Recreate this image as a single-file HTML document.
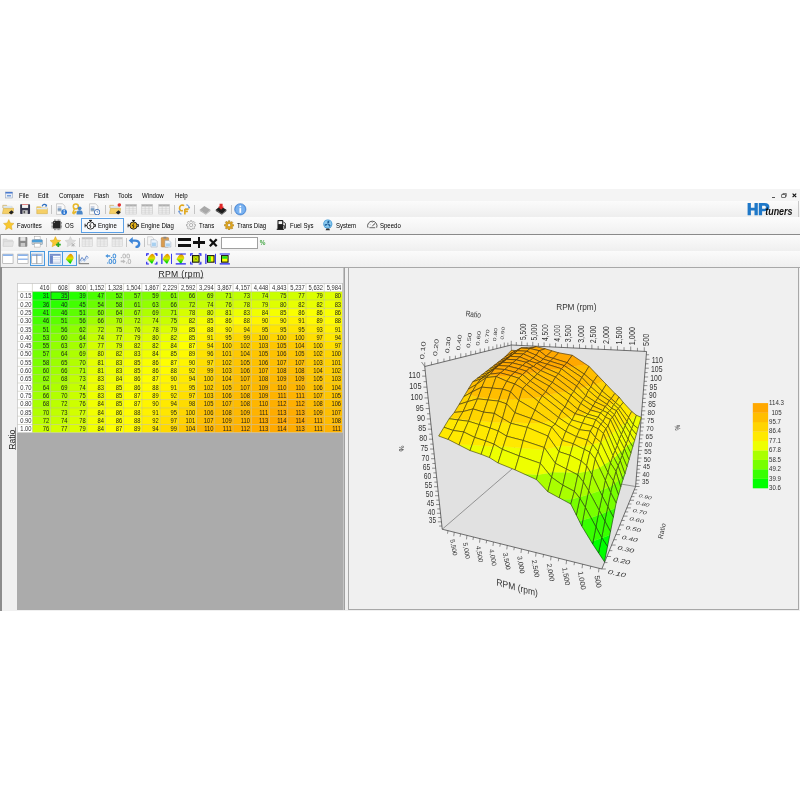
<!DOCTYPE html>
<html><head><meta charset="utf-8">
<style>
html,body{margin:0;padding:0;background:#fff;width:800px;height:800px;overflow:hidden;position:relative;font-family:"Liberation Sans",sans-serif;}
body{will-change:transform}
.a{position:absolute}
.c{position:absolute;box-sizing:border-box;border-right:0.5px solid #b8b8a0;border-bottom:0.5px solid #b8b8a0;font-size:6.1px;line-height:8.3px;text-align:right;padding-right:1.6px;color:#222;white-space:nowrap;overflow:hidden}
.h{background:#fff;color:#333;border-color:#d8d8d8}
.m{position:absolute;font-size:6.8px;color:#000;top:191.6px;line-height:8px;transform:scaleX(0.9);transform-origin:0 0}
.t{position:absolute;font-size:6.7px;color:#000;top:221.5px;line-height:8px;transform:scaleX(0.9);transform-origin:0 0}
</style></head><body>
<div class="a" style="left:0;top:189px;width:800px;height:422px;background:#f0f0f0"></div>
<div class="a" style="left:0;top:189px;width:800px;height:12px;background:#f4f4f4"></div>
<div class="a" style="left:0;top:201px;width:800px;height:16px;background:linear-gradient(#fbfbfb,#eeeeee)"></div>
<div class="a" style="left:0;top:217px;width:800px;height:17px;background:linear-gradient(#fcfcfc,#f0f0f0)"></div>
<div class="a" style="left:0;top:233.6px;width:800px;height:0.9px;background:#8a8a8a"></div>
<div class="a" style="left:0;top:234.5px;width:800px;height:16.5px;background:linear-gradient(#fbfbfb,#efefef)"></div>
<div class="a" style="left:0;top:251px;width:800px;height:16px;background:linear-gradient(#fbfbfb,#efefef)"></div>
<div class="a" style="left:0;top:266.6px;width:800px;height:0.8px;background:#a8a8a8"></div>
<div class="m" style="left:18.7px">File</div>
<div class="m" style="left:38px">Edit</div>
<div class="m" style="left:58.5px">Compare</div>
<div class="m" style="left:93.8px">Flash</div>
<div class="m" style="left:117.8px">Tools</div>
<div class="m" style="left:141.6px">Window</div>
<div class="m" style="left:174.7px">Help</div>
<svg class="a" style="left:4.5px;top:190.5px" width="8" height="8" viewBox="0 0 16 16"><rect x="1" y="2" width="14" height="12" fill="#e8eef8" stroke="#8898b0"/><rect x="1" y="2" width="14" height="3" fill="#4a7ad0"/><rect x="4" y="8" width="8" height="3" fill="#7aa0d8"/></svg>
<div class="a" style="left:771.6px;top:196.6px;width:3.4px;height:0.7px;background:#555"></div>
<svg class="a" style="left:781px;top:192.8px" width="6" height="5" viewBox="0 0 13 12"><rect x="1" y="4" width="9" height="7" fill="none" stroke="#333" stroke-width="1.6"/><path d="M4 4V1h8v7h-2" fill="none" stroke="#333" stroke-width="1.6"/></svg>
<svg class="a" style="left:792.4px;top:193px" width="4.8" height="4.8" viewBox="0 0 12 12"><path d="M1.5 1.5l9 9M10.5 1.5l-9 9" stroke="#111" stroke-width="2.8"/></svg>
<svg class="a" style="left:740px;top:200px" width="60" height="18" viewBox="740 200 60 18" font-family="Liberation Sans, sans-serif"><path d="M747.6 203.1h3.3v4.6h3.6v-4.6h3.3v12.2h-3.3v-4.8h-3.6v4.8h-3.3z" fill="#1f78c8"/><path d="M758.8 203.1h5.6c3.4 0 5 1.5 5 4s-1.8 4.1-5 4.1h-2.3v4.1h-3.3zM762.1 205.7v3h1.9c1.2 0 1.9-.5 1.9-1.5s-.7-1.5-1.9-1.5z" fill="#1f78c8" fill-rule="evenodd"/><text transform="translate(765.2 215.3) scale(0.8 1)" font-size="11.2" font-weight="bold" font-style="italic" fill="#111">tuners</text></svg>
<div class="a" style="left:798.3px;top:201px;width:0.7px;height:16px;background:#c8c8c8"></div>
<svg class="a" style="left:2px;top:203.2px" width="12.2" height="12.2" viewBox="0 0 16 16"><path d="M1 3h5l1 1.5h6v2H1z" fill="#e8d9a8" stroke="#b89a50" stroke-width=".6"/><rect x="2" y="4" width="11" height="4" fill="#dbe8f5"/><path d="M0.5 14L2 7h13.5l-1.5 7z" fill="#f5cf66" stroke="#c9a23c" stroke-width=".6"/><path d="M9 12.5l3.5-3 3 2.5-3.5 3.2z" fill="#222"/></svg>
<svg class="a" style="left:19.2px;top:203.2px" width="12.2" height="12.2" viewBox="0 0 16 16"><rect x="1.5" y="1.5" width="13" height="13" rx="1" fill="#34344a"/><rect x="4" y="1.5" width="8" height="5" fill="#f4f4f4"/><rect x="4" y="1.5" width="8" height="1" fill="#d66"/><rect x="4.5" y="9.5" width="7" height="5" fill="#c8c8c8"/><rect x="6" y="10.5" width="2" height="3" fill="#555"/></svg>
<svg class="a" style="left:35.5px;top:203.2px" width="12.2" height="12.2" viewBox="0 0 16 16"><path d="M1 5h5l1 1.5h8V14H1z" fill="#f5cf66" stroke="#c9a23c" stroke-width=".6"/><rect x="1" y="6.5" width="14" height="1.8" fill="#dbe8f5"/><path d="M8 4.5c1-3 4-3.5 5.5-1.5" stroke="#2d6fc0" stroke-width="1.5" fill="none"/><path d="M14.5 1.5v3h-3z" fill="#2d6fc0"/></svg>
<div class="a" style="left:51.2px;top:205px;width:0.7px;height:9px;background:#c4c4c4"></div>
<svg class="a" style="left:55px;top:203.2px" width="12.2" height="12.2" viewBox="0 0 16 16"><path d="M2 1h8l3 3v11H2z" fill="#fafafa" stroke="#a8a8a8" stroke-width=".7"/><rect x="3.5" y="4" width="5" height="2.5" fill="#c9d0e0"/><rect x="3.5" y="7" width="5" height="2" fill="#5c88b8"/><rect x="3.5" y="9" width="5" height="2" fill="#9ab"/><circle cx="12" cy="12" r="3.8" fill="#2f78d0"/><rect x="11.4" y="11" width="1.3" height="3.5" fill="#fff"/><circle cx="12" cy="9.7" r=".7" fill="#fff"/></svg>
<svg class="a" style="left:72px;top:203.2px" width="12.2" height="12.2" viewBox="0 0 16 16"><circle cx="5" cy="4.5" r="3.3" fill="none" stroke="#e8b828" stroke-width="2"/><path d="M3.5 7l-2.5 6 1.5 1 1-2 1 .5 1-2" stroke="#e8b828" stroke-width="1.8" fill="none"/><circle cx="10" cy="7" r="2.5" fill="#4a86c8"/><path d="M6 15v-2c0-2.5 2-3.5 4-3.5s4 1 4 3.5v2z" fill="#4a86c8"/></svg>
<svg class="a" style="left:88.2px;top:203.2px" width="12.2" height="12.2" viewBox="0 0 16 16"><path d="M2 1h8l3 3v11H2z" fill="#fafafa" stroke="#a8a8a8" stroke-width=".7"/><rect x="3.5" y="4" width="5" height="2.5" fill="#c9d0e0"/><rect x="3.5" y="7" width="5" height="2" fill="#5c88b8"/><rect x="3.5" y="9" width="5" height="2" fill="#9ab"/><circle cx="12" cy="12" r="3.6" fill="#fff" stroke="#2f62b0" stroke-width="1.2"/><path d="M12 10v2h1.5" stroke="#2f62b0" stroke-width=".8" fill="none"/></svg>
<div class="a" style="left:105px;top:205px;width:0.7px;height:9px;background:#c4c4c4"></div>
<svg class="a" style="left:108.5px;top:203.2px" width="12.2" height="12.2" viewBox="0 0 16 16"><path d="M1 3h5l1 1.5h6v2H1z" fill="#e8d9a8" stroke="#b89a50" stroke-width=".6"/><rect x="2" y="4" width="11" height="4" fill="#dbe8f5"/><path d="M0.5 14L2 7h13.5l-1.5 7z" fill="#f5cf66" stroke="#c9a23c" stroke-width=".6"/><path d="M9 12.5l3.5-3 3 2.5-3.5 3.2z" fill="#222"/><circle cx="13.5" cy="2.5" r="2.3" fill="#e03030"/></svg>
<svg class="a" style="left:124.8px;top:203.2px" width="12.2" height="12.2" viewBox="0 0 16 16"><rect x="1" y="2" width="14" height="12.5" fill="#f2f2f2" stroke="#c8c8c8" stroke-width=".8"/><rect x="1" y="2" width="14" height="2.5" fill="#b0b0b0"/><line x1="1" y1="7" x2="15" y2="7" stroke="#c8c8c8" stroke-width=".7"/><line x1="1" y1="9.5" x2="15" y2="9.5" stroke="#c8c8c8" stroke-width=".7"/><line x1="1" y1="12" x2="15" y2="12" stroke="#c8c8c8" stroke-width=".7"/><line x1="5.5" y1="2" x2="5.5" y2="14.5" stroke="#c8c8c8" stroke-width=".7"/><line x1="10.5" y1="2" x2="10.5" y2="14.5" stroke="#c8c8c8" stroke-width=".7"/></svg>
<svg class="a" style="left:141.4px;top:203.2px" width="12.2" height="12.2" viewBox="0 0 16 16"><rect x="1" y="2" width="14" height="12.5" fill="#f2f2f2" stroke="#c8c8c8" stroke-width=".8"/><rect x="1" y="2" width="14" height="2.5" fill="#b0b0b0"/><line x1="1" y1="7" x2="15" y2="7" stroke="#c8c8c8" stroke-width=".7"/><line x1="1" y1="9.5" x2="15" y2="9.5" stroke="#c8c8c8" stroke-width=".7"/><line x1="1" y1="12" x2="15" y2="12" stroke="#c8c8c8" stroke-width=".7"/><line x1="5.5" y1="2" x2="5.5" y2="14.5" stroke="#c8c8c8" stroke-width=".7"/><line x1="10.5" y1="2" x2="10.5" y2="14.5" stroke="#c8c8c8" stroke-width=".7"/></svg>
<svg class="a" style="left:158.2px;top:203.2px" width="12.2" height="12.2" viewBox="0 0 16 16"><rect x="1" y="2" width="14" height="12.5" fill="#f2f2f2" stroke="#c8c8c8" stroke-width=".8"/><rect x="1" y="2" width="14" height="2.5" fill="#b0b0b0"/><line x1="1" y1="7" x2="15" y2="7" stroke="#c8c8c8" stroke-width=".7"/><line x1="1" y1="9.5" x2="15" y2="9.5" stroke="#c8c8c8" stroke-width=".7"/><line x1="1" y1="12" x2="15" y2="12" stroke="#c8c8c8" stroke-width=".7"/><line x1="5.5" y1="2" x2="5.5" y2="14.5" stroke="#c8c8c8" stroke-width=".7"/><line x1="10.5" y1="2" x2="10.5" y2="14.5" stroke="#c8c8c8" stroke-width=".7"/></svg>
<div class="a" style="left:174.4px;top:205px;width:0.7px;height:9px;background:#c4c4c4"></div>
<svg class="a" style="left:178.4px;top:203.2px" width="12.2" height="12.2" viewBox="0 0 16 16"><path d="M8 3.5c-2-1.5-6-1-6 3.5 0 3 2.5 3.5 4.5 3" stroke="#e0a820" stroke-width="2.2" fill="none"/><path d="M9 8h5M9 8v7M9 11h4" stroke="#e0a820" stroke-width="2.2" fill="none"/><path d="M11 2.5c2 0 3 1 3.5 3" stroke="#3070d0" stroke-width="1.2" fill="none"/><path d="M13 5.5h3l-1.5 2z" fill="#3070d0"/><path d="M1.5 12c.3 1.5 1.3 2.5 3 2.5" stroke="#3070d0" stroke-width="1.2" fill="none"/><path d="M0 11.5h3l-1.5-2z" fill="#3070d0"/></svg>
<div class="a" style="left:194.4px;top:205px;width:0.7px;height:9px;background:#c4c4c4"></div>
<svg class="a" style="left:198.5px;top:203.2px" width="12.2" height="12.2" viewBox="0 0 16 16"><path d="M1 9l6-5 8 5-6 5z" fill="#a8a8a8"/><path d="M1 9l8 5 6-5v1.5l-6 5-8-5z" fill="#a8a8a8" opacity=".8"/></svg>
<svg class="a" style="left:215px;top:203.2px" width="12.2" height="12.2" viewBox="0 0 16 16"><path d="M1 9l6-5 8 5-6 5z" fill="#1e1e1e"/><path d="M1 9l8 5 6-5v1.5l-6 5-8-5z" fill="#1e1e1e" opacity=".8"/><path d="M6 1h4v4h2l-4 4-4-4h2z" fill="#e02828"/></svg>
<div class="a" style="left:230.6px;top:205px;width:0.7px;height:9px;background:#c4c4c4"></div>
<svg class="a" style="left:234px;top:203.0px" width="12.6" height="12.6" viewBox="0 0 16 16"><circle cx="8" cy="8" r="7.2" fill="#5d9de8" stroke="#3a78c8" stroke-width=".8"/><circle cx="8" cy="8" r="6" fill="#7ab2f0"/><rect x="6.9" y="6.5" width="2.2" height="6" fill="#fff"/><circle cx="8" cy="4.3" r="1.2" fill="#fff"/></svg>
<div class="a" style="left:81.2px;top:218.3px;width:43.3px;height:14.3px;box-sizing:border-box;border:0.8px solid #5aa0e6;background:#f6f9fc"></div>
<svg class="a" style="left:2.6px;top:219.2px" width="11.6" height="11.6" viewBox="0 0 16 16"><path d="M8 .8l2.2 4.7 5.1.6-3.8 3.5 1 5.1L8 12.2 3.5 14.7l1-5.1L.7 6.1l5.1-.6z" fill="#f8c830" stroke="#d8a018" stroke-width=".6"/></svg>
<div class="t" style="left:16.9px">Favorites</div>
<svg class="a" style="left:50.8px;top:219.39999999999998px" width="11.6" height="11.6" viewBox="0 0 16 16"><rect x="2.8" y="2.8" width="10.4" height="10.4" rx=".6" fill="#262626"/><rect x="4.2" y="0.6" width=".9" height="2.2" fill="#666"/><rect x="4.2" y="13.2" width=".9" height="2.2" fill="#666"/><rect x="6.1" y="0.6" width=".9" height="2.2" fill="#666"/><rect x="6.1" y="13.2" width=".9" height="2.2" fill="#666"/><rect x="8" y="0.6" width=".9" height="2.2" fill="#666"/><rect x="8" y="13.2" width=".9" height="2.2" fill="#666"/><rect x="9.9" y="0.6" width=".9" height="2.2" fill="#666"/><rect x="9.9" y="13.2" width=".9" height="2.2" fill="#666"/><rect x="11.8" y="0.6" width=".9" height="2.2" fill="#666"/><rect x="11.8" y="13.2" width=".9" height="2.2" fill="#666"/><rect x="0.6" y="4.2" width="2.2" height=".9" fill="#666"/><rect x="13.2" y="4.2" width="2.2" height=".9" fill="#666"/><rect x="0.6" y="6.1" width="2.2" height=".9" fill="#666"/><rect x="13.2" y="6.1" width="2.2" height=".9" fill="#666"/><rect x="0.6" y="8" width="2.2" height=".9" fill="#666"/><rect x="13.2" y="8" width="2.2" height=".9" fill="#666"/><rect x="0.6" y="9.9" width="2.2" height=".9" fill="#666"/><rect x="13.2" y="9.9" width="2.2" height=".9" fill="#666"/><rect x="0.6" y="11.8" width="2.2" height=".9" fill="#666"/><rect x="13.2" y="11.8" width="2.2" height=".9" fill="#666"/><circle cx="4.6" cy="4.6" r=".7" fill="#ddd"/></svg>
<div class="t" style="left:65.2px">OS</div>
<svg class="a" style="left:83.8px;top:219.2px" width="12.6" height="11.6" viewBox="0 0 16 16"><rect x="6.3" y="1.2" width="4" height="1.6" fill="#222"/><rect x="7.6" y="2.6" width="1.4" height="1.6" fill="#222"/><path d="M0.8 6.5v5M0.8 9h3" stroke="#222" stroke-width="1.3" fill="none"/><path d="M12.8 7.5h2.4v3h-2.4" stroke="#222" stroke-width="1.2" fill="none"/><circle cx="8.3" cy="9" r="5" fill="#fff" stroke="#222" stroke-width="1.3"/><path d="M9 5.8L6.8 9.4h2.1l-1 3" stroke="#111" stroke-width="1.1" fill="none"/></svg>
<div class="t" style="left:98px">Engine</div>
<svg class="a" style="left:127px;top:219.2px" width="12.6" height="11.6" viewBox="0 0 16 16"><rect x="6.3" y="1.2" width="4" height="1.6" fill="#222"/><rect x="7.6" y="2.6" width="1.4" height="1.6" fill="#222"/><path d="M0.8 6.5v5M0.8 9h3" stroke="#222" stroke-width="1.3" fill="none"/><path d="M12.8 7.5h2.4v3h-2.4" stroke="#222" stroke-width="1.2" fill="none"/><circle cx="8.3" cy="9" r="5" fill="#e8b418" stroke="#222" stroke-width="1.3"/><path d="M9 5.8L6.8 9.4h2.1l-1 3" stroke="#111" stroke-width="1.1" fill="none"/></svg>
<div class="t" style="left:140.8px">Engine Diag</div>
<svg class="a" style="left:185.6px;top:220.3px" width="10.2" height="10.2" viewBox="0 0 16 16"><path d="M7 1h2l.4 2 1.4.6 1.7-1.2 1.4 1.4-1.2 1.7.6 1.4 2 .4v2l-2 .4-.6 1.4 1.2 1.7-1.4 1.4-1.7-1.2-1.4.6-.4 2H7l-.4-2-1.4-.6-1.7 1.2-1.4-1.4 1.2-1.7-.6-1.4-2-.4V7l2-.4.6-1.4-1.2-1.7 1.4-1.4 1.7 1.2 1.4-.6z" fill="#f4f4f4" stroke="#777" stroke-width=".8"/><circle cx="8" cy="8" r="2.6" fill="#f5f5f5" stroke="#777" stroke-width=".8"/></svg>
<div class="t" style="left:198.5px">Trans</div>
<svg class="a" style="left:223.7px;top:220.3px" width="10.2" height="10.2" viewBox="0 0 16 16"><path d="M7 1h2l.4 2 1.4.6 1.7-1.2 1.4 1.4-1.2 1.7.6 1.4 2 .4v2l-2 .4-.6 1.4 1.2 1.7-1.4 1.4-1.7-1.2-1.4.6-.4 2H7l-.4-2-1.4-.6-1.7 1.2-1.4-1.4 1.2-1.7-.6-1.4-2-.4V7l2-.4.6-1.4-1.2-1.7 1.4-1.4 1.7 1.2 1.4-.6z" fill="#e0a820" stroke="#a07010" stroke-width=".8"/><circle cx="8" cy="8" r="2.6" fill="#f5f5f5" stroke="#a07010" stroke-width=".8"/></svg>
<div class="t" style="left:237px">Trans Diag</div>
<svg class="a" style="left:276px;top:219.2px" width="11.6" height="11.6" viewBox="0 0 16 16"><rect x="2" y="1.5" width="8" height="13" rx="1" fill="#1e1e1e"/><rect x="3.5" y="3" width="5" height="4" fill="#f4f4f4"/><path d="M10 4l3 2v6.5c0 1-1.5 1-1.5 0V9H10" stroke="#1e1e1e" stroke-width="1.2" fill="none"/><rect x="1" y="13.5" width="10" height="1.5" fill="#1e1e1e"/></svg>
<div class="t" style="left:289.5px">Fuel Sys</div>
<svg class="a" style="left:322px;top:219.2px" width="11.6" height="11.6" viewBox="0 0 16 16"><circle cx="8" cy="7" r="6.3" fill="#3f9ad8"/><circle cx="8" cy="7" r="5.2" fill="#8ac8ee"/><path d="M8 7C6 3 9 1.5 10 3S9 6 8 7zM8 7c4 0 4.5 3 3 3.5S9 8 8 7zM8 7c-2 3.5-5 2.5-4.5 1S7 7 8 7z" fill="#1f5f98"/><path d="M6 13h4l1 2.5H5z" fill="#333"/></svg>
<div class="t" style="left:335.5px">System</div>
<svg class="a" style="left:366px;top:219.2px" width="12.6" height="11.6" viewBox="0 0 16 16"><path d="M2 12A6.5 6.5 0 1 1 14 12" fill="none" stroke="#333" stroke-width="1.1"/><path d="M4 12h8" stroke="#333" stroke-width="1"/><path d="M8 10l3.5-4" stroke="#333" stroke-width="1.1"/><path d="M4.5 7l.8.6M8 4.3v1M11.5 7l-.8.6" stroke="#333" stroke-width=".8"/></svg>
<div class="t" style="left:380px">Speedo</div>
<svg class="a" style="left:2.2px;top:236.3px" width="12.4" height="11.8" viewBox="0 0 16 16"><path d="M1 4h5l1 1.5h7V14H1z" fill="#dedede" stroke="#c8c8c8" stroke-width=".6"/><path d="M1 14l1.5-6.5h13L14 14z" fill="#e4e4e4" stroke="#cfcfcf" stroke-width=".6"/></svg>
<svg class="a" style="left:17.2px;top:236.3px" width="11.8" height="11.8" viewBox="0 0 16 16"><rect x="2" y="1.5" width="12" height="13" rx="1" fill="#8a8a8a"/><rect x="4.5" y="1.5" width="7" height="5" fill="#e8e8e8"/><rect x="5" y="9.5" width="6" height="5" fill="#c8c8c8"/></svg>
<svg class="a" style="left:31px;top:236.3px" width="12.4" height="11.8" viewBox="0 0 16 16"><rect x="4" y="1" width="8" height="4" fill="#fff" stroke="#999" stroke-width=".6"/><rect x="1" y="5" width="14" height="6.5" rx="1" fill="#4aa0dc" stroke="#5a7a98" stroke-width=".6"/><rect x="1" y="8.5" width="14" height="3" fill="#c8c8c8"/><rect x="4" y="10" width="8" height="5" fill="#fff" stroke="#999" stroke-width=".6"/></svg>
<div class="a" style="left:46.3px;top:238px;width:0.7px;height:9px;background:#c4c4c4"></div>
<svg class="a" style="left:49px;top:236.3px" width="12.8" height="11.8" viewBox="0 0 16 16"><path d="M8 .8l2.2 4.7 5.1.6-3.8 3.5 1 5.1L8 12.2 3.5 14.7l1-5.1L.7 6.1l5.1-.6z" fill="#f8c830" stroke="#d8a018" stroke-width=".6"/><path d="M12 8.5v6.5M8.8 11.75h6.5" stroke="#28a828" stroke-width="2.3"/></svg>
<svg class="a" style="left:63.8px;top:236.3px" width="12.8" height="11.8" viewBox="0 0 16 16"><path d="M8 .8l2.2 4.7 5.1.6-3.8 3.5 1 5.1L8 12.2 3.5 14.7l1-5.1L.7 6.1l5.1-.6z" fill="#dcdcdc" stroke="#c8c8c8" stroke-width=".6"/><path d="M10 10l4 4M14 10l-4 4" stroke="#a8a8a8" stroke-width="1.3"/></svg>
<div class="a" style="left:79.3px;top:238px;width:0.7px;height:9px;background:#c4c4c4"></div>
<svg class="a" style="left:80.8px;top:236.3px" width="12.4" height="11.8" viewBox="0 0 16 16"><rect x="1" y="2" width="14" height="12.5" fill="#f2f2f2" stroke="#d0d0d0" stroke-width=".8"/><rect x="1" y="2" width="14" height="2.5" fill="#c4c4c4"/><line x1="1" y1="7" x2="15" y2="7" stroke="#d0d0d0" stroke-width=".7"/><line x1="1" y1="9.5" x2="15" y2="9.5" stroke="#d0d0d0" stroke-width=".7"/><line x1="1" y1="12" x2="15" y2="12" stroke="#d0d0d0" stroke-width=".7"/><line x1="5.5" y1="2" x2="5.5" y2="14.5" stroke="#d0d0d0" stroke-width=".7"/><line x1="10.5" y1="2" x2="10.5" y2="14.5" stroke="#d0d0d0" stroke-width=".7"/></svg>
<svg class="a" style="left:95.9px;top:236.3px" width="12.4" height="11.8" viewBox="0 0 16 16"><rect x="1" y="2" width="14" height="12.5" fill="#f2f2f2" stroke="#d0d0d0" stroke-width=".8"/><rect x="1" y="2" width="14" height="2.5" fill="#c4c4c4"/><line x1="1" y1="7" x2="15" y2="7" stroke="#d0d0d0" stroke-width=".7"/><line x1="1" y1="9.5" x2="15" y2="9.5" stroke="#d0d0d0" stroke-width=".7"/><line x1="1" y1="12" x2="15" y2="12" stroke="#d0d0d0" stroke-width=".7"/><line x1="5.5" y1="2" x2="5.5" y2="14.5" stroke="#d0d0d0" stroke-width=".7"/><line x1="10.5" y1="2" x2="10.5" y2="14.5" stroke="#d0d0d0" stroke-width=".7"/></svg>
<svg class="a" style="left:110.5px;top:236.3px" width="12.4" height="11.8" viewBox="0 0 16 16"><rect x="1" y="2" width="14" height="12.5" fill="#f2f2f2" stroke="#d0d0d0" stroke-width=".8"/><rect x="1" y="2" width="14" height="2.5" fill="#c4c4c4"/><line x1="1" y1="7" x2="15" y2="7" stroke="#d0d0d0" stroke-width=".7"/><line x1="1" y1="9.5" x2="15" y2="9.5" stroke="#d0d0d0" stroke-width=".7"/><line x1="1" y1="12" x2="15" y2="12" stroke="#d0d0d0" stroke-width=".7"/><line x1="5.5" y1="2" x2="5.5" y2="14.5" stroke="#d0d0d0" stroke-width=".7"/><line x1="10.5" y1="2" x2="10.5" y2="14.5" stroke="#d0d0d0" stroke-width=".7"/></svg>
<div class="a" style="left:125.6px;top:238px;width:0.7px;height:9px;background:#c4c4c4"></div>
<svg class="a" style="left:128px;top:236.3px" width="12.8" height="11.8" viewBox="0 0 16 16"><path d="M4.5 6.2H9c3.2 0 5.5 1.9 5.5 4.4S12.5 15 9.5 15" stroke="#3f86d8" stroke-width="3.2" fill="none"/><path d="M0.3 6.2L5.8 1.2v10z" fill="#3f86d8"/></svg>
<div class="a" style="left:143.6px;top:238px;width:0.7px;height:9px;background:#c4c4c4"></div>
<svg class="a" style="left:146px;top:236.3px" width="12.8" height="11.8" viewBox="0 0 16 16"><path d="M1.5 1h6l2 2v9h-8z" fill="#f6f6f6" stroke="#aaa" stroke-width=".6"/><path d="M6 5h6l2.5 2.5V15H6z" fill="#eaf3fc" stroke="#8a9ab0" stroke-width=".6"/><rect x="7.3" y="9" width="5.5" height="4.8" fill="#a8d0f0"/></svg>
<svg class="a" style="left:160.3px;top:236.3px" width="12.8" height="11.8" viewBox="0 0 16 16"><rect x="1" y="2" width="10" height="13" rx="1" fill="#d89c50" stroke="#a87030" stroke-width=".6"/><rect x="4" y="1" width="4" height="2.5" fill="#888"/><path d="M6 6h5.5l2.5 2.5V15H6z" fill="#eaf3fc" stroke="#8a9ab0" stroke-width=".6"/><rect x="7.3" y="10" width="5.5" height="4" fill="#a8d0f0"/></svg>
<div class="a" style="left:175.2px;top:238px;width:0.7px;height:9px;background:#c4c4c4"></div>
<div class="a" style="left:177.5px;top:237.9px;width:13.5px;height:2.9px;background:#111"></div>
<div class="a" style="left:177.5px;top:244px;width:13.5px;height:2.9px;background:#111"></div>
<div class="a" style="left:192.5px;top:241.3px;width:12.7px;height:2.6px;background:#111"></div>
<div class="a" style="left:197.5px;top:236.8px;width:2.6px;height:11.5px;background:#111"></div>
<svg class="a" style="left:208.2px;top:237.8px" width="10.5" height="9.5" viewBox="0 0 11 11"><path d="M1.5 1.5l8 8M9.5 1.5l-8 8" stroke="#111" stroke-width="2.6"/></svg>
<div class="a" style="left:221px;top:237px;width:36.7px;height:11.5px;box-sizing:border-box;border:0.7px solid #a0a0a0;background:#fff"></div>
<div class="a" style="left:259.8px;top:238.8px;font-size:6.4px;color:#48a848;font-weight:bold">%</div>
<svg class="a" style="left:2.2px;top:252.8px" width="11.8" height="11.8" viewBox="0 0 16 16"><rect x="1" y="1.5" width="14" height="13" fill="#fff" stroke="#999" stroke-width=".8"/><rect x="1.4" y="1.9" width="13.2" height="2" fill="#7aa8e8"/></svg>
<svg class="a" style="left:16.9px;top:252.8px" width="11.8" height="11.8" viewBox="0 0 16 16"><rect x="1" y="1.5" width="14" height="13" fill="#fff" stroke="#999" stroke-width=".8"/><rect x="1.4" y="1.9" width="13.2" height="2" fill="#7aa8e8"/><rect x="1.4" y="7.6" width="13.2" height="1.6" fill="#7aa8e8"/></svg>
<div class="a" style="left:29.8px;top:251.2px;width:15.2px;height:15.2px;box-sizing:border-box;border:0.7px solid #4a9ae0;background:#e8f1fb"></div>
<svg class="a" style="left:31.4px;top:252.8px" width="11.8" height="11.8" viewBox="0 0 16 16"><rect x="1" y="1.5" width="14" height="13" fill="#fff" stroke="#999" stroke-width=".8"/><rect x="1.4" y="1.9" width="13.2" height="2" fill="#7aa8e8"/><rect x="7.3" y="1.9" width="1.2" height="12.6" fill="#888"/></svg>
<div class="a" style="left:47.8px;top:251.2px;width:29.2px;height:15.2px;box-sizing:border-box;border:0.7px solid #4a9ae0;background:#e8f1fb"></div>
<div class="a" style="left:62.2px;top:251.2px;width:0.7px;height:15.2px;background:#4a9ae0"></div>
<svg class="a" style="left:49.2px;top:252.8px" width="12.3" height="11.8" viewBox="0 0 16 16"><rect x="1" y="1.5" width="14" height="13" fill="#fff" stroke="#8aa0c8" stroke-width=".6"/><rect x="1" y="1.5" width="14" height="2.2" fill="#6a86c8"/><rect x="1" y="3.7" width="4" height="10.8" fill="#6a86c8"/><line x1="5" y1="6" x2="15" y2="6" stroke="#9ab0d8" stroke-width=".6"/><line x1="5" y1="8.5" x2="15" y2="8.5" stroke="#9ab0d8" stroke-width=".6"/><line x1="5" y1="11" x2="15" y2="11" stroke="#9ab0d8" stroke-width=".6"/><line x1="5" y1="13" x2="15" y2="13" stroke="#9ab0d8" stroke-width=".6"/></svg>
<svg class="a" style="left:63.8px;top:252.8px" width="12.3" height="11.8" viewBox="0 0 16 16"><defs><linearGradient id="sg" x1="0" y1="0" x2="0" y2="1"><stop offset="0.05" stop-color="#e89000"/><stop offset=".45" stop-color="#e0e000"/><stop offset=".85" stop-color="#00d800"/></linearGradient></defs><path d="M8.8 1C10.5 1 12.8 5 12.8 7L8.3 15 2 8.5C3 6 6.5 1 8.8 1z" fill="url(#sg)"/></svg>
<svg class="a" style="left:78.4px;top:252.8px" width="11.8" height="11.8" viewBox="0 0 16 16"><path d="M1.5 2v12.5H15" stroke="#555" stroke-width="1.1" fill="none"/><path d="M2.5 11l3-5 3 4 3-6 2.5 2" stroke="#4070c0" stroke-width="1.1" fill="none"/><path d="M3 13l3-3.5 3 2 3-4 2.5-1" stroke="#8ab0e8" stroke-width=".8" fill="none"/></svg>
<svg class="a" style="left:105.2px;top:252.8px" width="11.6" height="11" viewBox="0 0 11.6 11"><path d="M0.3 3.0l2.6-2.1v1.3h2.3v1.6h-2.3v1.3z" fill="#4a94dc"/><rect x="6.0" y="3.9999999999999996" width="1.2" height="1.2" fill="#4a94dc"/><ellipse cx="9.4" cy="3.0" rx="1.35" ry="2.05" fill="none" stroke="#4a94dc" stroke-width="1.05"/><rect x="2.1" y="9.4" width="1.2" height="1.2" fill="#4a94dc"/><ellipse cx="5.4" cy="8.4" rx="1.35" ry="2.05" fill="none" stroke="#4a94dc" stroke-width="1.05"/><ellipse cx="9.4" cy="8.4" rx="1.35" ry="2.05" fill="none" stroke="#4a94dc" stroke-width="1.05"/></svg>
<svg class="a" style="left:120.2px;top:252.8px" width="11.6" height="11" viewBox="0 0 11.6 11"><rect x="0.7999999999999999" y="3.9999999999999996" width="1.2" height="1.2" fill="#bdbdbd"/><ellipse cx="4.2" cy="3.0" rx="1.35" ry="2.05" fill="none" stroke="#bdbdbd" stroke-width="1.05"/><ellipse cx="8.2" cy="3.0" rx="1.35" ry="2.05" fill="none" stroke="#bdbdbd" stroke-width="1.05"/><path d="M5.6 8.4l-2.6-2.1v1.3h-2.3v1.6h2.3v1.3z" fill="#bdbdbd"/><rect x="6.0" y="9.4" width="1.2" height="1.2" fill="#bdbdbd"/><ellipse cx="9.4" cy="8.4" rx="1.35" ry="2.05" fill="none" stroke="#bdbdbd" stroke-width="1.05"/></svg>
<svg class="a" style="left:146.2px;top:253px" width="11.6" height="11.8" viewBox="0 0 16 16"><defs><linearGradient id="sg2" x1="0" y1="0" x2="0" y2="1"><stop offset="0.05" stop-color="#e89000"/><stop offset=".45" stop-color="#e0e000"/><stop offset=".85" stop-color="#00d800"/></linearGradient></defs><path d="M8.8 1C10.5 1 12.8 5 12.8 7L8.3 15 2 8.5C3 6 6.5 1 8.8 1z" fill="url(#sg2)"/><path d="M1 4V1h3M12 1h3v3M15 12v3h-3M4 15H1v-3" stroke="#2020f0" stroke-width="1.6" fill="none"/></svg>
<svg class="a" style="left:160.8px;top:253px" width="11.6" height="11.8" viewBox="0 0 16 16"><defs><linearGradient id="sg3" x1="0" y1="0" x2="0" y2="1"><stop offset="0.05" stop-color="#e89000"/><stop offset=".45" stop-color="#e0e000"/><stop offset=".85" stop-color="#00d800"/></linearGradient></defs><path d="M8.8 1C10.5 1 12.8 5 12.8 7L8.3 15 2 8.5C3 6 6.5 1 8.8 1z" fill="url(#sg3)"/><path d="M1.2 1v14M14.8 1v14" stroke="#2020f0" stroke-width="1.6"/></svg>
<svg class="a" style="left:175.4px;top:253px" width="11.6" height="11.8" viewBox="0 0 16 16"><defs><linearGradient id="sg4" x1="0" y1="0" x2="0" y2="1"><stop offset="0.05" stop-color="#e89000"/><stop offset=".45" stop-color="#e0e000"/><stop offset=".85" stop-color="#00d800"/></linearGradient></defs><path d="M8.8 1C10.5 1 12.8 5 12.8 7L8.3 15 2 8.5C3 6 6.5 1 8.8 1z" fill="url(#sg4)"/><path d="M1 1.2h14M1 14.8h14" stroke="#2020f0" stroke-width="1.6"/></svg>
<svg class="a" style="left:190.2px;top:253px" width="11.6" height="11.8" viewBox="0 0 16 16"><rect x="3.5" y="3.5" width="9" height="9" fill="#c8e800" stroke="#111" stroke-width="1.5"/><path d="M6 6l4 4M10 6l-4 4" stroke="#6a6a00" stroke-width=".8"/><path d="M1 4V1h3M12 1h3v3M15 12v3h-3M4 15H1v-3" stroke="#2020f0" stroke-width="1.6" fill="none"/></svg>
<svg class="a" style="left:204.6px;top:253px" width="11.6" height="11.8" viewBox="0 0 16 16"><rect x="3.5" y="3.5" width="9" height="9" fill="#ffff00" stroke="#111" stroke-width="1.5"/><rect x="4.3" y="4.3" width="3.7" height="7.4" fill="#20e020"/><path d="M1.2 1v14M14.8 1v14" stroke="#2020f0" stroke-width="1.6"/></svg>
<svg class="a" style="left:219px;top:253px" width="11.6" height="11.8" viewBox="0 0 16 16"><rect x="3.5" y="3.5" width="9" height="9" fill="#ffff00" stroke="#111" stroke-width="1.5"/><rect x="4.3" y="4.3" width="7.4" height="3.5" fill="#20e020"/><path d="M1 1.2h14M1 14.8h14" stroke="#2020f0" stroke-width="1.6"/></svg>
<!-- panels -->
<div class="a" style="left:0;top:267px;width:2px;height:344px;background:#8c8c8c"></div>
<div class="a" style="left:0;top:234.4px;width:1.2px;height:33px;background:#a8a8a8"></div>
<div class="a" style="left:17.4px;top:283px;width:325.2px;height:327px;background:#ababab"></div>
<div class="a" style="left:342.6px;top:267.5px;width:1.6px;height:342.5px;background:#c4c4c4"></div>
<div class="a" style="left:344px;top:267px;width:0.8px;height:343px;background:#a0a0a0"></div>
<div class="a" style="left:348px;top:267px;width:450.5px;height:343px;box-sizing:border-box;border:0.8px solid #a8a8a8;background:#f0f0f0"></div>
<svg class="a" style="left:0;top:0" width="800" height="800" viewBox="0 0 800 800" font-family="Liberation Sans, sans-serif"><rect x="17.4" y="283.4" width="325.08" height="149.40" fill="#fff"/><rect x="32.40" y="291.70" width="18.29" height="8.35" fill="#02ff00"/><rect x="50.64" y="291.70" width="18.29" height="8.35" fill="#14ff00"/><rect x="68.88" y="291.70" width="18.29" height="8.35" fill="#26ff00"/><rect x="87.12" y="291.70" width="18.29" height="8.35" fill="#4aff00"/><rect x="105.36" y="291.70" width="18.29" height="8.35" fill="#61ff00"/><rect x="123.60" y="291.70" width="18.29" height="8.35" fill="#77ff00"/><rect x="141.84" y="291.70" width="18.29" height="8.35" fill="#80ff00"/><rect x="160.08" y="291.70" width="18.29" height="8.35" fill="#89ff00"/><rect x="178.32" y="291.70" width="18.29" height="8.35" fill="#a0ff00"/><rect x="196.56" y="291.70" width="18.29" height="8.35" fill="#aeff00"/><rect x="214.80" y="291.70" width="18.29" height="8.35" fill="#b7ff00"/><rect x="233.04" y="291.70" width="18.29" height="8.35" fill="#c0ff00"/><rect x="251.28" y="291.70" width="18.29" height="8.35" fill="#c4ff00"/><rect x="269.52" y="291.70" width="18.29" height="8.35" fill="#c9ff00"/><rect x="287.76" y="291.70" width="18.29" height="8.35" fill="#d2ff00"/><rect x="306.00" y="291.70" width="18.29" height="8.35" fill="#dbff00"/><rect x="324.24" y="291.70" width="18.29" height="8.35" fill="#dfff00"/><rect x="32.40" y="300.00" width="18.29" height="8.35" fill="#18ff00"/><rect x="50.64" y="300.00" width="18.29" height="8.35" fill="#2aff00"/><rect x="68.88" y="300.00" width="18.29" height="8.35" fill="#41ff00"/><rect x="87.12" y="300.00" width="18.29" height="8.35" fill="#6aff00"/><rect x="105.36" y="300.00" width="18.29" height="8.35" fill="#7cff00"/><rect x="123.60" y="300.00" width="18.29" height="8.35" fill="#89ff00"/><rect x="141.84" y="300.00" width="18.29" height="8.35" fill="#92ff00"/><rect x="160.08" y="300.00" width="18.29" height="8.35" fill="#a0ff00"/><rect x="178.32" y="300.00" width="18.29" height="8.35" fill="#bbff00"/><rect x="196.56" y="300.00" width="18.29" height="8.35" fill="#c4ff00"/><rect x="214.80" y="300.00" width="18.29" height="8.35" fill="#cdff00"/><rect x="233.04" y="300.00" width="18.29" height="8.35" fill="#d6ff00"/><rect x="251.28" y="300.00" width="18.29" height="8.35" fill="#dbff00"/><rect x="269.52" y="300.00" width="18.29" height="8.35" fill="#dfff00"/><rect x="287.76" y="300.00" width="18.29" height="8.35" fill="#e8ff00"/><rect x="306.00" y="300.00" width="18.29" height="8.35" fill="#e8ff00"/><rect x="324.24" y="300.00" width="18.29" height="8.35" fill="#edff00"/><rect x="32.40" y="308.30" width="18.29" height="8.35" fill="#2fff00"/><rect x="50.64" y="308.30" width="18.29" height="8.35" fill="#46ff00"/><rect x="68.88" y="308.30" width="18.29" height="8.35" fill="#5cff00"/><rect x="87.12" y="308.30" width="18.29" height="8.35" fill="#85ff00"/><rect x="105.36" y="308.30" width="18.29" height="8.35" fill="#97ff00"/><rect x="123.60" y="308.30" width="18.29" height="8.35" fill="#a5ff00"/><rect x="141.84" y="308.30" width="18.29" height="8.35" fill="#aeff00"/><rect x="160.08" y="308.30" width="18.29" height="8.35" fill="#b7ff00"/><rect x="178.32" y="308.30" width="18.29" height="8.35" fill="#d6ff00"/><rect x="196.56" y="308.30" width="18.29" height="8.35" fill="#dfff00"/><rect x="214.80" y="308.30" width="18.29" height="8.35" fill="#e4ff00"/><rect x="233.04" y="308.30" width="18.29" height="8.35" fill="#edff00"/><rect x="251.28" y="308.30" width="18.29" height="8.35" fill="#f1ff00"/><rect x="269.52" y="308.30" width="18.29" height="8.35" fill="#f6ff00"/><rect x="287.76" y="308.30" width="18.29" height="8.35" fill="#faff00"/><rect x="306.00" y="308.30" width="18.29" height="8.35" fill="#faff00"/><rect x="324.24" y="308.30" width="18.29" height="8.35" fill="#faff00"/><rect x="32.40" y="316.60" width="18.29" height="8.35" fill="#46ff00"/><rect x="50.64" y="316.60" width="18.29" height="8.35" fill="#5cff00"/><rect x="68.88" y="316.60" width="18.29" height="8.35" fill="#73ff00"/><rect x="87.12" y="316.60" width="18.29" height="8.35" fill="#a0ff00"/><rect x="105.36" y="316.60" width="18.29" height="8.35" fill="#b2ff00"/><rect x="123.60" y="316.60" width="18.29" height="8.35" fill="#bbff00"/><rect x="141.84" y="316.60" width="18.29" height="8.35" fill="#c4ff00"/><rect x="160.08" y="316.60" width="18.29" height="8.35" fill="#c9ff00"/><rect x="178.32" y="316.60" width="18.29" height="8.35" fill="#e8ff00"/><rect x="196.56" y="316.60" width="18.29" height="8.35" fill="#f6ff00"/><rect x="214.80" y="316.60" width="18.29" height="8.35" fill="#faff00"/><rect x="233.04" y="316.60" width="18.29" height="8.35" fill="#fffc00"/><rect x="251.28" y="316.60" width="18.29" height="8.35" fill="#fff500"/><rect x="269.52" y="316.60" width="18.29" height="8.35" fill="#fff500"/><rect x="287.76" y="316.60" width="18.29" height="8.35" fill="#fff200"/><rect x="306.00" y="316.60" width="18.29" height="8.35" fill="#fff900"/><rect x="324.24" y="316.60" width="18.29" height="8.35" fill="#fffc00"/><rect x="32.40" y="324.90" width="18.29" height="8.35" fill="#5cff00"/><rect x="50.64" y="324.90" width="18.29" height="8.35" fill="#73ff00"/><rect x="68.88" y="324.90" width="18.29" height="8.35" fill="#8eff00"/><rect x="87.12" y="324.90" width="18.29" height="8.35" fill="#bbff00"/><rect x="105.36" y="324.90" width="18.29" height="8.35" fill="#c9ff00"/><rect x="123.60" y="324.90" width="18.29" height="8.35" fill="#cdff00"/><rect x="141.84" y="324.90" width="18.29" height="8.35" fill="#d6ff00"/><rect x="160.08" y="324.90" width="18.29" height="8.35" fill="#dbff00"/><rect x="178.32" y="324.90" width="18.29" height="8.35" fill="#f6ff00"/><rect x="196.56" y="324.90" width="18.29" height="8.35" fill="#fffc00"/><rect x="214.80" y="324.90" width="18.29" height="8.35" fill="#fff500"/><rect x="233.04" y="324.90" width="18.29" height="8.35" fill="#ffe900"/><rect x="251.28" y="324.90" width="18.29" height="8.35" fill="#ffe600"/><rect x="269.52" y="324.90" width="18.29" height="8.35" fill="#ffe600"/><rect x="287.76" y="324.90" width="18.29" height="8.35" fill="#ffe600"/><rect x="306.00" y="324.90" width="18.29" height="8.35" fill="#ffec00"/><rect x="324.24" y="324.90" width="18.29" height="8.35" fill="#fff200"/><rect x="32.40" y="333.20" width="18.29" height="8.35" fill="#65ff00"/><rect x="50.64" y="333.20" width="18.29" height="8.35" fill="#85ff00"/><rect x="68.88" y="333.20" width="18.29" height="8.35" fill="#97ff00"/><rect x="87.12" y="333.20" width="18.29" height="8.35" fill="#c4ff00"/><rect x="105.36" y="333.20" width="18.29" height="8.35" fill="#d2ff00"/><rect x="123.60" y="333.20" width="18.29" height="8.35" fill="#dbff00"/><rect x="141.84" y="333.20" width="18.29" height="8.35" fill="#dfff00"/><rect x="160.08" y="333.20" width="18.29" height="8.35" fill="#e8ff00"/><rect x="178.32" y="333.20" width="18.29" height="8.35" fill="#f6ff00"/><rect x="196.56" y="333.20" width="18.29" height="8.35" fill="#fff200"/><rect x="214.80" y="333.20" width="18.29" height="8.35" fill="#ffe600"/><rect x="233.04" y="333.20" width="18.29" height="8.35" fill="#ffd900"/><rect x="251.28" y="333.20" width="18.29" height="8.35" fill="#ffd600"/><rect x="269.52" y="333.20" width="18.29" height="8.35" fill="#ffd600"/><rect x="287.76" y="333.20" width="18.29" height="8.35" fill="#ffd600"/><rect x="306.00" y="333.20" width="18.29" height="8.35" fill="#ffdf00"/><rect x="324.24" y="333.20" width="18.29" height="8.35" fill="#ffe900"/><rect x="32.40" y="341.50" width="18.29" height="8.35" fill="#6eff00"/><rect x="50.64" y="341.50" width="18.29" height="8.35" fill="#92ff00"/><rect x="68.88" y="341.50" width="18.29" height="8.35" fill="#a5ff00"/><rect x="87.12" y="341.50" width="18.29" height="8.35" fill="#d2ff00"/><rect x="105.36" y="341.50" width="18.29" height="8.35" fill="#dbff00"/><rect x="123.60" y="341.50" width="18.29" height="8.35" fill="#e8ff00"/><rect x="141.84" y="341.50" width="18.29" height="8.35" fill="#e8ff00"/><rect x="160.08" y="341.50" width="18.29" height="8.35" fill="#f1ff00"/><rect x="178.32" y="341.50" width="18.29" height="8.35" fill="#ffff00"/><rect x="196.56" y="341.50" width="18.29" height="8.35" fill="#ffe900"/><rect x="214.80" y="341.50" width="18.29" height="8.35" fill="#ffd600"/><rect x="233.04" y="341.50" width="18.29" height="8.35" fill="#ffcf00"/><rect x="251.28" y="341.50" width="18.29" height="8.35" fill="#ffcc00"/><rect x="269.52" y="341.50" width="18.29" height="8.35" fill="#ffc600"/><rect x="287.76" y="341.50" width="18.29" height="8.35" fill="#ffc900"/><rect x="306.00" y="341.50" width="18.29" height="8.35" fill="#ffd600"/><rect x="324.24" y="341.50" width="18.29" height="8.35" fill="#ffdf00"/><rect x="32.40" y="349.80" width="18.29" height="8.35" fill="#77ff00"/><rect x="50.64" y="349.80" width="18.29" height="8.35" fill="#97ff00"/><rect x="68.88" y="349.80" width="18.29" height="8.35" fill="#aeff00"/><rect x="87.12" y="349.80" width="18.29" height="8.35" fill="#dfff00"/><rect x="105.36" y="349.80" width="18.29" height="8.35" fill="#e8ff00"/><rect x="123.60" y="349.80" width="18.29" height="8.35" fill="#edff00"/><rect x="141.84" y="349.80" width="18.29" height="8.35" fill="#f1ff00"/><rect x="160.08" y="349.80" width="18.29" height="8.35" fill="#f6ff00"/><rect x="178.32" y="349.80" width="18.29" height="8.35" fill="#fff900"/><rect x="196.56" y="349.80" width="18.29" height="8.35" fill="#ffe200"/><rect x="214.80" y="349.80" width="18.29" height="8.35" fill="#ffd200"/><rect x="233.04" y="349.80" width="18.29" height="8.35" fill="#ffc900"/><rect x="251.28" y="349.80" width="18.29" height="8.35" fill="#ffc600"/><rect x="269.52" y="349.80" width="18.29" height="8.35" fill="#ffc200"/><rect x="287.76" y="349.80" width="18.29" height="8.35" fill="#ffc600"/><rect x="306.00" y="349.80" width="18.29" height="8.35" fill="#ffcf00"/><rect x="324.24" y="349.80" width="18.29" height="8.35" fill="#ffd600"/><rect x="32.40" y="358.10" width="18.29" height="8.35" fill="#7cff00"/><rect x="50.64" y="358.10" width="18.29" height="8.35" fill="#9cff00"/><rect x="68.88" y="358.10" width="18.29" height="8.35" fill="#b2ff00"/><rect x="87.12" y="358.10" width="18.29" height="8.35" fill="#e4ff00"/><rect x="105.36" y="358.10" width="18.29" height="8.35" fill="#edff00"/><rect x="123.60" y="358.10" width="18.29" height="8.35" fill="#f6ff00"/><rect x="141.84" y="358.10" width="18.29" height="8.35" fill="#faff00"/><rect x="160.08" y="358.10" width="18.29" height="8.35" fill="#ffff00"/><rect x="178.32" y="358.10" width="18.29" height="8.35" fill="#fff500"/><rect x="196.56" y="358.10" width="18.29" height="8.35" fill="#ffdf00"/><rect x="214.80" y="358.10" width="18.29" height="8.35" fill="#ffcf00"/><rect x="233.04" y="358.10" width="18.29" height="8.35" fill="#ffc600"/><rect x="251.28" y="358.10" width="18.29" height="8.35" fill="#ffc200"/><rect x="269.52" y="358.10" width="18.29" height="8.35" fill="#ffbf00"/><rect x="287.76" y="358.10" width="18.29" height="8.35" fill="#ffbf00"/><rect x="306.00" y="358.10" width="18.29" height="8.35" fill="#ffcc00"/><rect x="324.24" y="358.10" width="18.29" height="8.35" fill="#ffd200"/><rect x="32.40" y="366.40" width="18.29" height="8.35" fill="#85ff00"/><rect x="50.64" y="366.40" width="18.29" height="8.35" fill="#a0ff00"/><rect x="68.88" y="366.40" width="18.29" height="8.35" fill="#b7ff00"/><rect x="87.12" y="366.40" width="18.29" height="8.35" fill="#e4ff00"/><rect x="105.36" y="366.40" width="18.29" height="8.35" fill="#edff00"/><rect x="123.60" y="366.40" width="18.29" height="8.35" fill="#f6ff00"/><rect x="141.84" y="366.40" width="18.29" height="8.35" fill="#faff00"/><rect x="160.08" y="366.40" width="18.29" height="8.35" fill="#fffc00"/><rect x="178.32" y="366.40" width="18.29" height="8.35" fill="#ffef00"/><rect x="196.56" y="366.40" width="18.29" height="8.35" fill="#ffd900"/><rect x="214.80" y="366.40" width="18.29" height="8.35" fill="#ffcc00"/><rect x="233.04" y="366.40" width="18.29" height="8.35" fill="#ffc200"/><rect x="251.28" y="366.40" width="18.29" height="8.35" fill="#ffbf00"/><rect x="269.52" y="366.40" width="18.29" height="8.35" fill="#ffbc00"/><rect x="287.76" y="366.40" width="18.29" height="8.35" fill="#ffbc00"/><rect x="306.00" y="366.40" width="18.29" height="8.35" fill="#ffc900"/><rect x="324.24" y="366.40" width="18.29" height="8.35" fill="#ffcf00"/><rect x="32.40" y="374.70" width="18.29" height="8.35" fill="#8eff00"/><rect x="50.64" y="374.70" width="18.29" height="8.35" fill="#a9ff00"/><rect x="68.88" y="374.70" width="18.29" height="8.35" fill="#c0ff00"/><rect x="87.12" y="374.70" width="18.29" height="8.35" fill="#edff00"/><rect x="105.36" y="374.70" width="18.29" height="8.35" fill="#f1ff00"/><rect x="123.60" y="374.70" width="18.29" height="8.35" fill="#faff00"/><rect x="141.84" y="374.70" width="18.29" height="8.35" fill="#ffff00"/><rect x="160.08" y="374.70" width="18.29" height="8.35" fill="#fff500"/><rect x="178.32" y="374.70" width="18.29" height="8.35" fill="#ffe900"/><rect x="196.56" y="374.70" width="18.29" height="8.35" fill="#ffd600"/><rect x="214.80" y="374.70" width="18.29" height="8.35" fill="#ffc900"/><rect x="233.04" y="374.70" width="18.29" height="8.35" fill="#ffbf00"/><rect x="251.28" y="374.70" width="18.29" height="8.35" fill="#ffbc00"/><rect x="269.52" y="374.70" width="18.29" height="8.35" fill="#ffb900"/><rect x="287.76" y="374.70" width="18.29" height="8.35" fill="#ffb900"/><rect x="306.00" y="374.70" width="18.29" height="8.35" fill="#ffc600"/><rect x="324.24" y="374.70" width="18.29" height="8.35" fill="#ffcc00"/><rect x="32.40" y="383.00" width="18.29" height="8.35" fill="#97ff00"/><rect x="50.64" y="383.00" width="18.29" height="8.35" fill="#aeff00"/><rect x="68.88" y="383.00" width="18.29" height="8.35" fill="#c4ff00"/><rect x="87.12" y="383.00" width="18.29" height="8.35" fill="#edff00"/><rect x="105.36" y="383.00" width="18.29" height="8.35" fill="#f6ff00"/><rect x="123.60" y="383.00" width="18.29" height="8.35" fill="#faff00"/><rect x="141.84" y="383.00" width="18.29" height="8.35" fill="#fffc00"/><rect x="160.08" y="383.00" width="18.29" height="8.35" fill="#fff200"/><rect x="178.32" y="383.00" width="18.29" height="8.35" fill="#ffe600"/><rect x="196.56" y="383.00" width="18.29" height="8.35" fill="#ffcf00"/><rect x="214.80" y="383.00" width="18.29" height="8.35" fill="#ffc600"/><rect x="233.04" y="383.00" width="18.29" height="8.35" fill="#ffbf00"/><rect x="251.28" y="383.00" width="18.29" height="8.35" fill="#ffb900"/><rect x="269.52" y="383.00" width="18.29" height="8.35" fill="#ffb600"/><rect x="287.76" y="383.00" width="18.29" height="8.35" fill="#ffb600"/><rect x="306.00" y="383.00" width="18.29" height="8.35" fill="#ffc200"/><rect x="324.24" y="383.00" width="18.29" height="8.35" fill="#ffc900"/><rect x="32.40" y="391.30" width="18.29" height="8.35" fill="#a0ff00"/><rect x="50.64" y="391.30" width="18.29" height="8.35" fill="#b2ff00"/><rect x="68.88" y="391.30" width="18.29" height="8.35" fill="#c9ff00"/><rect x="87.12" y="391.30" width="18.29" height="8.35" fill="#edff00"/><rect x="105.36" y="391.30" width="18.29" height="8.35" fill="#f6ff00"/><rect x="123.60" y="391.30" width="18.29" height="8.35" fill="#ffff00"/><rect x="141.84" y="391.30" width="18.29" height="8.35" fill="#fff900"/><rect x="160.08" y="391.30" width="18.29" height="8.35" fill="#ffef00"/><rect x="178.32" y="391.30" width="18.29" height="8.35" fill="#ffdf00"/><rect x="196.56" y="391.30" width="18.29" height="8.35" fill="#ffcc00"/><rect x="214.80" y="391.30" width="18.29" height="8.35" fill="#ffc200"/><rect x="233.04" y="391.30" width="18.29" height="8.35" fill="#ffbc00"/><rect x="251.28" y="391.30" width="18.29" height="8.35" fill="#ffb900"/><rect x="269.52" y="391.30" width="18.29" height="8.35" fill="#ffb300"/><rect x="287.76" y="391.30" width="18.29" height="8.35" fill="#ffb300"/><rect x="306.00" y="391.30" width="18.29" height="8.35" fill="#ffbf00"/><rect x="324.24" y="391.30" width="18.29" height="8.35" fill="#ffc600"/><rect x="32.40" y="399.60" width="18.29" height="8.35" fill="#a9ff00"/><rect x="50.64" y="399.60" width="18.29" height="8.35" fill="#bbff00"/><rect x="68.88" y="399.60" width="18.29" height="8.35" fill="#cdff00"/><rect x="87.12" y="399.60" width="18.29" height="8.35" fill="#f1ff00"/><rect x="105.36" y="399.60" width="18.29" height="8.35" fill="#f6ff00"/><rect x="123.60" y="399.60" width="18.29" height="8.35" fill="#ffff00"/><rect x="141.84" y="399.60" width="18.29" height="8.35" fill="#fff500"/><rect x="160.08" y="399.60" width="18.29" height="8.35" fill="#ffe900"/><rect x="178.32" y="399.60" width="18.29" height="8.35" fill="#ffdc00"/><rect x="196.56" y="399.60" width="18.29" height="8.35" fill="#ffc600"/><rect x="214.80" y="399.60" width="18.29" height="8.35" fill="#ffbf00"/><rect x="233.04" y="399.60" width="18.29" height="8.35" fill="#ffbc00"/><rect x="251.28" y="399.60" width="18.29" height="8.35" fill="#ffb600"/><rect x="269.52" y="399.60" width="18.29" height="8.35" fill="#ffaf00"/><rect x="287.76" y="399.60" width="18.29" height="8.35" fill="#ffaf00"/><rect x="306.00" y="399.60" width="18.29" height="8.35" fill="#ffbc00"/><rect x="324.24" y="399.60" width="18.29" height="8.35" fill="#ffc200"/><rect x="32.40" y="407.90" width="18.29" height="8.35" fill="#b2ff00"/><rect x="50.64" y="407.90" width="18.29" height="8.35" fill="#c0ff00"/><rect x="68.88" y="407.90" width="18.29" height="8.35" fill="#d2ff00"/><rect x="87.12" y="407.90" width="18.29" height="8.35" fill="#f1ff00"/><rect x="105.36" y="407.90" width="18.29" height="8.35" fill="#faff00"/><rect x="123.60" y="407.90" width="18.29" height="8.35" fill="#fffc00"/><rect x="141.84" y="407.90" width="18.29" height="8.35" fill="#fff200"/><rect x="160.08" y="407.90" width="18.29" height="8.35" fill="#ffe600"/><rect x="178.32" y="407.90" width="18.29" height="8.35" fill="#ffd600"/><rect x="196.56" y="407.90" width="18.29" height="8.35" fill="#ffc200"/><rect x="214.80" y="407.90" width="18.29" height="8.35" fill="#ffbc00"/><rect x="233.04" y="407.90" width="18.29" height="8.35" fill="#ffb900"/><rect x="251.28" y="407.90" width="18.29" height="8.35" fill="#ffb300"/><rect x="269.52" y="407.90" width="18.29" height="8.35" fill="#ffac00"/><rect x="287.76" y="407.90" width="18.29" height="8.35" fill="#ffac00"/><rect x="306.00" y="407.90" width="18.29" height="8.35" fill="#ffb900"/><rect x="324.24" y="407.90" width="18.29" height="8.35" fill="#ffbf00"/><rect x="32.40" y="416.20" width="18.29" height="8.35" fill="#bbff00"/><rect x="50.64" y="416.20" width="18.29" height="8.35" fill="#c4ff00"/><rect x="68.88" y="416.20" width="18.29" height="8.35" fill="#d6ff00"/><rect x="87.12" y="416.20" width="18.29" height="8.35" fill="#f1ff00"/><rect x="105.36" y="416.20" width="18.29" height="8.35" fill="#faff00"/><rect x="123.60" y="416.20" width="18.29" height="8.35" fill="#fffc00"/><rect x="141.84" y="416.20" width="18.29" height="8.35" fill="#ffef00"/><rect x="160.08" y="416.20" width="18.29" height="8.35" fill="#ffdf00"/><rect x="178.32" y="416.20" width="18.29" height="8.35" fill="#ffd200"/><rect x="196.56" y="416.20" width="18.29" height="8.35" fill="#ffbf00"/><rect x="214.80" y="416.20" width="18.29" height="8.35" fill="#ffb900"/><rect x="233.04" y="416.20" width="18.29" height="8.35" fill="#ffb600"/><rect x="251.28" y="416.20" width="18.29" height="8.35" fill="#ffac00"/><rect x="269.52" y="416.20" width="18.29" height="8.35" fill="#ffa900"/><rect x="287.76" y="416.20" width="18.29" height="8.35" fill="#ffa900"/><rect x="306.00" y="416.20" width="18.29" height="8.35" fill="#ffb300"/><rect x="324.24" y="416.20" width="18.29" height="8.35" fill="#ffbc00"/><rect x="32.40" y="424.50" width="18.29" height="8.35" fill="#cdff00"/><rect x="50.64" y="424.50" width="18.29" height="8.35" fill="#d2ff00"/><rect x="68.88" y="424.50" width="18.29" height="8.35" fill="#dbff00"/><rect x="87.12" y="424.50" width="18.29" height="8.35" fill="#f1ff00"/><rect x="105.36" y="424.50" width="18.29" height="8.35" fill="#ffff00"/><rect x="123.60" y="424.50" width="18.29" height="8.35" fill="#fff900"/><rect x="141.84" y="424.50" width="18.29" height="8.35" fill="#ffe900"/><rect x="160.08" y="424.50" width="18.29" height="8.35" fill="#ffd900"/><rect x="178.32" y="424.50" width="18.29" height="8.35" fill="#ffc900"/><rect x="196.56" y="424.50" width="18.29" height="8.35" fill="#ffb600"/><rect x="214.80" y="424.50" width="18.29" height="8.35" fill="#ffb300"/><rect x="233.04" y="424.50" width="18.29" height="8.35" fill="#ffaf00"/><rect x="251.28" y="424.50" width="18.29" height="8.35" fill="#ffac00"/><rect x="269.52" y="424.50" width="18.29" height="8.35" fill="#ffa900"/><rect x="287.76" y="424.50" width="18.29" height="8.35" fill="#ffac00"/><rect x="306.00" y="424.50" width="18.29" height="8.35" fill="#ffb300"/><rect x="324.24" y="424.50" width="18.29" height="8.35" fill="#ffb300"/><line x1="17.4" y1="291.70" x2="342.48" y2="291.70" stroke="#b4b4a0" stroke-width="0.55" stroke-opacity="0.8"/><line x1="17.4" y1="300.00" x2="342.48" y2="300.00" stroke="#b4b4a0" stroke-width="0.55" stroke-opacity="0.8"/><line x1="17.4" y1="308.30" x2="342.48" y2="308.30" stroke="#b4b4a0" stroke-width="0.55" stroke-opacity="0.8"/><line x1="17.4" y1="316.60" x2="342.48" y2="316.60" stroke="#b4b4a0" stroke-width="0.55" stroke-opacity="0.8"/><line x1="17.4" y1="324.90" x2="342.48" y2="324.90" stroke="#b4b4a0" stroke-width="0.55" stroke-opacity="0.8"/><line x1="17.4" y1="333.20" x2="342.48" y2="333.20" stroke="#b4b4a0" stroke-width="0.55" stroke-opacity="0.8"/><line x1="17.4" y1="341.50" x2="342.48" y2="341.50" stroke="#b4b4a0" stroke-width="0.55" stroke-opacity="0.8"/><line x1="17.4" y1="349.80" x2="342.48" y2="349.80" stroke="#b4b4a0" stroke-width="0.55" stroke-opacity="0.8"/><line x1="17.4" y1="358.10" x2="342.48" y2="358.10" stroke="#b4b4a0" stroke-width="0.55" stroke-opacity="0.8"/><line x1="17.4" y1="366.40" x2="342.48" y2="366.40" stroke="#b4b4a0" stroke-width="0.55" stroke-opacity="0.8"/><line x1="17.4" y1="374.70" x2="342.48" y2="374.70" stroke="#b4b4a0" stroke-width="0.55" stroke-opacity="0.8"/><line x1="17.4" y1="383.00" x2="342.48" y2="383.00" stroke="#b4b4a0" stroke-width="0.55" stroke-opacity="0.8"/><line x1="17.4" y1="391.30" x2="342.48" y2="391.30" stroke="#b4b4a0" stroke-width="0.55" stroke-opacity="0.8"/><line x1="17.4" y1="399.60" x2="342.48" y2="399.60" stroke="#b4b4a0" stroke-width="0.55" stroke-opacity="0.8"/><line x1="17.4" y1="407.90" x2="342.48" y2="407.90" stroke="#b4b4a0" stroke-width="0.55" stroke-opacity="0.8"/><line x1="17.4" y1="416.20" x2="342.48" y2="416.20" stroke="#b4b4a0" stroke-width="0.55" stroke-opacity="0.8"/><line x1="17.4" y1="424.50" x2="342.48" y2="424.50" stroke="#b4b4a0" stroke-width="0.55" stroke-opacity="0.8"/><line x1="17.4" y1="432.80" x2="342.48" y2="432.80" stroke="#b4b4a0" stroke-width="0.55" stroke-opacity="0.8"/><line x1="32.40" y1="283.4" x2="32.40" y2="432.80" stroke="#b4b4a0" stroke-width="0.55" stroke-opacity="0.8"/><line x1="50.64" y1="283.4" x2="50.64" y2="432.80" stroke="#b4b4a0" stroke-width="0.55" stroke-opacity="0.8"/><line x1="68.88" y1="283.4" x2="68.88" y2="432.80" stroke="#b4b4a0" stroke-width="0.55" stroke-opacity="0.8"/><line x1="87.12" y1="283.4" x2="87.12" y2="432.80" stroke="#b4b4a0" stroke-width="0.55" stroke-opacity="0.8"/><line x1="105.36" y1="283.4" x2="105.36" y2="432.80" stroke="#b4b4a0" stroke-width="0.55" stroke-opacity="0.8"/><line x1="123.60" y1="283.4" x2="123.60" y2="432.80" stroke="#b4b4a0" stroke-width="0.55" stroke-opacity="0.8"/><line x1="141.84" y1="283.4" x2="141.84" y2="432.80" stroke="#b4b4a0" stroke-width="0.55" stroke-opacity="0.8"/><line x1="160.08" y1="283.4" x2="160.08" y2="432.80" stroke="#b4b4a0" stroke-width="0.55" stroke-opacity="0.8"/><line x1="178.32" y1="283.4" x2="178.32" y2="432.80" stroke="#b4b4a0" stroke-width="0.55" stroke-opacity="0.8"/><line x1="196.56" y1="283.4" x2="196.56" y2="432.80" stroke="#b4b4a0" stroke-width="0.55" stroke-opacity="0.8"/><line x1="214.80" y1="283.4" x2="214.80" y2="432.80" stroke="#b4b4a0" stroke-width="0.55" stroke-opacity="0.8"/><line x1="233.04" y1="283.4" x2="233.04" y2="432.80" stroke="#b4b4a0" stroke-width="0.55" stroke-opacity="0.8"/><line x1="251.28" y1="283.4" x2="251.28" y2="432.80" stroke="#b4b4a0" stroke-width="0.55" stroke-opacity="0.8"/><line x1="269.52" y1="283.4" x2="269.52" y2="432.80" stroke="#b4b4a0" stroke-width="0.55" stroke-opacity="0.8"/><line x1="287.76" y1="283.4" x2="287.76" y2="432.80" stroke="#b4b4a0" stroke-width="0.55" stroke-opacity="0.8"/><line x1="306.00" y1="283.4" x2="306.00" y2="432.80" stroke="#b4b4a0" stroke-width="0.55" stroke-opacity="0.8"/><line x1="324.24" y1="283.4" x2="324.24" y2="432.80" stroke="#b4b4a0" stroke-width="0.55" stroke-opacity="0.8"/><line x1="342.48" y1="283.4" x2="342.48" y2="432.80" stroke="#b4b4a0" stroke-width="0.55" stroke-opacity="0.8"/><rect x="17.4" y="283.4" width="325.08" height="149.40" fill="none" stroke="#c8c8c8" stroke-width="0.5"/><rect x="50.94" y="292.00" width="17.64" height="7.70" fill="none" stroke="#222" stroke-width="0.6"/><g font-size="6.9" fill="#1e1e1e" text-anchor="end"><text transform="translate(49.44 290.10) scale(0.84 1)" fill="#333">416</text><text transform="translate(67.68 290.10) scale(0.84 1)" fill="#333">608</text><text transform="translate(85.92 290.10) scale(0.84 1)" fill="#333">800</text><text transform="translate(104.16 290.10) scale(0.84 1)" fill="#333">1,152</text><text transform="translate(122.40 290.10) scale(0.84 1)" fill="#333">1,328</text><text transform="translate(140.64 290.10) scale(0.84 1)" fill="#333">1,504</text><text transform="translate(158.88 290.10) scale(0.84 1)" fill="#333">1,867</text><text transform="translate(177.12 290.10) scale(0.84 1)" fill="#333">2,229</text><text transform="translate(195.36 290.10) scale(0.84 1)" fill="#333">2,592</text><text transform="translate(213.60 290.10) scale(0.84 1)" fill="#333">3,294</text><text transform="translate(231.84 290.10) scale(0.84 1)" fill="#333">3,867</text><text transform="translate(250.08 290.10) scale(0.84 1)" fill="#333">4,157</text><text transform="translate(268.32 290.10) scale(0.84 1)" fill="#333">4,448</text><text transform="translate(286.56 290.10) scale(0.84 1)" fill="#333">4,843</text><text transform="translate(304.80 290.10) scale(0.84 1)" fill="#333">5,237</text><text transform="translate(323.04 290.10) scale(0.84 1)" fill="#333">5,632</text><text transform="translate(341.28 290.10) scale(0.84 1)" fill="#333">5,984</text><text transform="translate(31.50 298.35) scale(0.84 1)" fill="#333">0.15</text><text transform="translate(49.24 298.35) scale(0.84 1)">31</text><text transform="translate(67.48 298.35) scale(0.84 1)">35</text><text transform="translate(85.72 298.35) scale(0.84 1)">39</text><text transform="translate(103.96 298.35) scale(0.84 1)">47</text><text transform="translate(122.20 298.35) scale(0.84 1)">52</text><text transform="translate(140.44 298.35) scale(0.84 1)">57</text><text transform="translate(158.68 298.35) scale(0.84 1)">59</text><text transform="translate(176.92 298.35) scale(0.84 1)">61</text><text transform="translate(195.16 298.35) scale(0.84 1)">66</text><text transform="translate(213.40 298.35) scale(0.84 1)">69</text><text transform="translate(231.64 298.35) scale(0.84 1)">71</text><text transform="translate(249.88 298.35) scale(0.84 1)">73</text><text transform="translate(268.12 298.35) scale(0.84 1)">74</text><text transform="translate(286.36 298.35) scale(0.84 1)">75</text><text transform="translate(304.60 298.35) scale(0.84 1)">77</text><text transform="translate(322.84 298.35) scale(0.84 1)">79</text><text transform="translate(341.08 298.35) scale(0.84 1)">80</text><text transform="translate(31.50 306.65) scale(0.84 1)" fill="#333">0.20</text><text transform="translate(49.24 306.65) scale(0.84 1)">36</text><text transform="translate(67.48 306.65) scale(0.84 1)">40</text><text transform="translate(85.72 306.65) scale(0.84 1)">45</text><text transform="translate(103.96 306.65) scale(0.84 1)">54</text><text transform="translate(122.20 306.65) scale(0.84 1)">58</text><text transform="translate(140.44 306.65) scale(0.84 1)">61</text><text transform="translate(158.68 306.65) scale(0.84 1)">63</text><text transform="translate(176.92 306.65) scale(0.84 1)">66</text><text transform="translate(195.16 306.65) scale(0.84 1)">72</text><text transform="translate(213.40 306.65) scale(0.84 1)">74</text><text transform="translate(231.64 306.65) scale(0.84 1)">76</text><text transform="translate(249.88 306.65) scale(0.84 1)">78</text><text transform="translate(268.12 306.65) scale(0.84 1)">79</text><text transform="translate(286.36 306.65) scale(0.84 1)">80</text><text transform="translate(304.60 306.65) scale(0.84 1)">82</text><text transform="translate(322.84 306.65) scale(0.84 1)">82</text><text transform="translate(341.08 306.65) scale(0.84 1)">83</text><text transform="translate(31.50 314.95) scale(0.84 1)" fill="#333">0.25</text><text transform="translate(49.24 314.95) scale(0.84 1)">41</text><text transform="translate(67.48 314.95) scale(0.84 1)">46</text><text transform="translate(85.72 314.95) scale(0.84 1)">51</text><text transform="translate(103.96 314.95) scale(0.84 1)">60</text><text transform="translate(122.20 314.95) scale(0.84 1)">64</text><text transform="translate(140.44 314.95) scale(0.84 1)">67</text><text transform="translate(158.68 314.95) scale(0.84 1)">69</text><text transform="translate(176.92 314.95) scale(0.84 1)">71</text><text transform="translate(195.16 314.95) scale(0.84 1)">78</text><text transform="translate(213.40 314.95) scale(0.84 1)">80</text><text transform="translate(231.64 314.95) scale(0.84 1)">81</text><text transform="translate(249.88 314.95) scale(0.84 1)">83</text><text transform="translate(268.12 314.95) scale(0.84 1)">84</text><text transform="translate(286.36 314.95) scale(0.84 1)">85</text><text transform="translate(304.60 314.95) scale(0.84 1)">86</text><text transform="translate(322.84 314.95) scale(0.84 1)">86</text><text transform="translate(341.08 314.95) scale(0.84 1)">86</text><text transform="translate(31.50 323.25) scale(0.84 1)" fill="#333">0.30</text><text transform="translate(49.24 323.25) scale(0.84 1)">46</text><text transform="translate(67.48 323.25) scale(0.84 1)">51</text><text transform="translate(85.72 323.25) scale(0.84 1)">56</text><text transform="translate(103.96 323.25) scale(0.84 1)">66</text><text transform="translate(122.20 323.25) scale(0.84 1)">70</text><text transform="translate(140.44 323.25) scale(0.84 1)">72</text><text transform="translate(158.68 323.25) scale(0.84 1)">74</text><text transform="translate(176.92 323.25) scale(0.84 1)">75</text><text transform="translate(195.16 323.25) scale(0.84 1)">82</text><text transform="translate(213.40 323.25) scale(0.84 1)">85</text><text transform="translate(231.64 323.25) scale(0.84 1)">86</text><text transform="translate(249.88 323.25) scale(0.84 1)">88</text><text transform="translate(268.12 323.25) scale(0.84 1)">90</text><text transform="translate(286.36 323.25) scale(0.84 1)">90</text><text transform="translate(304.60 323.25) scale(0.84 1)">91</text><text transform="translate(322.84 323.25) scale(0.84 1)">89</text><text transform="translate(341.08 323.25) scale(0.84 1)">88</text><text transform="translate(31.50 331.55) scale(0.84 1)" fill="#333">0.35</text><text transform="translate(49.24 331.55) scale(0.84 1)">51</text><text transform="translate(67.48 331.55) scale(0.84 1)">56</text><text transform="translate(85.72 331.55) scale(0.84 1)">62</text><text transform="translate(103.96 331.55) scale(0.84 1)">72</text><text transform="translate(122.20 331.55) scale(0.84 1)">75</text><text transform="translate(140.44 331.55) scale(0.84 1)">76</text><text transform="translate(158.68 331.55) scale(0.84 1)">78</text><text transform="translate(176.92 331.55) scale(0.84 1)">79</text><text transform="translate(195.16 331.55) scale(0.84 1)">85</text><text transform="translate(213.40 331.55) scale(0.84 1)">88</text><text transform="translate(231.64 331.55) scale(0.84 1)">90</text><text transform="translate(249.88 331.55) scale(0.84 1)">94</text><text transform="translate(268.12 331.55) scale(0.84 1)">95</text><text transform="translate(286.36 331.55) scale(0.84 1)">95</text><text transform="translate(304.60 331.55) scale(0.84 1)">95</text><text transform="translate(322.84 331.55) scale(0.84 1)">93</text><text transform="translate(341.08 331.55) scale(0.84 1)">91</text><text transform="translate(31.50 339.85) scale(0.84 1)" fill="#333">0.40</text><text transform="translate(49.24 339.85) scale(0.84 1)">53</text><text transform="translate(67.48 339.85) scale(0.84 1)">60</text><text transform="translate(85.72 339.85) scale(0.84 1)">64</text><text transform="translate(103.96 339.85) scale(0.84 1)">74</text><text transform="translate(122.20 339.85) scale(0.84 1)">77</text><text transform="translate(140.44 339.85) scale(0.84 1)">79</text><text transform="translate(158.68 339.85) scale(0.84 1)">80</text><text transform="translate(176.92 339.85) scale(0.84 1)">82</text><text transform="translate(195.16 339.85) scale(0.84 1)">85</text><text transform="translate(213.40 339.85) scale(0.84 1)">91</text><text transform="translate(231.64 339.85) scale(0.84 1)">95</text><text transform="translate(249.88 339.85) scale(0.84 1)">99</text><text transform="translate(268.12 339.85) scale(0.84 1)">100</text><text transform="translate(286.36 339.85) scale(0.84 1)">100</text><text transform="translate(304.60 339.85) scale(0.84 1)">100</text><text transform="translate(322.84 339.85) scale(0.84 1)">97</text><text transform="translate(341.08 339.85) scale(0.84 1)">94</text><text transform="translate(31.50 348.15) scale(0.84 1)" fill="#333">0.45</text><text transform="translate(49.24 348.15) scale(0.84 1)">55</text><text transform="translate(67.48 348.15) scale(0.84 1)">63</text><text transform="translate(85.72 348.15) scale(0.84 1)">67</text><text transform="translate(103.96 348.15) scale(0.84 1)">77</text><text transform="translate(122.20 348.15) scale(0.84 1)">79</text><text transform="translate(140.44 348.15) scale(0.84 1)">82</text><text transform="translate(158.68 348.15) scale(0.84 1)">82</text><text transform="translate(176.92 348.15) scale(0.84 1)">84</text><text transform="translate(195.16 348.15) scale(0.84 1)">87</text><text transform="translate(213.40 348.15) scale(0.84 1)">94</text><text transform="translate(231.64 348.15) scale(0.84 1)">100</text><text transform="translate(249.88 348.15) scale(0.84 1)">102</text><text transform="translate(268.12 348.15) scale(0.84 1)">103</text><text transform="translate(286.36 348.15) scale(0.84 1)">105</text><text transform="translate(304.60 348.15) scale(0.84 1)">104</text><text transform="translate(322.84 348.15) scale(0.84 1)">100</text><text transform="translate(341.08 348.15) scale(0.84 1)">97</text><text transform="translate(31.50 356.45) scale(0.84 1)" fill="#333">0.50</text><text transform="translate(49.24 356.45) scale(0.84 1)">57</text><text transform="translate(67.48 356.45) scale(0.84 1)">64</text><text transform="translate(85.72 356.45) scale(0.84 1)">69</text><text transform="translate(103.96 356.45) scale(0.84 1)">80</text><text transform="translate(122.20 356.45) scale(0.84 1)">82</text><text transform="translate(140.44 356.45) scale(0.84 1)">83</text><text transform="translate(158.68 356.45) scale(0.84 1)">84</text><text transform="translate(176.92 356.45) scale(0.84 1)">85</text><text transform="translate(195.16 356.45) scale(0.84 1)">89</text><text transform="translate(213.40 356.45) scale(0.84 1)">96</text><text transform="translate(231.64 356.45) scale(0.84 1)">101</text><text transform="translate(249.88 356.45) scale(0.84 1)">104</text><text transform="translate(268.12 356.45) scale(0.84 1)">105</text><text transform="translate(286.36 356.45) scale(0.84 1)">106</text><text transform="translate(304.60 356.45) scale(0.84 1)">105</text><text transform="translate(322.84 356.45) scale(0.84 1)">102</text><text transform="translate(341.08 356.45) scale(0.84 1)">100</text><text transform="translate(31.50 364.75) scale(0.84 1)" fill="#333">0.55</text><text transform="translate(49.24 364.75) scale(0.84 1)">58</text><text transform="translate(67.48 364.75) scale(0.84 1)">65</text><text transform="translate(85.72 364.75) scale(0.84 1)">70</text><text transform="translate(103.96 364.75) scale(0.84 1)">81</text><text transform="translate(122.20 364.75) scale(0.84 1)">83</text><text transform="translate(140.44 364.75) scale(0.84 1)">85</text><text transform="translate(158.68 364.75) scale(0.84 1)">86</text><text transform="translate(176.92 364.75) scale(0.84 1)">87</text><text transform="translate(195.16 364.75) scale(0.84 1)">90</text><text transform="translate(213.40 364.75) scale(0.84 1)">97</text><text transform="translate(231.64 364.75) scale(0.84 1)">102</text><text transform="translate(249.88 364.75) scale(0.84 1)">105</text><text transform="translate(268.12 364.75) scale(0.84 1)">106</text><text transform="translate(286.36 364.75) scale(0.84 1)">107</text><text transform="translate(304.60 364.75) scale(0.84 1)">107</text><text transform="translate(322.84 364.75) scale(0.84 1)">103</text><text transform="translate(341.08 364.75) scale(0.84 1)">101</text><text transform="translate(31.50 373.05) scale(0.84 1)" fill="#333">0.60</text><text transform="translate(49.24 373.05) scale(0.84 1)">60</text><text transform="translate(67.48 373.05) scale(0.84 1)">66</text><text transform="translate(85.72 373.05) scale(0.84 1)">71</text><text transform="translate(103.96 373.05) scale(0.84 1)">81</text><text transform="translate(122.20 373.05) scale(0.84 1)">83</text><text transform="translate(140.44 373.05) scale(0.84 1)">85</text><text transform="translate(158.68 373.05) scale(0.84 1)">86</text><text transform="translate(176.92 373.05) scale(0.84 1)">88</text><text transform="translate(195.16 373.05) scale(0.84 1)">92</text><text transform="translate(213.40 373.05) scale(0.84 1)">99</text><text transform="translate(231.64 373.05) scale(0.84 1)">103</text><text transform="translate(249.88 373.05) scale(0.84 1)">106</text><text transform="translate(268.12 373.05) scale(0.84 1)">107</text><text transform="translate(286.36 373.05) scale(0.84 1)">108</text><text transform="translate(304.60 373.05) scale(0.84 1)">108</text><text transform="translate(322.84 373.05) scale(0.84 1)">104</text><text transform="translate(341.08 373.05) scale(0.84 1)">102</text><text transform="translate(31.50 381.35) scale(0.84 1)" fill="#333">0.65</text><text transform="translate(49.24 381.35) scale(0.84 1)">62</text><text transform="translate(67.48 381.35) scale(0.84 1)">68</text><text transform="translate(85.72 381.35) scale(0.84 1)">73</text><text transform="translate(103.96 381.35) scale(0.84 1)">83</text><text transform="translate(122.20 381.35) scale(0.84 1)">84</text><text transform="translate(140.44 381.35) scale(0.84 1)">86</text><text transform="translate(158.68 381.35) scale(0.84 1)">87</text><text transform="translate(176.92 381.35) scale(0.84 1)">90</text><text transform="translate(195.16 381.35) scale(0.84 1)">94</text><text transform="translate(213.40 381.35) scale(0.84 1)">100</text><text transform="translate(231.64 381.35) scale(0.84 1)">104</text><text transform="translate(249.88 381.35) scale(0.84 1)">107</text><text transform="translate(268.12 381.35) scale(0.84 1)">108</text><text transform="translate(286.36 381.35) scale(0.84 1)">109</text><text transform="translate(304.60 381.35) scale(0.84 1)">109</text><text transform="translate(322.84 381.35) scale(0.84 1)">105</text><text transform="translate(341.08 381.35) scale(0.84 1)">103</text><text transform="translate(31.50 389.65) scale(0.84 1)" fill="#333">0.70</text><text transform="translate(49.24 389.65) scale(0.84 1)">64</text><text transform="translate(67.48 389.65) scale(0.84 1)">69</text><text transform="translate(85.72 389.65) scale(0.84 1)">74</text><text transform="translate(103.96 389.65) scale(0.84 1)">83</text><text transform="translate(122.20 389.65) scale(0.84 1)">85</text><text transform="translate(140.44 389.65) scale(0.84 1)">86</text><text transform="translate(158.68 389.65) scale(0.84 1)">88</text><text transform="translate(176.92 389.65) scale(0.84 1)">91</text><text transform="translate(195.16 389.65) scale(0.84 1)">95</text><text transform="translate(213.40 389.65) scale(0.84 1)">102</text><text transform="translate(231.64 389.65) scale(0.84 1)">105</text><text transform="translate(249.88 389.65) scale(0.84 1)">107</text><text transform="translate(268.12 389.65) scale(0.84 1)">109</text><text transform="translate(286.36 389.65) scale(0.84 1)">110</text><text transform="translate(304.60 389.65) scale(0.84 1)">110</text><text transform="translate(322.84 389.65) scale(0.84 1)">106</text><text transform="translate(341.08 389.65) scale(0.84 1)">104</text><text transform="translate(31.50 397.95) scale(0.84 1)" fill="#333">0.75</text><text transform="translate(49.24 397.95) scale(0.84 1)">66</text><text transform="translate(67.48 397.95) scale(0.84 1)">70</text><text transform="translate(85.72 397.95) scale(0.84 1)">75</text><text transform="translate(103.96 397.95) scale(0.84 1)">83</text><text transform="translate(122.20 397.95) scale(0.84 1)">85</text><text transform="translate(140.44 397.95) scale(0.84 1)">87</text><text transform="translate(158.68 397.95) scale(0.84 1)">89</text><text transform="translate(176.92 397.95) scale(0.84 1)">92</text><text transform="translate(195.16 397.95) scale(0.84 1)">97</text><text transform="translate(213.40 397.95) scale(0.84 1)">103</text><text transform="translate(231.64 397.95) scale(0.84 1)">106</text><text transform="translate(249.88 397.95) scale(0.84 1)">108</text><text transform="translate(268.12 397.95) scale(0.84 1)">109</text><text transform="translate(286.36 397.95) scale(0.84 1)">111</text><text transform="translate(304.60 397.95) scale(0.84 1)">111</text><text transform="translate(322.84 397.95) scale(0.84 1)">107</text><text transform="translate(341.08 397.95) scale(0.84 1)">105</text><text transform="translate(31.50 406.25) scale(0.84 1)" fill="#333">0.80</text><text transform="translate(49.24 406.25) scale(0.84 1)">68</text><text transform="translate(67.48 406.25) scale(0.84 1)">72</text><text transform="translate(85.72 406.25) scale(0.84 1)">76</text><text transform="translate(103.96 406.25) scale(0.84 1)">84</text><text transform="translate(122.20 406.25) scale(0.84 1)">85</text><text transform="translate(140.44 406.25) scale(0.84 1)">87</text><text transform="translate(158.68 406.25) scale(0.84 1)">90</text><text transform="translate(176.92 406.25) scale(0.84 1)">94</text><text transform="translate(195.16 406.25) scale(0.84 1)">98</text><text transform="translate(213.40 406.25) scale(0.84 1)">105</text><text transform="translate(231.64 406.25) scale(0.84 1)">107</text><text transform="translate(249.88 406.25) scale(0.84 1)">108</text><text transform="translate(268.12 406.25) scale(0.84 1)">110</text><text transform="translate(286.36 406.25) scale(0.84 1)">112</text><text transform="translate(304.60 406.25) scale(0.84 1)">112</text><text transform="translate(322.84 406.25) scale(0.84 1)">108</text><text transform="translate(341.08 406.25) scale(0.84 1)">106</text><text transform="translate(31.50 414.55) scale(0.84 1)" fill="#333">0.85</text><text transform="translate(49.24 414.55) scale(0.84 1)">70</text><text transform="translate(67.48 414.55) scale(0.84 1)">73</text><text transform="translate(85.72 414.55) scale(0.84 1)">77</text><text transform="translate(103.96 414.55) scale(0.84 1)">84</text><text transform="translate(122.20 414.55) scale(0.84 1)">86</text><text transform="translate(140.44 414.55) scale(0.84 1)">88</text><text transform="translate(158.68 414.55) scale(0.84 1)">91</text><text transform="translate(176.92 414.55) scale(0.84 1)">95</text><text transform="translate(195.16 414.55) scale(0.84 1)">100</text><text transform="translate(213.40 414.55) scale(0.84 1)">106</text><text transform="translate(231.64 414.55) scale(0.84 1)">108</text><text transform="translate(249.88 414.55) scale(0.84 1)">109</text><text transform="translate(268.12 414.55) scale(0.84 1)">111</text><text transform="translate(286.36 414.55) scale(0.84 1)">113</text><text transform="translate(304.60 414.55) scale(0.84 1)">113</text><text transform="translate(322.84 414.55) scale(0.84 1)">109</text><text transform="translate(341.08 414.55) scale(0.84 1)">107</text><text transform="translate(31.50 422.85) scale(0.84 1)" fill="#333">0.90</text><text transform="translate(49.24 422.85) scale(0.84 1)">72</text><text transform="translate(67.48 422.85) scale(0.84 1)">74</text><text transform="translate(85.72 422.85) scale(0.84 1)">78</text><text transform="translate(103.96 422.85) scale(0.84 1)">84</text><text transform="translate(122.20 422.85) scale(0.84 1)">86</text><text transform="translate(140.44 422.85) scale(0.84 1)">88</text><text transform="translate(158.68 422.85) scale(0.84 1)">92</text><text transform="translate(176.92 422.85) scale(0.84 1)">97</text><text transform="translate(195.16 422.85) scale(0.84 1)">101</text><text transform="translate(213.40 422.85) scale(0.84 1)">107</text><text transform="translate(231.64 422.85) scale(0.84 1)">109</text><text transform="translate(249.88 422.85) scale(0.84 1)">110</text><text transform="translate(268.12 422.85) scale(0.84 1)">113</text><text transform="translate(286.36 422.85) scale(0.84 1)">114</text><text transform="translate(304.60 422.85) scale(0.84 1)">114</text><text transform="translate(322.84 422.85) scale(0.84 1)">111</text><text transform="translate(341.08 422.85) scale(0.84 1)">108</text><text transform="translate(31.50 431.15) scale(0.84 1)" fill="#333">1.00</text><text transform="translate(49.24 431.15) scale(0.84 1)">76</text><text transform="translate(67.48 431.15) scale(0.84 1)">77</text><text transform="translate(85.72 431.15) scale(0.84 1)">79</text><text transform="translate(103.96 431.15) scale(0.84 1)">84</text><text transform="translate(122.20 431.15) scale(0.84 1)">87</text><text transform="translate(140.44 431.15) scale(0.84 1)">89</text><text transform="translate(158.68 431.15) scale(0.84 1)">94</text><text transform="translate(176.92 431.15) scale(0.84 1)">99</text><text transform="translate(195.16 431.15) scale(0.84 1)">104</text><text transform="translate(213.40 431.15) scale(0.84 1)">110</text><text transform="translate(231.64 431.15) scale(0.84 1)">111</text><text transform="translate(249.88 431.15) scale(0.84 1)">112</text><text transform="translate(268.12 431.15) scale(0.84 1)">113</text><text transform="translate(286.36 431.15) scale(0.84 1)">114</text><text transform="translate(304.60 431.15) scale(0.84 1)">113</text><text transform="translate(322.84 431.15) scale(0.84 1)">111</text><text transform="translate(341.08 431.15) scale(0.84 1)">111</text></g><g font-size="8.9" fill="#1e1e1e"><text x="158.4" y="276.6" font-size="8.6" textLength="45" lengthAdjust="spacing">RPM (rpm)</text><line x1="158.2" y1="277.8" x2="203.5" y2="277.8" stroke="#333" stroke-width="0.6"/><text transform="translate(14.7 449.8) rotate(-90) scale(0.97 1)">Ratio</text><line x1="15.5" y1="449.8" x2="15.5" y2="427.4" stroke="#333" stroke-width="0.6"/></g></svg>
<svg style="position:absolute;left:349px;top:268px" width="449" height="342" viewBox="349 268 449 342" font-family="Liberation Sans, sans-serif" fill="#333"><polygon points="424.74,366.51 442.24,529.24 515.24,466.24 511.26,345.00" fill="#e1e1e1" stroke="#e1e1e1" stroke-width="0.3"/>
<polygon points="511.26,345.00 515.24,466.24 635.59,486.51 646.59,351.49" fill="#e1e1e1" stroke="#e1e1e1" stroke-width="0.3"/>
<polygon points="442.24,529.24 601.82,568.99 635.59,486.51 515.24,466.24" fill="#e1e1e1" stroke="#e1e1e1" stroke-width="0.3"/>
<line x1="442.24" y1="529.24" x2="515.24" y2="466.24" stroke="#444" stroke-width="0.5"/>
<line x1="515.24" y1="466.24" x2="635.59" y2="486.51" stroke="#444" stroke-width="0.5"/>
<line x1="511.26" y1="345.00" x2="515.24" y2="466.24" stroke="#444" stroke-width="0.5"/>
<line x1="424.74" y1="366.51" x2="442.24" y2="529.24" stroke="#3a3a3a" stroke-width="0.7"/>
<line x1="424.74" y1="366.51" x2="511.26" y2="345.00" stroke="#3a3a3a" stroke-width="0.7"/>
<line x1="511.26" y1="345.00" x2="646.59" y2="351.49" stroke="#3a3a3a" stroke-width="0.7"/>
<line x1="646.59" y1="351.49" x2="635.59" y2="486.51" stroke="#3a3a3a" stroke-width="0.7"/>
<line x1="442.24" y1="529.24" x2="601.82" y2="568.99" stroke="#3a3a3a" stroke-width="0.7"/>
<line x1="601.82" y1="568.99" x2="635.59" y2="486.51" stroke="#3a3a3a" stroke-width="0.7"/><line x1="439.10" y1="526.05" x2="441.90" y2="526.05" stroke="#3a3a3a" stroke-width="0.55"/>
<line x1="437.85" y1="521.83" x2="441.45" y2="521.83" stroke="#3a3a3a" stroke-width="0.55"/>
<text x="0" y="0" font-size="8.133963044213182" text-anchor="end" transform="translate(436.05 523.46) rotate(0.0) scale(0.8 1.0)">35</text>
<line x1="438.19" y1="517.56" x2="440.99" y2="517.56" stroke="#3a3a3a" stroke-width="0.55"/>
<line x1="436.93" y1="513.27" x2="440.53" y2="513.27" stroke="#3a3a3a" stroke-width="0.55"/>
<text x="0" y="0" font-size="8.202784480883276" text-anchor="end" transform="translate(435.13 514.92) rotate(0.0) scale(0.8 1.0)">40</text>
<line x1="437.26" y1="508.93" x2="440.06" y2="508.93" stroke="#3a3a3a" stroke-width="0.55"/>
<line x1="435.99" y1="504.56" x2="439.59" y2="504.56" stroke="#3a3a3a" stroke-width="0.55"/>
<text x="0" y="0" font-size="8.272780451213361" text-anchor="end" transform="translate(434.19 506.24) rotate(0.0) scale(0.8 1.0)">45</text>
<line x1="436.31" y1="500.15" x2="439.11" y2="500.15" stroke="#3a3a3a" stroke-width="0.55"/>
<line x1="435.04" y1="495.70" x2="438.64" y2="495.70" stroke="#3a3a3a" stroke-width="0.55"/>
<text x="0" y="0" font-size="8.34398128156313" text-anchor="end" transform="translate(433.24 497.40) rotate(0.0) scale(0.8 1.0)">50</text>
<line x1="435.35" y1="491.21" x2="438.15" y2="491.21" stroke="#3a3a3a" stroke-width="0.55"/>
<line x1="434.07" y1="486.69" x2="437.67" y2="486.69" stroke="#3a3a3a" stroke-width="0.55"/>
<text x="0" y="0" font-size="8.416418351387938" text-anchor="end" transform="translate(432.27 488.42) rotate(0.0) scale(0.8 1.0)">55</text>
<line x1="434.38" y1="482.12" x2="437.18" y2="482.12" stroke="#3a3a3a" stroke-width="0.55"/>
<line x1="433.08" y1="477.52" x2="436.68" y2="477.52" stroke="#3a3a3a" stroke-width="0.55"/>
<text x="0" y="0" font-size="8.490124139350616" text-anchor="end" transform="translate(431.28 479.28) rotate(0.0) scale(0.8 1.0)">60</text>
<line x1="433.38" y1="472.87" x2="436.18" y2="472.87" stroke="#3a3a3a" stroke-width="0.55"/>
<line x1="432.08" y1="468.19" x2="435.68" y2="468.19" stroke="#3a3a3a" stroke-width="0.55"/>
<text x="0" y="0" font-size="8.56513227187758" text-anchor="end" transform="translate(430.28 469.97) rotate(0.0) scale(0.8 1.0)">65</text>
<line x1="432.37" y1="463.46" x2="435.17" y2="463.46" stroke="#3a3a3a" stroke-width="0.55"/>
<line x1="431.06" y1="458.69" x2="434.66" y2="458.69" stroke="#3a3a3a" stroke-width="0.55"/>
<text x="0" y="0" font-size="8.641477574311798" text-anchor="end" transform="translate(429.26 460.50) rotate(0.0) scale(0.8 1.0)">70</text>
<line x1="431.34" y1="453.88" x2="434.14" y2="453.88" stroke="#3a3a3a" stroke-width="0.55"/>
<line x1="430.02" y1="449.02" x2="433.62" y2="449.02" stroke="#3a3a3a" stroke-width="0.55"/>
<text x="0" y="0" font-size="8.719196124826043" text-anchor="end" transform="translate(428.22 450.86) rotate(0.0) scale(0.8 1.0)">75</text>
<line x1="430.29" y1="444.12" x2="433.09" y2="444.12" stroke="#3a3a3a" stroke-width="0.55"/>
<line x1="428.96" y1="439.18" x2="432.56" y2="439.18" stroke="#3a3a3a" stroke-width="0.55"/>
<text x="0" y="0" font-size="8.798325311271833" text-anchor="end" transform="translate(427.16 441.05) rotate(0.0) scale(0.8 1.0)">80</text>
<line x1="429.22" y1="434.19" x2="432.02" y2="434.19" stroke="#3a3a3a" stroke-width="0.55"/>
<line x1="427.88" y1="429.16" x2="431.48" y2="429.16" stroke="#3a3a3a" stroke-width="0.55"/>
<text x="0" y="0" font-size="8.878903891152241" text-anchor="end" transform="translate(426.08 431.05) rotate(0.0) scale(0.8 1.0)">85</text>
<line x1="428.13" y1="424.07" x2="430.93" y2="424.07" stroke="#3a3a3a" stroke-width="0.55"/>
<line x1="426.78" y1="418.95" x2="430.38" y2="418.95" stroke="#3a3a3a" stroke-width="0.55"/>
<text x="0" y="0" font-size="8.96097205492069" text-anchor="end" transform="translate(424.98 420.87) rotate(0.0) scale(0.8 1.0)">90</text>
<line x1="427.02" y1="413.77" x2="429.82" y2="413.77" stroke="#3a3a3a" stroke-width="0.55"/>
<line x1="425.66" y1="408.55" x2="429.26" y2="408.55" stroke="#3a3a3a" stroke-width="0.55"/>
<text x="0" y="0" font-size="9.04457149282294" text-anchor="end" transform="translate(423.86 410.50) rotate(0.0) scale(0.8 1.0)">95</text>
<line x1="425.90" y1="403.27" x2="428.70" y2="403.27" stroke="#3a3a3a" stroke-width="0.55"/>
<line x1="424.52" y1="397.95" x2="428.12" y2="397.95" stroke="#3a3a3a" stroke-width="0.55"/>
<text x="0" y="0" font-size="9.129745465515848" text-anchor="end" transform="translate(422.72 399.94) rotate(0.0) scale(0.8 1.0)">100</text>
<line x1="424.75" y1="392.58" x2="427.55" y2="392.58" stroke="#3a3a3a" stroke-width="0.55"/>
<line x1="423.36" y1="387.15" x2="426.96" y2="387.15" stroke="#3a3a3a" stroke-width="0.55"/>
<text x="0" y="0" font-size="9.216538878714216" text-anchor="end" transform="translate(421.56 389.17) rotate(0.0) scale(0.8 1.0)">105</text>
<line x1="423.57" y1="381.68" x2="426.37" y2="381.68" stroke="#3a3a3a" stroke-width="0.55"/>
<line x1="422.18" y1="376.15" x2="425.78" y2="376.15" stroke="#3a3a3a" stroke-width="0.55"/>
<text x="0" y="0" font-size="9.304998362136338" text-anchor="end" transform="translate(420.38 378.20) rotate(0.0) scale(0.8 1.0)">110</text>
<line x1="422.38" y1="370.57" x2="425.18" y2="370.57" stroke="#3a3a3a" stroke-width="0.55"/>
<line x1="421.54" y1="362.01" x2="424.74" y2="366.51" stroke="#3a3a3a" stroke-width="0.55"/>
<line x1="635.82" y1="483.79" x2="638.62" y2="483.79" stroke="#3a3a3a" stroke-width="0.55"/>
<line x1="636.11" y1="480.19" x2="639.71" y2="480.19" stroke="#3a3a3a" stroke-width="0.55"/>
<text x="0" y="0" font-size="7.618661774656492" text-anchor="start" transform="translate(641.91 483.98) rotate(0.0) scale(0.82 1.0)">35</text>
<line x1="636.41" y1="476.56" x2="639.21" y2="476.56" stroke="#3a3a3a" stroke-width="0.55"/>
<line x1="636.70" y1="472.90" x2="640.30" y2="472.90" stroke="#3a3a3a" stroke-width="0.55"/>
<text x="0" y="0" font-size="7.67131464103721" text-anchor="start" transform="translate(642.50 476.72) rotate(0.0) scale(0.82 1.0)">40</text>
<line x1="637.00" y1="469.23" x2="639.80" y2="469.23" stroke="#3a3a3a" stroke-width="0.55"/>
<line x1="637.30" y1="465.52" x2="640.90" y2="465.52" stroke="#3a3a3a" stroke-width="0.55"/>
<text x="0" y="0" font-size="7.724700344075063" text-anchor="start" transform="translate(643.10 469.36) rotate(0.0) scale(0.82 1.0)">45</text>
<line x1="637.61" y1="461.79" x2="640.41" y2="461.79" stroke="#3a3a3a" stroke-width="0.55"/>
<line x1="637.91" y1="458.04" x2="641.51" y2="458.04" stroke="#3a3a3a" stroke-width="0.55"/>
<text x="0" y="0" font-size="7.778834290713519" text-anchor="start" transform="translate(643.71 461.89) rotate(0.0) scale(0.82 1.0)">50</text>
<line x1="638.22" y1="454.25" x2="641.02" y2="454.25" stroke="#3a3a3a" stroke-width="0.55"/>
<line x1="638.53" y1="450.44" x2="642.13" y2="450.44" stroke="#3a3a3a" stroke-width="0.55"/>
<text x="0" y="0" font-size="7.83373232282541" text-anchor="start" transform="translate(644.33 454.32) rotate(0.0) scale(0.82 1.0)">55</text>
<line x1="638.85" y1="446.61" x2="641.65" y2="446.61" stroke="#3a3a3a" stroke-width="0.55"/>
<line x1="639.16" y1="442.75" x2="642.76" y2="442.75" stroke="#3a3a3a" stroke-width="0.55"/>
<text x="0" y="0" font-size="7.88941073266929" text-anchor="start" transform="translate(644.96 446.64) rotate(0.0) scale(0.82 1.0)">60</text>
<line x1="639.48" y1="438.85" x2="642.28" y2="438.85" stroke="#3a3a3a" stroke-width="0.55"/>
<line x1="639.80" y1="434.94" x2="643.40" y2="434.94" stroke="#3a3a3a" stroke-width="0.55"/>
<text x="0" y="0" font-size="7.945886279009632" text-anchor="start" transform="translate(645.60 438.85) rotate(0.0) scale(0.82 1.0)">65</text>
<line x1="640.12" y1="430.99" x2="642.92" y2="430.99" stroke="#3a3a3a" stroke-width="0.55"/>
<line x1="640.44" y1="427.01" x2="644.04" y2="427.01" stroke="#3a3a3a" stroke-width="0.55"/>
<text x="0" y="0" font-size="8.003176203934393" text-anchor="start" transform="translate(646.24 430.95) rotate(0.0) scale(0.82 1.0)">70</text>
<line x1="640.77" y1="423.01" x2="643.57" y2="423.01" stroke="#3a3a3a" stroke-width="0.55"/>
<line x1="641.10" y1="418.98" x2="644.70" y2="418.98" stroke="#3a3a3a" stroke-width="0.55"/>
<text x="0" y="0" font-size="8.061298250405386" text-anchor="start" transform="translate(646.90 422.94) rotate(0.0) scale(0.82 1.0)">75</text>
<line x1="641.43" y1="414.91" x2="644.23" y2="414.91" stroke="#3a3a3a" stroke-width="0.55"/>
<line x1="641.76" y1="410.82" x2="645.36" y2="410.82" stroke="#3a3a3a" stroke-width="0.55"/>
<text x="0" y="0" font-size="8.120270680579003" text-anchor="start" transform="translate(647.56 414.80) rotate(0.0) scale(0.82 1.0)">80</text>
<line x1="642.10" y1="406.70" x2="644.90" y2="406.70" stroke="#3a3a3a" stroke-width="0.55"/>
<line x1="642.43" y1="402.55" x2="646.03" y2="402.55" stroke="#3a3a3a" stroke-width="0.55"/>
<text x="0" y="0" font-size="8.180112294936992" text-anchor="start" transform="translate(648.23 406.55) rotate(0.0) scale(0.82 1.0)">85</text>
<line x1="642.78" y1="398.36" x2="645.58" y2="398.36" stroke="#3a3a3a" stroke-width="0.55"/>
<line x1="643.12" y1="394.15" x2="646.72" y2="394.15" stroke="#3a3a3a" stroke-width="0.55"/>
<text x="0" y="0" font-size="8.240842452269447" text-anchor="start" transform="translate(648.92 398.18) rotate(0.0) scale(0.82 1.0)">90</text>
<line x1="643.47" y1="389.90" x2="646.27" y2="389.90" stroke="#3a3a3a" stroke-width="0.55"/>
<line x1="643.81" y1="385.63" x2="647.41" y2="385.63" stroke="#3a3a3a" stroke-width="0.55"/>
<text x="0" y="0" font-size="8.302481090554542" text-anchor="start" transform="translate(649.61 389.68) rotate(0.0) scale(0.82 1.0)">95</text>
<line x1="644.16" y1="381.32" x2="646.96" y2="381.32" stroke="#3a3a3a" stroke-width="0.55"/>
<line x1="644.52" y1="376.97" x2="648.12" y2="376.97" stroke="#3a3a3a" stroke-width="0.55"/>
<text x="0" y="0" font-size="8.365048748782423" text-anchor="start" transform="translate(650.32 381.05) rotate(0.0) scale(0.82 1.0)">100</text>
<line x1="644.87" y1="372.60" x2="647.67" y2="372.60" stroke="#3a3a3a" stroke-width="0.55"/>
<line x1="645.23" y1="368.19" x2="648.83" y2="368.19" stroke="#3a3a3a" stroke-width="0.55"/>
<text x="0" y="0" font-size="8.42856658977333" text-anchor="start" transform="translate(651.03 372.29) rotate(0.0) scale(0.82 1.0)">105</text>
<line x1="645.60" y1="363.75" x2="648.40" y2="363.75" stroke="#3a3a3a" stroke-width="0.55"/>
<line x1="645.96" y1="359.27" x2="649.56" y2="359.27" stroke="#3a3a3a" stroke-width="0.55"/>
<text x="0" y="0" font-size="8.4930564240433" text-anchor="start" transform="translate(651.76 363.39) rotate(0.0) scale(0.82 1.0)">110</text>
<line x1="646.33" y1="354.76" x2="649.13" y2="354.76" stroke="#3a3a3a" stroke-width="0.55"/>
<line x1="424.74" y1="366.51" x2="424.74" y2="362.31" stroke="#3a3a3a" stroke-width="0.55"/>
<text x="0" y="0" font-size="9.289547448566022" text-anchor="start" transform="translate(423.94 359.51) rotate(-84.0) scale(1.0 0.66)">0.10</text>
<line x1="431.44" y1="364.85" x2="431.44" y2="361.65" stroke="#3a3a3a" stroke-width="0.55"/>
<line x1="437.83" y1="363.26" x2="437.83" y2="359.06" stroke="#3a3a3a" stroke-width="0.55"/>
<text x="0" y="0" font-size="8.869445028893015" text-anchor="start" transform="translate(437.03 356.26) rotate(-84.0) scale(1.0 0.66)">0.20</text>
<line x1="443.94" y1="361.74" x2="443.94" y2="358.54" stroke="#3a3a3a" stroke-width="0.55"/>
<line x1="449.79" y1="360.28" x2="449.79" y2="356.08" stroke="#3a3a3a" stroke-width="0.55"/>
<text x="0" y="0" font-size="8.485695319237372" text-anchor="start" transform="translate(448.99 353.28) rotate(-84.0) scale(1.0 0.66)">0.30</text>
<line x1="455.39" y1="358.89" x2="455.39" y2="355.69" stroke="#3a3a3a" stroke-width="0.55"/>
<line x1="460.76" y1="357.56" x2="460.76" y2="353.36" stroke="#3a3a3a" stroke-width="0.55"/>
<text x="0" y="0" font-size="8.133775446480609" text-anchor="start" transform="translate(459.96 350.56) rotate(-84.0) scale(1.0 0.66)">0.40</text>
<line x1="465.91" y1="356.28" x2="465.91" y2="353.08" stroke="#3a3a3a" stroke-width="0.55"/>
<line x1="470.85" y1="355.05" x2="470.85" y2="350.85" stroke="#3a3a3a" stroke-width="0.55"/>
<text x="0" y="0" font-size="7.809882953090471" text-anchor="start" transform="translate(470.05 348.05) rotate(-84.0) scale(1.0 0.66)">0.50</text>
<line x1="475.60" y1="353.86" x2="475.60" y2="350.66" stroke="#3a3a3a" stroke-width="0.55"/>
<line x1="480.17" y1="352.73" x2="480.17" y2="348.53" stroke="#3a3a3a" stroke-width="0.55"/>
<text x="0" y="0" font-size="7.510797852948758" text-anchor="start" transform="translate(479.37 345.73) rotate(-84.0) scale(1.0 0.66)">0.60</text>
<line x1="484.57" y1="351.63" x2="484.57" y2="348.43" stroke="#3a3a3a" stroke-width="0.55"/>
<line x1="488.80" y1="350.58" x2="488.80" y2="346.38" stroke="#3a3a3a" stroke-width="0.55"/>
<text x="0" y="0" font-size="7.2337752141559015" text-anchor="start" transform="translate(488.00 343.58) rotate(-84.0) scale(1.0 0.66)">0.70</text>
<line x1="492.89" y1="349.57" x2="492.89" y2="346.37" stroke="#3a3a3a" stroke-width="0.55"/>
<line x1="496.82" y1="348.59" x2="496.82" y2="344.39" stroke="#3a3a3a" stroke-width="0.55"/>
<text x="0" y="0" font-size="6.976460667629716" text-anchor="start" transform="translate(496.02 341.59) rotate(-84.0) scale(1.0 0.66)">0.80</text>
<line x1="500.62" y1="347.64" x2="500.62" y2="344.44" stroke="#3a3a3a" stroke-width="0.55"/>
<line x1="504.29" y1="346.73" x2="504.29" y2="342.53" stroke="#3a3a3a" stroke-width="0.55"/>
<text x="0" y="0" font-size="6.73682332908507" text-anchor="start" transform="translate(503.49 339.73) rotate(-84.0) scale(1.0 0.66)">0.90</text>
<line x1="507.83" y1="345.85" x2="507.83" y2="342.65" stroke="#3a3a3a" stroke-width="0.55"/>
<line x1="511.26" y1="345.00" x2="511.26" y2="340.80" stroke="#3a3a3a" stroke-width="0.55"/>
<line x1="644.28" y1="351.38" x2="644.28" y2="347.18" stroke="#3a3a3a" stroke-width="0.55"/>
<text x="0" y="0" font-size="9.222503602380527" text-anchor="start" transform="translate(648.53 345.88) rotate(-90.0) scale(0.8 1.0)">500</text>
<line x1="637.45" y1="351.05" x2="637.45" y2="347.85" stroke="#3a3a3a" stroke-width="0.55"/>
<line x1="630.71" y1="350.73" x2="630.71" y2="346.53" stroke="#3a3a3a" stroke-width="0.55"/>
<text x="0" y="0" font-size="9.11217878892897" text-anchor="start" transform="translate(634.91 345.23) rotate(-90.0) scale(0.8 1.0)">1,000</text>
<line x1="624.04" y1="350.41" x2="624.04" y2="347.21" stroke="#3a3a3a" stroke-width="0.55"/>
<line x1="617.45" y1="350.09" x2="617.45" y2="345.89" stroke="#3a3a3a" stroke-width="0.55"/>
<text x="0" y="0" font-size="9.004462308968783" text-anchor="start" transform="translate(621.63 344.59) rotate(-90.0) scale(0.8 1.0)">1,500</text>
<line x1="610.94" y1="349.78" x2="610.94" y2="346.58" stroke="#3a3a3a" stroke-width="0.55"/>
<line x1="604.51" y1="349.47" x2="604.51" y2="345.27" stroke="#3a3a3a" stroke-width="0.55"/>
<text x="0" y="0" font-size="8.899262742643" text-anchor="start" transform="translate(608.65 343.97) rotate(-90.0) scale(0.8 1.0)">2,000</text>
<line x1="598.15" y1="349.17" x2="598.15" y2="345.97" stroke="#3a3a3a" stroke-width="0.55"/>
<line x1="591.87" y1="348.87" x2="591.87" y2="344.67" stroke="#3a3a3a" stroke-width="0.55"/>
<text x="0" y="0" font-size="8.79649289300849" text-anchor="start" transform="translate(595.97 343.37) rotate(-90.0) scale(0.8 1.0)">2,500</text>
<line x1="585.65" y1="348.57" x2="585.65" y2="345.37" stroke="#3a3a3a" stroke-width="0.55"/>
<line x1="579.51" y1="348.27" x2="579.51" y2="344.07" stroke="#3a3a3a" stroke-width="0.55"/>
<text x="0" y="0" font-size="8.696069544985841" text-anchor="start" transform="translate(583.58 342.77) rotate(-90.0) scale(0.8 1.0)">3,000</text>
<line x1="573.44" y1="347.98" x2="573.44" y2="344.78" stroke="#3a3a3a" stroke-width="0.55"/>
<line x1="567.43" y1="347.69" x2="567.43" y2="343.49" stroke="#3a3a3a" stroke-width="0.55"/>
<text x="0" y="0" font-size="8.597913240634249" text-anchor="start" transform="translate(571.47 342.19) rotate(-90.0) scale(0.8 1.0)">3,500</text>
<line x1="561.50" y1="347.41" x2="561.50" y2="344.21" stroke="#3a3a3a" stroke-width="0.55"/>
<line x1="555.62" y1="347.13" x2="555.62" y2="342.93" stroke="#3a3a3a" stroke-width="0.55"/>
<text x="0" y="0" font-size="8.501948069475963" text-anchor="start" transform="translate(559.63 341.63) rotate(-90.0) scale(0.8 1.0)">4,000</text>
<line x1="549.82" y1="346.85" x2="549.82" y2="343.65" stroke="#3a3a3a" stroke-width="0.55"/>
<line x1="544.08" y1="346.57" x2="544.08" y2="342.37" stroke="#3a3a3a" stroke-width="0.55"/>
<text x="0" y="0" font-size="8.408101472707434" text-anchor="start" transform="translate(548.05 341.07) rotate(-90.0) scale(0.8 1.0)">4,500</text>
<line x1="538.40" y1="346.30" x2="538.40" y2="343.10" stroke="#3a3a3a" stroke-width="0.55"/>
<line x1="532.78" y1="346.03" x2="532.78" y2="341.83" stroke="#3a3a3a" stroke-width="0.55"/>
<text x="0" y="0" font-size="8.316304060235879" text-anchor="start" transform="translate(536.73 340.53) rotate(-90.0) scale(0.8 1.0)">5,000</text>
<line x1="527.23" y1="345.76" x2="527.23" y2="342.56" stroke="#3a3a3a" stroke-width="0.55"/>
<line x1="521.73" y1="345.50" x2="521.73" y2="341.30" stroke="#3a3a3a" stroke-width="0.55"/>
<text x="0" y="0" font-size="8.226489439571687" text-anchor="start" transform="translate(525.65 340.00) rotate(-90.0) scale(0.8 1.0)">5,500</text>
<line x1="516.30" y1="345.24" x2="516.30" y2="342.04" stroke="#3a3a3a" stroke-width="0.55"/>
<line x1="599.00" y1="568.29" x2="598.50" y2="572.29" stroke="#3a3a3a" stroke-width="0.55"/>
<text x="0" y="0" font-size="9.151278966635278" text-anchor="start" transform="translate(594.43 575.89) rotate(80.0) scale(0.82 0.8)">500</text>
<line x1="590.72" y1="566.23" x2="590.22" y2="569.23" stroke="#3a3a3a" stroke-width="0.55"/>
<line x1="582.56" y1="564.20" x2="582.06" y2="568.20" stroke="#3a3a3a" stroke-width="0.55"/>
<text x="0" y="0" font-size="9.013162622367727" text-anchor="start" transform="translate(578.05 571.80) rotate(80.0) scale(0.82 0.8)">1,000</text>
<line x1="574.52" y1="562.20" x2="574.02" y2="565.20" stroke="#3a3a3a" stroke-width="0.55"/>
<line x1="566.61" y1="560.22" x2="566.11" y2="564.22" stroke="#3a3a3a" stroke-width="0.55"/>
<text x="0" y="0" font-size="8.879153353731125" text-anchor="start" transform="translate(562.17 567.82) rotate(80.0) scale(0.82 0.8)">1,500</text>
<line x1="558.81" y1="558.28" x2="558.31" y2="561.28" stroke="#3a3a3a" stroke-width="0.55"/>
<line x1="551.12" y1="556.37" x2="550.62" y2="560.37" stroke="#3a3a3a" stroke-width="0.55"/>
<text x="0" y="0" font-size="8.749070650440512" text-anchor="start" transform="translate(546.75 563.97) rotate(80.0) scale(0.82 0.8)">2,000</text>
<line x1="543.55" y1="554.48" x2="543.05" y2="557.48" stroke="#3a3a3a" stroke-width="0.55"/>
<line x1="536.08" y1="552.62" x2="535.58" y2="556.62" stroke="#3a3a3a" stroke-width="0.55"/>
<text x="0" y="0" font-size="8.62274442763022" text-anchor="start" transform="translate(531.77 560.22) rotate(80.0) scale(0.82 0.8)">2,500</text>
<line x1="528.72" y1="550.79" x2="528.22" y2="553.79" stroke="#3a3a3a" stroke-width="0.55"/>
<line x1="521.47" y1="548.98" x2="520.97" y2="552.98" stroke="#3a3a3a" stroke-width="0.55"/>
<text x="0" y="0" font-size="8.500014283913046" text-anchor="start" transform="translate(517.22 556.58) rotate(80.0) scale(0.82 0.8)">3,000</text>
<line x1="514.32" y1="547.20" x2="513.82" y2="550.20" stroke="#3a3a3a" stroke-width="0.55"/>
<line x1="507.27" y1="545.44" x2="506.77" y2="549.44" stroke="#3a3a3a" stroke-width="0.55"/>
<text x="0" y="0" font-size="8.380728821911873" text-anchor="start" transform="translate(503.08 553.04) rotate(80.0) scale(0.82 0.8)">3,500</text>
<line x1="500.32" y1="543.71" x2="499.82" y2="546.71" stroke="#3a3a3a" stroke-width="0.55"/>
<line x1="493.46" y1="542.00" x2="492.96" y2="546.00" stroke="#3a3a3a" stroke-width="0.55"/>
<text x="0" y="0" font-size="8.264745025211663" text-anchor="start" transform="translate(489.33 549.60) rotate(80.0) scale(0.82 0.8)">4,000</text>
<line x1="486.70" y1="540.32" x2="486.20" y2="543.32" stroke="#3a3a3a" stroke-width="0.55"/>
<line x1="480.03" y1="538.66" x2="479.53" y2="542.66" stroke="#3a3a3a" stroke-width="0.55"/>
<text x="0" y="0" font-size="8.15192768634069" text-anchor="start" transform="translate(475.96 546.26) rotate(80.0) scale(0.82 0.8)">4,500</text>
<line x1="473.45" y1="537.02" x2="472.95" y2="540.02" stroke="#3a3a3a" stroke-width="0.55"/>
<line x1="466.96" y1="535.40" x2="466.46" y2="539.40" stroke="#3a3a3a" stroke-width="0.55"/>
<text x="0" y="0" font-size="8.0421488809707" text-anchor="start" transform="translate(462.94 543.00) rotate(80.0) scale(0.82 0.8)">5,000</text>
<line x1="460.56" y1="533.81" x2="460.06" y2="536.81" stroke="#3a3a3a" stroke-width="0.55"/>
<line x1="454.24" y1="532.23" x2="453.74" y2="536.23" stroke="#3a3a3a" stroke-width="0.55"/>
<text x="0" y="0" font-size="7.935287484036985" text-anchor="start" transform="translate(450.27 539.83) rotate(80.0) scale(0.82 0.8)">5,500</text>
<line x1="448.01" y1="530.68" x2="447.51" y2="533.68" stroke="#3a3a3a" stroke-width="0.55"/>
<line x1="601.82" y1="568.99" x2="605.82" y2="568.99" stroke="#3a3a3a" stroke-width="0.55"/>
<text x="0" y="0" font-size="9.923870225135301" text-anchor="start" transform="translate(607.02 573.57) rotate(12.0) skewX(-18) scale(0.95 0.62)">0.10</text>
<line x1="604.44" y1="562.60" x2="607.44" y2="562.60" stroke="#3a3a3a" stroke-width="0.55"/>
<line x1="606.94" y1="556.49" x2="610.94" y2="556.49" stroke="#3a3a3a" stroke-width="0.55"/>
<text x="0" y="0" font-size="9.471734418073252" text-anchor="start" transform="translate(612.14 560.90) rotate(12.0) skewX(-18) scale(0.95 0.62)">0.20</text>
<line x1="609.33" y1="550.65" x2="612.33" y2="550.65" stroke="#3a3a3a" stroke-width="0.55"/>
<line x1="611.61" y1="545.07" x2="615.61" y2="545.07" stroke="#3a3a3a" stroke-width="0.55"/>
<text x="0" y="0" font-size="9.059002363744828" text-anchor="start" transform="translate(616.81 549.33) rotate(12.0) skewX(-18) scale(0.95 0.62)">0.30</text>
<line x1="613.80" y1="539.73" x2="616.80" y2="539.73" stroke="#3a3a3a" stroke-width="0.55"/>
<line x1="615.90" y1="534.61" x2="619.90" y2="534.61" stroke="#3a3a3a" stroke-width="0.55"/>
<text x="0" y="0" font-size="8.680738077433178" text-anchor="start" transform="translate(621.10 538.74) rotate(12.0) skewX(-18) scale(0.95 0.62)">0.40</text>
<line x1="617.91" y1="529.70" x2="620.91" y2="529.70" stroke="#3a3a3a" stroke-width="0.55"/>
<line x1="619.84" y1="524.99" x2="623.84" y2="524.99" stroke="#3a3a3a" stroke-width="0.55"/>
<text x="0" y="0" font-size="8.33279695048632" text-anchor="start" transform="translate(625.04 528.99) rotate(12.0) skewX(-18) scale(0.95 0.62)">0.50</text>
<line x1="621.69" y1="520.46" x2="624.69" y2="520.46" stroke="#3a3a3a" stroke-width="0.55"/>
<line x1="623.47" y1="516.11" x2="627.47" y2="516.11" stroke="#3a3a3a" stroke-width="0.55"/>
<text x="0" y="0" font-size="8.011673262741938" text-anchor="start" transform="translate(628.67 519.99) rotate(12.0) skewX(-18) scale(0.95 0.62)">0.60</text>
<line x1="625.19" y1="511.92" x2="628.19" y2="511.92" stroke="#3a3a3a" stroke-width="0.55"/>
<line x1="626.84" y1="507.88" x2="630.84" y2="507.88" stroke="#3a3a3a" stroke-width="0.55"/>
<text x="0" y="0" font-size="7.71438164537153" text-anchor="start" transform="translate(632.04 511.66) rotate(12.0) skewX(-18) scale(0.95 0.62)">0.70</text>
<line x1="628.43" y1="504.00" x2="631.43" y2="504.00" stroke="#3a3a3a" stroke-width="0.55"/>
<line x1="629.97" y1="500.25" x2="633.97" y2="500.25" stroke="#3a3a3a" stroke-width="0.55"/>
<text x="0" y="0" font-size="7.438363991011906" text-anchor="start" transform="translate(635.17 503.93) rotate(12.0) skewX(-18) scale(0.95 0.62)">0.80</text>
<line x1="631.45" y1="496.63" x2="634.45" y2="496.63" stroke="#3a3a3a" stroke-width="0.55"/>
<line x1="632.88" y1="493.14" x2="636.88" y2="493.14" stroke="#3a3a3a" stroke-width="0.55"/>
<text x="0" y="0" font-size="7.181415657886518" text-anchor="start" transform="translate(638.08 496.73) rotate(12.0) skewX(-18) scale(0.95 0.62)">0.90</text>
<line x1="634.26" y1="489.77" x2="637.26" y2="489.77" stroke="#3a3a3a" stroke-width="0.55"/>
<line x1="635.59" y1="486.51" x2="639.59" y2="486.51" stroke="#3a3a3a" stroke-width="0.55"/>
<text x="0" y="0" font-size="8.2" text-anchor="middle" transform="translate(473.00 317.00) rotate(6.0) scale(0.8 1.0)">Ratio</text>
<text x="0" y="0" font-size="9.8" text-anchor="middle" transform="translate(576.30 310.20) rotate(0.0) scale(0.84 1.0)">RPM (rpm)</text>
<text x="0" y="0" font-size="7.8" text-anchor="middle" transform="translate(399.20 448.50) rotate(90.0) scale(0.85 1.0)">%</text>
<text x="0" y="0" font-size="7.5" text-anchor="middle" transform="translate(675.00 428.00) rotate(80.0) scale(0.8 1.0)">%</text>
<text x="0" y="0" font-size="10.2" text-anchor="middle" transform="translate(517.20 590.80) rotate(15.0) skewX(15) scale(0.86 0.92)">RPM (rpm)</text>
<text x="0" y="0" font-size="8.4" text-anchor="middle" transform="translate(664.20 531.50) rotate(-78.0) scale(0.82 0.8)">Ratio</text><polygon points="512.27,352.63 504.69,357.13 511.43,350.30 519.00,350.70" fill="#ffa800" stroke="#ffa800" stroke-width="0.3"/>
<path d="M512.27,352.63 L504.69,357.13 L511.43,350.30 L519.00,350.70 Z" fill="none" stroke="#111" stroke-width="0.5" stroke-linejoin="round"/>
<polygon points="521.01,348.07 512.27,352.63 519.00,350.70 527.56,347.90" fill="#ffa800" stroke="#ffa800" stroke-width="0.3"/>
<path d="M521.01,348.07 L512.27,352.63 L519.00,350.70 L527.56,347.90 Z" fill="none" stroke="#111" stroke-width="0.5" stroke-linejoin="round"/>
<polygon points="530.04,348.53 521.01,348.07 527.56,347.90 536.31,346.69" fill="#ffa800" stroke="#ffa800" stroke-width="0.3"/>
<path d="M530.04,348.53 L521.01,348.07 L527.56,347.90 L536.31,346.69 Z" fill="none" stroke="#111" stroke-width="0.5" stroke-linejoin="round"/>
<polygon points="508.85,357.03 501.13,359.88 504.69,357.13 512.27,352.63" fill="#ffa800" stroke="#ffa800" stroke-width="0.3"/>
<path d="M508.85,357.03 L501.13,359.88 L504.69,357.13 L512.27,352.63 Z" fill="none" stroke="#111" stroke-width="0.5" stroke-linejoin="round"/>
<polygon points="539.28,350.72 530.04,348.53 536.31,346.69 545.28,348.79" fill="#ffa800" stroke="#ffa800" stroke-width="0.3"/>
<path d="M539.28,350.72 L530.04,348.53 L536.31,346.69 L545.28,348.79 Z" fill="none" stroke="#111" stroke-width="0.5" stroke-linejoin="round"/>
<polygon points="546.19,356.23 539.28,350.72 545.28,348.79 551.97,350.79" fill="#ffa800" stroke="#ffa800" stroke-width="0.3"/>
<path d="M546.19,356.23 L539.28,350.72 L545.28,348.79 L551.97,350.79 Z" fill="none" stroke="#111" stroke-width="0.5" stroke-linejoin="round"/>
<polygon points="517.62,350.74 508.85,357.03 512.27,352.63 521.01,348.07" fill="#ffa800" stroke="#ffa800" stroke-width="0.3"/>
<path d="M517.62,350.74 L508.85,357.03 L512.27,352.63 L521.01,348.07 Z" fill="none" stroke="#111" stroke-width="0.5" stroke-linejoin="round"/>
<polygon points="505.26,359.84 497.46,362.71 501.13,359.88 508.85,357.03" fill="#ffa800" stroke="#ffa800" stroke-width="0.3"/>
<path d="M505.26,359.84 L497.46,362.71 L501.13,359.88 L508.85,357.03 Z" fill="none" stroke="#111" stroke-width="0.5" stroke-linejoin="round"/>
<polygon points="553.11,358.35 546.19,356.23 551.97,350.79 558.70,352.81" fill="#ffa800" stroke="#ffa800" stroke-width="0.3"/>
<path d="M553.11,358.35 L546.19,356.23 L551.97,350.79 L558.70,352.81 Z" fill="none" stroke="#111" stroke-width="0.5" stroke-linejoin="round"/>
<polygon points="526.78,351.23 517.62,350.74 521.01,348.07 530.04,348.53" fill="#ffa800" stroke="#ffa800" stroke-width="0.3"/>
<path d="M526.78,351.23 L517.62,350.74 L521.01,348.07 L530.04,348.53 Z" fill="none" stroke="#111" stroke-width="0.5" stroke-linejoin="round"/>
<polygon points="567.01,362.64 553.11,358.35 558.70,352.81 572.24,355.23" fill="#ffa800" stroke="#ffa800" stroke-width="0.3"/>
<path d="M567.01,362.64 L553.11,358.35 L558.70,352.81 L572.24,355.23 Z" fill="none" stroke="#111" stroke-width="0.5" stroke-linejoin="round"/>
<polygon points="514.12,353.50 505.26,359.84 508.85,357.03 517.62,350.74" fill="#ffa800" stroke="#ffa800" stroke-width="0.3"/>
<path d="M514.12,353.50 L505.26,359.84 L508.85,357.03 L517.62,350.74 Z" fill="none" stroke="#111" stroke-width="0.5" stroke-linejoin="round"/>
<polygon points="493.66,365.64 493.66,365.64 493.66,365.64" fill="#ffbe00" stroke="#ffbe00" stroke-width="0.3"/>
<polygon points="501.55,362.76 493.66,365.64 497.46,362.71 505.26,359.84" fill="#ffa800" stroke="#ffa800" stroke-width="0.3"/>
<path d="M501.55,362.76 L493.66,365.64 L497.46,362.71 L505.26,359.84 Z" fill="none" stroke="#111" stroke-width="0.5" stroke-linejoin="round"/>
<polygon points="536.16,355.21 526.78,351.23 530.04,348.53 539.28,350.72" fill="#ffa800" stroke="#ffa800" stroke-width="0.3"/>
<path d="M536.16,355.21 L526.78,351.23 L530.04,348.53 L539.28,350.72 Z" fill="none" stroke="#111" stroke-width="0.5" stroke-linejoin="round"/>
<polygon points="584.26,374.17 572.73,366.46 586.18,364.48 588.99,366.35" fill="#ffbe00" stroke="#ffbe00" stroke-width="0.3"/>
<polygon points="572.73,366.46 567.01,362.64 572.24,355.23 586.18,364.48" fill="#ffa800" stroke="#ffa800" stroke-width="0.3"/>
<path d="M584.26,374.17 L567.01,362.64 L572.24,355.23 L588.99,366.35 Z" fill="none" stroke="#111" stroke-width="0.5" stroke-linejoin="round"/>
<polygon points="543.16,359.09 536.16,355.21 539.28,350.72 546.19,356.23" fill="#ffa800" stroke="#ffa800" stroke-width="0.3"/>
<path d="M543.16,359.09 L536.16,355.21 L539.28,350.72 L546.19,356.23 Z" fill="none" stroke="#111" stroke-width="0.5" stroke-linejoin="round"/>
<polygon points="593.22,381.75 584.26,374.17 588.99,366.35 597.61,375.34" fill="#ffbe00" stroke="#ffbe00" stroke-width="0.3"/>
<path d="M593.22,381.75 L584.26,374.17 L588.99,366.35 L597.61,375.34 Z" fill="none" stroke="#111" stroke-width="0.5" stroke-linejoin="round"/>
<polygon points="602.12,391.07 595.53,384.17 603.30,381.29 606.23,384.35" fill="#ffd400" stroke="#ffd400" stroke-width="0.3"/>
<polygon points="595.53,384.17 593.22,381.75 597.61,375.34 603.30,381.29" fill="#ffbe00" stroke="#ffbe00" stroke-width="0.3"/>
<path d="M602.12,391.07 L593.22,381.75 L597.61,375.34 L606.23,384.35 Z" fill="none" stroke="#111" stroke-width="0.5" stroke-linejoin="round"/>
<polygon points="523.40,354.02 514.12,353.50 517.62,350.74 526.78,351.23" fill="#ffa800" stroke="#ffa800" stroke-width="0.3"/>
<path d="M523.40,354.02 L514.12,353.50 L517.62,350.74 L526.78,351.23 Z" fill="none" stroke="#111" stroke-width="0.5" stroke-linejoin="round"/>
<polygon points="550.18,361.26 543.16,359.09 546.19,356.23 553.11,358.35" fill="#ffa800" stroke="#ffa800" stroke-width="0.3"/>
<path d="M550.18,361.26 L543.16,359.09 L546.19,356.23 L553.11,358.35 Z" fill="none" stroke="#111" stroke-width="0.5" stroke-linejoin="round"/>
<polygon points="611.16,398.71 602.12,391.07 606.23,384.35 614.90,393.39" fill="#ffd400" stroke="#ffd400" stroke-width="0.3"/>
<path d="M611.16,398.71 L602.12,391.07 L606.23,384.35 L614.90,393.39 Z" fill="none" stroke="#111" stroke-width="0.5" stroke-linejoin="round"/>
<polygon points="615.55,402.54 614.68,401.77 617.02,400.31" fill="#ffe900" stroke="#ffe900" stroke-width="0.3"/>
<polygon points="614.68,401.77 611.16,398.71 614.90,393.39 619.14,397.08 617.02,400.31" fill="#ffd400" stroke="#ffd400" stroke-width="0.3"/>
<path d="M615.55,402.54 L611.16,398.71 L614.90,393.39 L619.14,397.08 Z" fill="none" stroke="#111" stroke-width="0.5" stroke-linejoin="round"/>
<polygon points="619.96,406.37 615.55,402.54 617.02,400.31 619.97,398.14 623.30,402.41" fill="#ffe900" stroke="#ffe900" stroke-width="0.3"/>
<polygon points="617.02,400.31 619.14,397.08 619.97,398.14" fill="#ffd400" stroke="#ffd400" stroke-width="0.3"/>
<path d="M619.96,406.37 L615.55,402.54 L619.14,397.08 L623.30,402.41 Z" fill="none" stroke="#111" stroke-width="0.5" stroke-linejoin="round"/>
<polygon points="628.56,417.42 619.96,406.37 623.30,402.41 631.71,411.45" fill="#ffe900" stroke="#ffe900" stroke-width="0.3"/>
<path d="M628.56,417.42 L619.96,406.37 L623.30,402.41 L631.71,411.45 Z" fill="none" stroke="#111" stroke-width="0.5" stroke-linejoin="round"/>
<polygon points="633.16,424.65 629.60,419.05 636.16,415.02 636.40,415.21" fill="#eeff00" stroke="#eeff00" stroke-width="0.3"/>
<polygon points="629.60,419.05 628.56,417.42 631.71,411.45 636.16,415.02" fill="#ffe900" stroke="#ffe900" stroke-width="0.3"/>
<path d="M633.16,424.65 L628.56,417.42 L631.71,411.45 L636.40,415.21 Z" fill="none" stroke="#111" stroke-width="0.5" stroke-linejoin="round"/>
<polygon points="638.01,428.56 633.16,424.65 636.40,415.21 641.23,417.36" fill="#eeff00" stroke="#eeff00" stroke-width="0.3"/>
<path d="M638.01,428.56 L633.16,424.65 L636.40,415.21 L641.23,417.36 Z" fill="none" stroke="#111" stroke-width="0.5" stroke-linejoin="round"/>
<polygon points="510.51,356.35 501.55,362.76 505.26,359.84 514.12,353.50" fill="#ffa800" stroke="#ffa800" stroke-width="0.3"/>
<path d="M510.51,356.35 L501.55,362.76 L505.26,359.84 L514.12,353.50 Z" fill="none" stroke="#111" stroke-width="0.5" stroke-linejoin="round"/>
<polygon points="532.92,358.09 523.40,354.02 526.78,351.23 536.16,355.21" fill="#ffa800" stroke="#ffa800" stroke-width="0.3"/>
<path d="M532.92,358.09 L523.40,354.02 L526.78,351.23 L536.16,355.21 Z" fill="none" stroke="#111" stroke-width="0.5" stroke-linejoin="round"/>
<polygon points="493.71,367.23 489.74,368.67 493.66,365.64 493.66,365.64" fill="#ffbe00" stroke="#ffbe00" stroke-width="0.3"/>
<polygon points="497.72,365.77 493.71,367.23 493.66,365.64 493.66,365.64 501.55,362.76" fill="#ffa800" stroke="#ffa800" stroke-width="0.3"/>
<path d="M497.72,365.77 L489.74,368.67 L493.66,365.64 L501.55,362.76 Z" fill="none" stroke="#111" stroke-width="0.5" stroke-linejoin="round"/>
<polygon points="564.28,365.65 550.18,361.26 553.11,358.35 567.01,362.64" fill="#ffa800" stroke="#ffa800" stroke-width="0.3"/>
<path d="M564.28,365.65 L550.18,361.26 L553.11,358.35 L567.01,362.64 Z" fill="none" stroke="#111" stroke-width="0.5" stroke-linejoin="round"/>
<polygon points="540.02,362.04 532.92,358.09 536.16,355.21 543.16,359.09" fill="#ffa800" stroke="#ffa800" stroke-width="0.3"/>
<path d="M540.02,362.04 L532.92,358.09 L536.16,355.21 L543.16,359.09 Z" fill="none" stroke="#111" stroke-width="0.5" stroke-linejoin="round"/>
<polygon points="519.91,356.91 510.51,356.35 514.12,353.50 523.40,354.02" fill="#ffa800" stroke="#ffa800" stroke-width="0.3"/>
<path d="M519.91,356.91 L510.51,356.35 L514.12,353.50 L523.40,354.02 Z" fill="none" stroke="#111" stroke-width="0.5" stroke-linejoin="round"/>
<polygon points="547.15,364.26 540.02,362.04 543.16,359.09 550.18,361.26" fill="#ffa800" stroke="#ffa800" stroke-width="0.3"/>
<path d="M547.15,364.26 L540.02,362.04 L543.16,359.09 L550.18,361.26 Z" fill="none" stroke="#111" stroke-width="0.5" stroke-linejoin="round"/>
<polygon points="581.80,377.40 567.18,367.59 572.73,366.46 584.26,374.17" fill="#ffbe00" stroke="#ffbe00" stroke-width="0.3"/>
<polygon points="567.18,367.59 564.28,365.65 567.01,362.64 572.73,366.46" fill="#ffa800" stroke="#ffa800" stroke-width="0.3"/>
<path d="M581.80,377.40 L564.28,365.65 L567.01,362.64 L584.26,374.17 Z" fill="none" stroke="#111" stroke-width="0.5" stroke-linejoin="round"/>
<polygon points="506.77,359.30 497.72,365.77 501.55,362.76 510.51,356.35" fill="#ffa800" stroke="#ffa800" stroke-width="0.3"/>
<path d="M506.77,359.30 L497.72,365.77 L501.55,362.76 L510.51,356.35 Z" fill="none" stroke="#111" stroke-width="0.5" stroke-linejoin="round"/>
<polygon points="590.85,386.85 589.58,385.53 591.68,385.05" fill="#ffd400" stroke="#ffd400" stroke-width="0.3"/>
<polygon points="589.58,385.53 581.80,377.40 584.26,374.17 593.22,381.75 591.68,385.05" fill="#ffbe00" stroke="#ffbe00" stroke-width="0.3"/>
<path d="M590.85,386.85 L581.80,377.40 L584.26,374.17 L593.22,381.75 Z" fill="none" stroke="#111" stroke-width="0.5" stroke-linejoin="round"/>
<polygon points="599.96,394.60 590.85,386.85 591.68,385.05 595.53,384.17 602.12,391.07" fill="#ffd400" stroke="#ffd400" stroke-width="0.3"/>
<polygon points="591.68,385.05 593.22,381.75 595.53,384.17" fill="#ffbe00" stroke="#ffbe00" stroke-width="0.3"/>
<path d="M599.96,394.60 L590.85,386.85 L593.22,381.75 L602.12,391.07 Z" fill="none" stroke="#111" stroke-width="0.5" stroke-linejoin="round"/>
<polygon points="529.57,361.06 519.91,356.91 523.40,354.02 532.92,358.09" fill="#ffa800" stroke="#ffa800" stroke-width="0.3"/>
<path d="M529.57,361.06 L519.91,356.91 L523.40,354.02 L532.92,358.09 Z" fill="none" stroke="#111" stroke-width="0.5" stroke-linejoin="round"/>
<polygon points="493.75,368.88 485.69,371.80 489.74,368.67 493.71,367.23 493.75,368.88" fill="#ffbe00" stroke="#ffbe00" stroke-width="0.3"/>
<polygon points="493.75,368.88 493.75,368.88 493.71,367.23 497.72,365.77" fill="#ffa800" stroke="#ffa800" stroke-width="0.3"/>
<path d="M493.75,368.88 L485.69,371.80 L489.74,368.67 L497.72,365.77 Z" fill="none" stroke="#111" stroke-width="0.5" stroke-linejoin="round"/>
<polygon points="561.46,368.76 561.46,368.76 561.46,368.76" fill="#ffbe00" stroke="#ffbe00" stroke-width="0.3"/>
<polygon points="561.46,368.76 547.15,364.26 550.18,361.26 564.28,365.65" fill="#ffa800" stroke="#ffa800" stroke-width="0.3"/>
<path d="M561.46,368.76 L547.15,364.26 L550.18,361.26 L564.28,365.65 Z" fill="none" stroke="#111" stroke-width="0.5" stroke-linejoin="round"/>
<polygon points="609.24,400.66 599.96,394.60 602.12,391.07 611.16,398.71" fill="#ffd400" stroke="#ffd400" stroke-width="0.3"/>
<path d="M609.24,400.66 L599.96,394.60 L602.12,391.07 L611.16,398.71 Z" fill="none" stroke="#111" stroke-width="0.5" stroke-linejoin="round"/>
<polygon points="636.32,434.42 631.52,428.76 633.16,424.65 638.01,428.56" fill="#eeff00" stroke="#eeff00" stroke-width="0.3"/>
<path d="M636.32,434.42 L631.52,428.76 L633.16,424.65 L638.01,428.56 Z" fill="none" stroke="#111" stroke-width="0.5" stroke-linejoin="round"/>
<polygon points="631.52,428.76 626.84,421.42 627.02,421.01 629.60,419.05 633.16,424.65" fill="#eeff00" stroke="#eeff00" stroke-width="0.3"/>
<polygon points="627.02,421.01 628.56,417.42 629.60,419.05" fill="#ffe900" stroke="#ffe900" stroke-width="0.3"/>
<path d="M631.52,428.76 L626.84,421.42 L628.56,417.42 L633.16,424.65 Z" fill="none" stroke="#111" stroke-width="0.5" stroke-linejoin="round"/>
<polygon points="613.71,404.56 612.82,403.78 614.68,401.77 615.55,402.54" fill="#ffe900" stroke="#ffe900" stroke-width="0.3"/>
<polygon points="612.82,403.78 609.24,400.66 611.16,398.71 614.68,401.77" fill="#ffd400" stroke="#ffd400" stroke-width="0.3"/>
<path d="M613.71,404.56 L609.24,400.66 L611.16,398.71 L615.55,402.54 Z" fill="none" stroke="#111" stroke-width="0.5" stroke-linejoin="round"/>
<polygon points="626.84,421.42 626.72,421.23 627.02,421.01" fill="#eeff00" stroke="#eeff00" stroke-width="0.3"/>
<polygon points="626.72,421.23 618.20,408.46 619.96,406.37 628.56,417.42 627.02,421.01" fill="#ffe900" stroke="#ffe900" stroke-width="0.3"/>
<path d="M626.84,421.42 L618.20,408.46 L619.96,406.37 L628.56,417.42 Z" fill="none" stroke="#111" stroke-width="0.5" stroke-linejoin="round"/>
<polygon points="536.76,363.31 529.57,361.06 532.92,358.09 540.02,362.04" fill="#ffa800" stroke="#ffa800" stroke-width="0.3"/>
<path d="M536.76,363.31 L529.57,361.06 L532.92,358.09 L540.02,362.04 Z" fill="none" stroke="#111" stroke-width="0.5" stroke-linejoin="round"/>
<polygon points="618.20,408.46 613.71,404.56 615.55,402.54 619.96,406.37" fill="#ffe900" stroke="#ffe900" stroke-width="0.3"/>
<path d="M618.20,408.46 L613.71,404.56 L615.55,402.54 L619.96,406.37 Z" fill="none" stroke="#111" stroke-width="0.5" stroke-linejoin="round"/>
<polygon points="516.30,359.90 506.77,359.30 510.51,356.35 519.91,356.91" fill="#ffa800" stroke="#ffa800" stroke-width="0.3"/>
<path d="M516.30,359.90 L506.77,359.30 L510.51,356.35 L519.91,356.91 Z" fill="none" stroke="#111" stroke-width="0.5" stroke-linejoin="round"/>
<polygon points="579.21,382.51 561.46,368.76 561.46,368.76 567.18,367.59 581.80,377.40" fill="#ffbe00" stroke="#ffbe00" stroke-width="0.3"/>
<polygon points="561.46,368.76 561.46,368.76 564.28,365.65 567.18,367.59" fill="#ffa800" stroke="#ffa800" stroke-width="0.3"/>
<path d="M579.21,382.51 L561.46,368.76 L564.28,365.65 L581.80,377.40 Z" fill="none" stroke="#111" stroke-width="0.5" stroke-linejoin="round"/>
<polygon points="544.01,367.37 536.76,363.31 540.02,362.04 547.15,364.26" fill="#ffa800" stroke="#ffa800" stroke-width="0.3"/>
<path d="M544.01,367.37 L536.76,363.31 L540.02,362.04 L547.15,364.26 Z" fill="none" stroke="#111" stroke-width="0.5" stroke-linejoin="round"/>
<polygon points="493.75,368.88 493.75,368.88 493.75,368.88" fill="#ffbe00" stroke="#ffbe00" stroke-width="0.3"/>
<polygon points="502.90,362.35 493.75,368.88 497.72,365.77 506.77,359.30" fill="#ffa800" stroke="#ffa800" stroke-width="0.3"/>
<path d="M502.90,362.35 L493.75,368.88 L497.72,365.77 L506.77,359.30 Z" fill="none" stroke="#111" stroke-width="0.5" stroke-linejoin="round"/>
<polygon points="588.46,390.36 584.52,387.02 589.58,385.53 590.85,386.85" fill="#ffd400" stroke="#ffd400" stroke-width="0.3"/>
<polygon points="584.52,387.02 579.21,382.51 581.80,377.40 589.58,385.53" fill="#ffbe00" stroke="#ffbe00" stroke-width="0.3"/>
<path d="M588.46,390.36 L579.21,382.51 L581.80,377.40 L590.85,386.85 Z" fill="none" stroke="#111" stroke-width="0.5" stroke-linejoin="round"/>
<polygon points="597.72,398.25 588.46,390.36 590.85,386.85 599.96,394.60" fill="#ffd400" stroke="#ffd400" stroke-width="0.3"/>
<path d="M597.72,398.25 L588.46,390.36 L590.85,386.85 L599.96,394.60 Z" fill="none" stroke="#111" stroke-width="0.5" stroke-linejoin="round"/>
<polygon points="489.65,372.10 481.49,375.03 485.69,371.80 493.75,368.88" fill="#ffbe00" stroke="#ffbe00" stroke-width="0.3"/>
<polygon points="493.75,368.88 493.75,368.88 493.75,368.88" fill="#ffa800" stroke="#ffa800" stroke-width="0.3"/>
<path d="M489.65,372.10 L481.49,375.03 L485.69,371.80 L493.75,368.88 Z" fill="none" stroke="#111" stroke-width="0.5" stroke-linejoin="round"/>
<polygon points="526.07,362.32 516.30,359.90 519.91,356.91 529.57,361.06" fill="#ffa800" stroke="#ffa800" stroke-width="0.3"/>
<path d="M526.07,362.32 L516.30,359.90 L519.91,356.91 L529.57,361.06 Z" fill="none" stroke="#111" stroke-width="0.5" stroke-linejoin="round"/>
<polygon points="558.53,373.78 548.82,369.50 561.46,368.76 561.46,368.76" fill="#ffbe00" stroke="#ffbe00" stroke-width="0.3"/>
<polygon points="548.82,369.50 544.01,367.37 547.15,364.26 561.46,368.76 561.46,368.76" fill="#ffa800" stroke="#ffa800" stroke-width="0.3"/>
<path d="M558.53,373.78 L544.01,367.37 L547.15,364.26 L561.46,368.76 Z" fill="none" stroke="#111" stroke-width="0.5" stroke-linejoin="round"/>
<polygon points="607.15,404.43 597.72,398.25 599.96,394.60 609.24,400.66" fill="#ffd400" stroke="#ffd400" stroke-width="0.3"/>
<path d="M607.15,404.43 L597.72,398.25 L599.96,394.60 L609.24,400.66 Z" fill="none" stroke="#111" stroke-width="0.5" stroke-linejoin="round"/>
<polygon points="634.58,440.47 629.83,433.02 631.52,428.76 636.32,434.42" fill="#eeff00" stroke="#eeff00" stroke-width="0.3"/>
<path d="M634.58,440.47 L629.83,433.02 L631.52,428.76 L636.32,434.42 Z" fill="none" stroke="#111" stroke-width="0.5" stroke-linejoin="round"/>
<polygon points="629.83,433.02 625.07,425.55 626.84,421.42 631.52,428.76" fill="#eeff00" stroke="#eeff00" stroke-width="0.3"/>
<path d="M629.83,433.02 L625.07,425.55 L626.84,421.42 L631.52,428.76 Z" fill="none" stroke="#111" stroke-width="0.5" stroke-linejoin="round"/>
<polygon points="611.70,408.40 608.52,405.62 612.82,403.78 613.71,404.56" fill="#ffe900" stroke="#ffe900" stroke-width="0.3"/>
<polygon points="608.52,405.62 607.15,404.43 609.24,400.66 612.82,403.78" fill="#ffd400" stroke="#ffd400" stroke-width="0.3"/>
<path d="M611.70,408.40 L607.15,404.43 L609.24,400.66 L613.71,404.56 Z" fill="none" stroke="#111" stroke-width="0.5" stroke-linejoin="round"/>
<polygon points="625.07,425.55 623.87,423.51 626.72,421.23 626.84,421.42" fill="#eeff00" stroke="#eeff00" stroke-width="0.3"/>
<polygon points="623.87,423.51 616.37,410.64 618.20,408.46 626.72,421.23" fill="#ffe900" stroke="#ffe900" stroke-width="0.3"/>
<path d="M625.07,425.55 L616.37,410.64 L618.20,408.46 L626.84,421.42 Z" fill="none" stroke="#111" stroke-width="0.5" stroke-linejoin="round"/>
<polygon points="533.40,366.44 526.07,362.32 529.57,361.06 536.76,363.31" fill="#ffa800" stroke="#ffa800" stroke-width="0.3"/>
<path d="M533.40,366.44 L526.07,362.32 L529.57,361.06 L536.76,363.31 Z" fill="none" stroke="#111" stroke-width="0.5" stroke-linejoin="round"/>
<polygon points="616.37,410.64 611.70,408.40 613.71,404.56 618.20,408.46" fill="#ffe900" stroke="#ffe900" stroke-width="0.3"/>
<path d="M616.37,410.64 L611.70,408.40 L613.71,404.56 L618.20,408.46 Z" fill="none" stroke="#111" stroke-width="0.5" stroke-linejoin="round"/>
<polygon points="576.58,386.00 558.53,373.78 561.46,368.76 579.21,382.51" fill="#ffbe00" stroke="#ffbe00" stroke-width="0.3"/>
<polygon points="561.46,368.76 561.46,368.76 561.46,368.76" fill="#ffa800" stroke="#ffa800" stroke-width="0.3"/>
<path d="M576.58,386.00 L558.53,373.78 L561.46,368.76 L579.21,382.51 Z" fill="none" stroke="#111" stroke-width="0.5" stroke-linejoin="round"/>
<polygon points="512.56,362.99 502.90,362.35 506.77,359.30 516.30,359.90" fill="#ffa800" stroke="#ffa800" stroke-width="0.3"/>
<path d="M512.56,362.99 L502.90,362.35 L506.77,359.30 L516.30,359.90 Z" fill="none" stroke="#111" stroke-width="0.5" stroke-linejoin="round"/>
<polygon points="540.77,370.59 540.77,370.59 540.77,370.59" fill="#ffbe00" stroke="#ffbe00" stroke-width="0.3"/>
<polygon points="540.77,370.59 533.40,366.44 536.76,363.31 544.01,367.37" fill="#ffa800" stroke="#ffa800" stroke-width="0.3"/>
<path d="M540.77,370.59 L533.40,366.44 L536.76,363.31 L544.01,367.37 Z" fill="none" stroke="#111" stroke-width="0.5" stroke-linejoin="round"/>
<polygon points="585.93,395.78 579.01,388.54 584.52,387.02 588.46,390.36" fill="#ffd400" stroke="#ffd400" stroke-width="0.3"/>
<polygon points="579.01,388.54 576.58,386.00 579.21,382.51 584.52,387.02" fill="#ffbe00" stroke="#ffbe00" stroke-width="0.3"/>
<path d="M585.93,395.78 L576.58,386.00 L579.21,382.51 L588.46,390.36 Z" fill="none" stroke="#111" stroke-width="0.5" stroke-linejoin="round"/>
<polygon points="491.94,370.48 489.65,372.10 493.75,368.88 493.75,368.88" fill="#ffbe00" stroke="#ffbe00" stroke-width="0.3"/>
<polygon points="498.90,365.51 491.94,370.48 493.75,368.88 493.75,368.88 502.90,362.35" fill="#ffa800" stroke="#ffa800" stroke-width="0.3"/>
<path d="M498.90,365.51 L489.65,372.10 L493.75,368.88 L502.90,362.35 Z" fill="none" stroke="#111" stroke-width="0.5" stroke-linejoin="round"/>
<polygon points="595.41,402.03 585.93,395.78 588.46,390.36 597.72,398.25" fill="#ffd400" stroke="#ffd400" stroke-width="0.3"/>
<path d="M595.41,402.03 L585.93,395.78 L588.46,390.36 L597.72,398.25 Z" fill="none" stroke="#111" stroke-width="0.5" stroke-linejoin="round"/>
<polygon points="555.51,377.15 540.77,370.59 540.77,370.59 548.82,369.50 558.53,373.78" fill="#ffbe00" stroke="#ffbe00" stroke-width="0.3"/>
<polygon points="540.77,370.59 540.77,370.59 544.01,367.37 548.82,369.50" fill="#ffa800" stroke="#ffa800" stroke-width="0.3"/>
<path d="M555.51,377.15 L540.77,370.59 L544.01,367.37 L558.53,373.78 Z" fill="none" stroke="#111" stroke-width="0.5" stroke-linejoin="round"/>
<polygon points="485.40,375.44 477.15,378.38 481.49,375.03 489.65,372.10" fill="#ffbe00" stroke="#ffbe00" stroke-width="0.3"/>
<path d="M485.40,375.44 L477.15,378.38 L481.49,375.03 L489.65,372.10 Z" fill="none" stroke="#111" stroke-width="0.5" stroke-linejoin="round"/>
<polygon points="522.47,365.48 512.56,362.99 516.30,359.90 526.07,362.32" fill="#ffa800" stroke="#ffa800" stroke-width="0.3"/>
<path d="M522.47,365.48 L512.56,362.99 L516.30,359.90 L526.07,362.32 Z" fill="none" stroke="#111" stroke-width="0.5" stroke-linejoin="round"/>
<polygon points="632.78,446.71 630.61,443.31 634.40,441.08" fill="#aaff00" stroke="#aaff00" stroke-width="0.3"/>
<polygon points="630.61,443.31 627.95,439.15 629.83,433.02 634.58,440.47 634.40,441.08" fill="#eeff00" stroke="#eeff00" stroke-width="0.3"/>
<path d="M632.78,446.71 L627.95,439.15 L629.83,433.02 L634.58,440.47 Z" fill="none" stroke="#111" stroke-width="0.5" stroke-linejoin="round"/>
<polygon points="605.08,406.56 595.41,402.03 597.72,398.25 607.15,404.43" fill="#ffd400" stroke="#ffd400" stroke-width="0.3"/>
<path d="M605.08,406.56 L595.41,402.03 L597.72,398.25 L607.15,404.43 Z" fill="none" stroke="#111" stroke-width="0.5" stroke-linejoin="round"/>
<polygon points="627.95,439.15 623.23,429.83 625.07,425.55 629.83,433.02" fill="#eeff00" stroke="#eeff00" stroke-width="0.3"/>
<path d="M627.95,439.15 L623.23,429.83 L625.07,425.55 L629.83,433.02 Z" fill="none" stroke="#111" stroke-width="0.5" stroke-linejoin="round"/>
<polygon points="609.72,410.61 606.47,407.77 608.52,405.62 611.70,408.40" fill="#ffe900" stroke="#ffe900" stroke-width="0.3"/>
<polygon points="606.47,407.77 605.08,406.56 607.15,404.43 608.52,405.62" fill="#ffd400" stroke="#ffd400" stroke-width="0.3"/>
<path d="M609.72,410.61 L605.08,406.56 L607.15,404.43 L611.70,408.40 Z" fill="none" stroke="#111" stroke-width="0.5" stroke-linejoin="round"/>
<polygon points="623.23,429.83 620.91,425.86 623.87,423.51 625.07,425.55" fill="#eeff00" stroke="#eeff00" stroke-width="0.3"/>
<polygon points="620.91,425.86 614.36,414.67 616.37,410.64 623.87,423.51" fill="#ffe900" stroke="#ffe900" stroke-width="0.3"/>
<path d="M623.23,429.83 L614.36,414.67 L616.37,410.64 L625.07,425.55 Z" fill="none" stroke="#111" stroke-width="0.5" stroke-linejoin="round"/>
<polygon points="529.89,367.84 522.47,365.48 526.07,362.32 533.40,366.44" fill="#ffa800" stroke="#ffa800" stroke-width="0.3"/>
<path d="M529.89,367.84 L522.47,365.48 L526.07,362.32 L533.40,366.44 Z" fill="none" stroke="#111" stroke-width="0.5" stroke-linejoin="round"/>
<polygon points="614.36,414.67 609.72,410.61 611.70,408.40 616.37,410.64" fill="#ffe900" stroke="#ffe900" stroke-width="0.3"/>
<path d="M614.36,414.67 L609.72,410.61 L611.70,408.40 L616.37,410.64 Z" fill="none" stroke="#111" stroke-width="0.5" stroke-linejoin="round"/>
<polygon points="573.83,391.42 571.98,389.99 574.80,389.50" fill="#ffd400" stroke="#ffd400" stroke-width="0.3"/>
<polygon points="571.98,389.99 555.51,377.15 558.53,373.78 576.58,386.00 574.80,389.50" fill="#ffbe00" stroke="#ffbe00" stroke-width="0.3"/>
<path d="M573.83,391.42 L555.51,377.15 L558.53,373.78 L576.58,386.00 Z" fill="none" stroke="#111" stroke-width="0.5" stroke-linejoin="round"/>
<polygon points="508.68,366.19 498.90,365.51 502.90,362.35 512.56,362.99" fill="#ffa800" stroke="#ffa800" stroke-width="0.3"/>
<path d="M508.68,366.19 L498.90,365.51 L502.90,362.35 L512.56,362.99 Z" fill="none" stroke="#111" stroke-width="0.5" stroke-linejoin="round"/>
<polygon points="537.40,373.92 534.89,371.89 540.77,370.59 540.77,370.59" fill="#ffbe00" stroke="#ffbe00" stroke-width="0.3"/>
<polygon points="534.89,371.89 529.89,367.84 533.40,366.44 540.77,370.59 540.77,370.59" fill="#ffa800" stroke="#ffa800" stroke-width="0.3"/>
<path d="M537.40,373.92 L529.89,367.84 L533.40,366.44 L540.77,370.59 Z" fill="none" stroke="#111" stroke-width="0.5" stroke-linejoin="round"/>
<polygon points="583.37,399.56 573.83,391.42 574.80,389.50 579.01,388.54 585.93,395.78" fill="#ffd400" stroke="#ffd400" stroke-width="0.3"/>
<polygon points="574.80,389.50 576.58,386.00 579.01,388.54" fill="#ffbe00" stroke="#ffbe00" stroke-width="0.3"/>
<path d="M583.37,399.56 L573.83,391.42 L576.58,386.00 L585.93,395.78 Z" fill="none" stroke="#111" stroke-width="0.5" stroke-linejoin="round"/>
<polygon points="490.04,372.14 485.40,375.44 489.65,372.10 491.94,370.48" fill="#ffbe00" stroke="#ffbe00" stroke-width="0.3"/>
<polygon points="494.74,368.78 490.04,372.14 491.94,370.48 498.90,365.51" fill="#ffa800" stroke="#ffa800" stroke-width="0.3"/>
<path d="M494.74,368.78 L485.40,375.44 L489.65,372.10 L498.90,365.51 Z" fill="none" stroke="#111" stroke-width="0.5" stroke-linejoin="round"/>
<polygon points="593.01,405.94 583.37,399.56 585.93,395.78 595.41,402.03" fill="#ffd400" stroke="#ffd400" stroke-width="0.3"/>
<path d="M593.01,405.94 L583.37,399.56 L585.93,395.78 L595.41,402.03 Z" fill="none" stroke="#111" stroke-width="0.5" stroke-linejoin="round"/>
<polygon points="552.37,382.48 537.40,373.92 540.77,370.59 555.51,377.15" fill="#ffbe00" stroke="#ffbe00" stroke-width="0.3"/>
<polygon points="540.77,370.59 540.77,370.59 540.77,370.59" fill="#ffa800" stroke="#ffa800" stroke-width="0.3"/>
<path d="M552.37,382.48 L537.40,373.92 L540.77,370.59 L555.51,377.15 Z" fill="none" stroke="#111" stroke-width="0.5" stroke-linejoin="round"/>
<polygon points="481.00,378.90 472.66,381.85 477.15,378.38 485.40,375.44" fill="#ffbe00" stroke="#ffbe00" stroke-width="0.3"/>
<path d="M481.00,378.90 L472.66,381.85 L477.15,378.38 L485.40,375.44 Z" fill="none" stroke="#111" stroke-width="0.5" stroke-linejoin="round"/>
<polygon points="630.93,453.16 627.29,446.01 630.61,443.31 632.78,446.71" fill="#aaff00" stroke="#aaff00" stroke-width="0.3"/>
<polygon points="627.29,446.01 626.14,443.74 627.95,439.15 630.61,443.31" fill="#eeff00" stroke="#eeff00" stroke-width="0.3"/>
<path d="M630.93,453.16 L626.14,443.74 L627.95,439.15 L632.78,446.71 Z" fill="none" stroke="#111" stroke-width="0.5" stroke-linejoin="round"/>
<polygon points="518.74,368.76 508.68,366.19 512.56,362.99 522.47,365.48" fill="#ffa800" stroke="#ffa800" stroke-width="0.3"/>
<path d="M518.74,368.76 L508.68,366.19 L512.56,362.99 L522.47,365.48 Z" fill="none" stroke="#111" stroke-width="0.5" stroke-linejoin="round"/>
<polygon points="626.14,443.74 621.32,434.27 623.23,429.83 627.95,439.15" fill="#eeff00" stroke="#eeff00" stroke-width="0.3"/>
<path d="M626.14,443.74 L621.32,434.27 L623.23,429.83 L627.95,439.15 Z" fill="none" stroke="#111" stroke-width="0.5" stroke-linejoin="round"/>
<polygon points="602.85,410.58 600.87,409.65 603.75,408.95" fill="#ffe900" stroke="#ffe900" stroke-width="0.3"/>
<polygon points="600.87,409.65 593.01,405.94 595.41,402.03 605.08,406.56 603.75,408.95" fill="#ffd400" stroke="#ffd400" stroke-width="0.3"/>
<path d="M602.85,410.58 L593.01,405.94 L595.41,402.03 L605.08,406.56 Z" fill="none" stroke="#111" stroke-width="0.5" stroke-linejoin="round"/>
<polygon points="621.32,434.27 618.25,428.36 620.91,425.86 623.23,429.83" fill="#eeff00" stroke="#eeff00" stroke-width="0.3"/>
<polygon points="618.25,428.36 612.39,417.04 614.36,414.67 620.91,425.86" fill="#ffe900" stroke="#ffe900" stroke-width="0.3"/>
<path d="M621.32,434.27 L612.39,417.04 L614.36,414.67 L623.23,429.83 Z" fill="none" stroke="#111" stroke-width="0.5" stroke-linejoin="round"/>
<polygon points="607.65,412.90 602.85,410.58 603.75,408.95 606.47,407.77 609.72,410.61" fill="#ffe900" stroke="#ffe900" stroke-width="0.3"/>
<polygon points="603.75,408.95 605.08,406.56 606.47,407.77" fill="#ffd400" stroke="#ffd400" stroke-width="0.3"/>
<path d="M607.65,412.90 L602.85,410.58 L605.08,406.56 L609.72,410.61 Z" fill="none" stroke="#111" stroke-width="0.5" stroke-linejoin="round"/>
<polygon points="571.01,395.19 565.70,391.57 571.98,389.99 573.83,391.42" fill="#ffd400" stroke="#ffd400" stroke-width="0.3"/>
<polygon points="565.70,391.57 552.37,382.48 555.51,377.15 571.98,389.99" fill="#ffbe00" stroke="#ffbe00" stroke-width="0.3"/>
<path d="M571.01,395.19 L552.37,382.48 L555.51,377.15 L573.83,391.42 Z" fill="none" stroke="#111" stroke-width="0.5" stroke-linejoin="round"/>
<polygon points="526.27,371.17 518.74,368.76 522.47,365.48 529.89,367.84" fill="#ffa800" stroke="#ffa800" stroke-width="0.3"/>
<path d="M526.27,371.17 L518.74,368.76 L522.47,365.48 L529.89,367.84 Z" fill="none" stroke="#111" stroke-width="0.5" stroke-linejoin="round"/>
<polygon points="612.39,417.04 607.65,412.90 609.72,410.61 614.36,414.67" fill="#ffe900" stroke="#ffe900" stroke-width="0.3"/>
<path d="M612.39,417.04 L607.65,412.90 L609.72,410.61 L614.36,414.67 Z" fill="none" stroke="#111" stroke-width="0.5" stroke-linejoin="round"/>
<polygon points="504.67,369.51 494.74,368.78 498.90,365.51 508.68,366.19" fill="#ffa800" stroke="#ffa800" stroke-width="0.3"/>
<path d="M504.67,369.51 L494.74,368.78 L498.90,365.51 L508.68,366.19 Z" fill="none" stroke="#111" stroke-width="0.5" stroke-linejoin="round"/>
<polygon points="533.92,377.38 528.82,373.24 534.89,371.89 537.40,373.92" fill="#ffbe00" stroke="#ffbe00" stroke-width="0.3"/>
<polygon points="528.82,373.24 526.27,371.17 529.89,367.84 534.89,371.89" fill="#ffa800" stroke="#ffa800" stroke-width="0.3"/>
<path d="M533.92,377.38 L526.27,371.17 L529.89,367.84 L537.40,373.92 Z" fill="none" stroke="#111" stroke-width="0.5" stroke-linejoin="round"/>
<polygon points="580.72,403.49 571.01,395.19 573.83,391.42 583.37,399.56" fill="#ffd400" stroke="#ffd400" stroke-width="0.3"/>
<path d="M580.72,403.49 L571.01,395.19 L573.83,391.42 L583.37,399.56 Z" fill="none" stroke="#111" stroke-width="0.5" stroke-linejoin="round"/>
<polygon points="490.54,374.07 481.00,378.90 485.40,375.44 490.04,372.14 490.54,374.07" fill="#ffbe00" stroke="#ffbe00" stroke-width="0.3"/>
<polygon points="490.54,374.07 490.54,374.07 490.04,372.14 494.74,368.78" fill="#ffa800" stroke="#ffa800" stroke-width="0.3"/>
<path d="M490.54,374.07 L481.00,378.90 L485.40,375.44 L494.74,368.78 Z" fill="none" stroke="#111" stroke-width="0.5" stroke-linejoin="round"/>
<polygon points="590.52,410.00 580.72,403.49 583.37,399.56 593.01,405.94" fill="#ffd400" stroke="#ffd400" stroke-width="0.3"/>
<path d="M590.52,410.00 L580.72,403.49 L583.37,399.56 L593.01,405.94 Z" fill="none" stroke="#111" stroke-width="0.5" stroke-linejoin="round"/>
<polygon points="476.56,384.37 468.26,389.15 472.66,381.85 481.00,378.90" fill="#ffbe00" stroke="#ffbe00" stroke-width="0.3"/>
<path d="M476.56,384.37 L468.26,389.15 L472.66,381.85 L481.00,378.90 Z" fill="none" stroke="#111" stroke-width="0.5" stroke-linejoin="round"/>
<polygon points="549.13,386.12 533.92,377.38 537.40,373.92 552.37,382.48" fill="#ffbe00" stroke="#ffbe00" stroke-width="0.3"/>
<path d="M549.13,386.12 L533.92,377.38 L537.40,373.92 L552.37,382.48 Z" fill="none" stroke="#111" stroke-width="0.5" stroke-linejoin="round"/>
<polygon points="629.01,459.82 624.41,448.88 627.29,446.01 630.93,453.16" fill="#aaff00" stroke="#aaff00" stroke-width="0.3"/>
<polygon points="624.41,448.88 624.26,448.50 626.14,443.74 627.29,446.01" fill="#eeff00" stroke="#eeff00" stroke-width="0.3"/>
<path d="M629.01,459.82 L624.26,448.50 L626.14,443.74 L630.93,453.16 Z" fill="none" stroke="#111" stroke-width="0.5" stroke-linejoin="round"/>
<polygon points="514.88,372.15 504.67,369.51 508.68,366.19 518.74,368.76" fill="#ffa800" stroke="#ffa800" stroke-width="0.3"/>
<path d="M514.88,372.15 L504.67,369.51 L508.68,366.19 L518.74,368.76 Z" fill="none" stroke="#111" stroke-width="0.5" stroke-linejoin="round"/>
<polygon points="624.26,448.50 619.34,438.87 621.32,434.27 626.14,443.74" fill="#eeff00" stroke="#eeff00" stroke-width="0.3"/>
<path d="M624.26,448.50 L619.34,438.87 L621.32,434.27 L626.14,443.74 Z" fill="none" stroke="#111" stroke-width="0.5" stroke-linejoin="round"/>
<polygon points="600.61,412.91 596.56,411.74 600.87,409.65 602.85,410.58" fill="#ffe900" stroke="#ffe900" stroke-width="0.3"/>
<polygon points="596.56,411.74 590.52,410.00 593.01,405.94 600.87,409.65" fill="#ffd400" stroke="#ffd400" stroke-width="0.3"/>
<path d="M600.61,412.91 L590.52,410.00 L593.01,405.94 L602.85,410.58 Z" fill="none" stroke="#111" stroke-width="0.5" stroke-linejoin="round"/>
<polygon points="568.06,400.96 558.02,393.09 565.70,391.57 571.01,395.19" fill="#ffd400" stroke="#ffd400" stroke-width="0.3"/>
<polygon points="558.02,393.09 549.13,386.12 552.37,382.48 565.70,391.57" fill="#ffbe00" stroke="#ffbe00" stroke-width="0.3"/>
<path d="M568.06,400.96 L549.13,386.12 L552.37,382.48 L571.01,395.19 Z" fill="none" stroke="#111" stroke-width="0.5" stroke-linejoin="round"/>
<polygon points="522.53,374.63 522.53,374.63 522.53,374.63" fill="#ffbe00" stroke="#ffbe00" stroke-width="0.3"/>
<polygon points="522.53,374.63 514.88,372.15 518.74,368.76 526.27,371.17" fill="#ffa800" stroke="#ffa800" stroke-width="0.3"/>
<path d="M522.53,374.63 L514.88,372.15 L518.74,368.76 L526.27,371.17 Z" fill="none" stroke="#111" stroke-width="0.5" stroke-linejoin="round"/>
<polygon points="619.34,438.87 615.67,430.97 618.25,428.36 621.32,434.27" fill="#eeff00" stroke="#eeff00" stroke-width="0.3"/>
<polygon points="615.67,430.97 610.33,419.52 612.39,417.04 618.25,428.36" fill="#ffe900" stroke="#ffe900" stroke-width="0.3"/>
<path d="M619.34,438.87 L610.33,419.52 L612.39,417.04 L621.32,434.27 Z" fill="none" stroke="#111" stroke-width="0.5" stroke-linejoin="round"/>
<polygon points="605.42,417.12 600.61,412.91 602.85,410.58 607.65,412.90" fill="#ffe900" stroke="#ffe900" stroke-width="0.3"/>
<path d="M605.42,417.12 L600.61,412.91 L602.85,410.58 L607.65,412.90 Z" fill="none" stroke="#111" stroke-width="0.5" stroke-linejoin="round"/>
<polygon points="490.54,374.07 490.54,374.07 490.54,374.07" fill="#ffbe00" stroke="#ffbe00" stroke-width="0.3"/>
<polygon points="500.50,372.95 490.54,374.07 494.74,368.78 504.67,369.51" fill="#ffa800" stroke="#ffa800" stroke-width="0.3"/>
<path d="M500.50,372.95 L490.54,374.07 L494.74,368.78 L504.67,369.51 Z" fill="none" stroke="#111" stroke-width="0.5" stroke-linejoin="round"/>
<polygon points="610.33,419.52 605.42,417.12 607.65,412.90 612.39,417.04" fill="#ffe900" stroke="#ffe900" stroke-width="0.3"/>
<path d="M610.33,419.52 L605.42,417.12 L607.65,412.90 L612.39,417.04 Z" fill="none" stroke="#111" stroke-width="0.5" stroke-linejoin="round"/>
<polygon points="577.92,409.42 568.06,400.96 571.01,395.19 580.72,403.49" fill="#ffd400" stroke="#ffd400" stroke-width="0.3"/>
<path d="M577.92,409.42 L568.06,400.96 L571.01,395.19 L580.72,403.49 Z" fill="none" stroke="#111" stroke-width="0.5" stroke-linejoin="round"/>
<polygon points="530.30,380.96 522.53,374.63 522.53,374.63 528.82,373.24 533.92,377.38" fill="#ffbe00" stroke="#ffbe00" stroke-width="0.3"/>
<polygon points="522.53,374.63 522.53,374.63 526.27,371.17 528.82,373.24" fill="#ffa800" stroke="#ffa800" stroke-width="0.3"/>
<path d="M530.30,380.96 L522.53,374.63 L526.27,371.17 L533.92,377.38 Z" fill="none" stroke="#111" stroke-width="0.5" stroke-linejoin="round"/>
<polygon points="486.08,377.62 476.56,384.37 481.00,378.90 490.54,374.07" fill="#ffbe00" stroke="#ffbe00" stroke-width="0.3"/>
<polygon points="490.54,374.07 490.54,374.07 490.54,374.07" fill="#ffa800" stroke="#ffa800" stroke-width="0.3"/>
<path d="M486.08,377.62 L476.56,384.37 L481.00,378.90 L490.54,374.07 Z" fill="none" stroke="#111" stroke-width="0.5" stroke-linejoin="round"/>
<polygon points="468.44,394.00 463.74,396.67 466.32,392.38" fill="#ffd400" stroke="#ffd400" stroke-width="0.3"/>
<polygon points="472.09,391.93 468.44,394.00 466.32,392.38 468.26,389.15 476.56,384.37" fill="#ffbe00" stroke="#ffbe00" stroke-width="0.3"/>
<path d="M472.09,391.93 L463.74,396.67 L468.26,389.15 L476.56,384.37 Z" fill="none" stroke="#111" stroke-width="0.5" stroke-linejoin="round"/>
<polygon points="587.95,414.21 585.93,413.25 588.99,412.51" fill="#ffe900" stroke="#ffe900" stroke-width="0.3"/>
<polygon points="585.93,413.25 577.92,409.42 580.72,403.49 590.52,410.00 588.99,412.51" fill="#ffd400" stroke="#ffd400" stroke-width="0.3"/>
<path d="M587.95,414.21 L577.92,409.42 L580.72,403.49 L590.52,410.00 Z" fill="none" stroke="#111" stroke-width="0.5" stroke-linejoin="round"/>
<polygon points="627.03,466.70 622.18,455.23 624.05,449.16 624.41,448.88 629.01,459.82" fill="#aaff00" stroke="#aaff00" stroke-width="0.3"/>
<polygon points="624.05,449.16 624.26,448.50 624.41,448.88" fill="#eeff00" stroke="#eeff00" stroke-width="0.3"/>
<path d="M627.03,466.70 L622.18,455.23 L624.26,448.50 L629.01,459.82 Z" fill="none" stroke="#111" stroke-width="0.5" stroke-linejoin="round"/>
<polygon points="545.78,391.80 530.30,380.96 533.92,377.38 549.13,386.12" fill="#ffbe00" stroke="#ffbe00" stroke-width="0.3"/>
<path d="M545.78,391.80 L530.30,380.96 L533.92,377.38 L549.13,386.12 Z" fill="none" stroke="#111" stroke-width="0.5" stroke-linejoin="round"/>
<polygon points="510.87,375.67 510.87,375.67 510.87,375.67" fill="#ffbe00" stroke="#ffbe00" stroke-width="0.3"/>
<polygon points="510.87,375.67 500.50,372.95 504.67,369.51 514.88,372.15" fill="#ffa800" stroke="#ffa800" stroke-width="0.3"/>
<path d="M510.87,375.67 L500.50,372.95 L504.67,369.51 L514.88,372.15 Z" fill="none" stroke="#111" stroke-width="0.5" stroke-linejoin="round"/>
<polygon points="622.18,455.23 620.39,451.72 624.05,449.16" fill="#aaff00" stroke="#aaff00" stroke-width="0.3"/>
<polygon points="620.39,451.72 617.18,445.45 619.34,438.87 624.26,448.50 624.05,449.16" fill="#eeff00" stroke="#eeff00" stroke-width="0.3"/>
<path d="M622.18,455.23 L617.18,445.45 L619.34,438.87 L624.26,448.50 Z" fill="none" stroke="#111" stroke-width="0.5" stroke-linejoin="round"/>
<polygon points="598.20,417.21 587.95,414.21 588.99,412.51 596.56,411.74 600.61,412.91" fill="#ffe900" stroke="#ffe900" stroke-width="0.3"/>
<polygon points="588.99,412.51 590.52,410.00 596.56,411.74" fill="#ffd400" stroke="#ffd400" stroke-width="0.3"/>
<path d="M598.20,417.21 L587.95,414.21 L590.52,410.00 L600.61,412.91 Z" fill="none" stroke="#111" stroke-width="0.5" stroke-linejoin="round"/>
<polygon points="565.01,406.93 549.33,394.59 558.02,393.09 568.06,400.96" fill="#ffd400" stroke="#ffd400" stroke-width="0.3"/>
<polygon points="549.33,394.59 545.78,391.80 549.13,386.12 558.02,393.09" fill="#ffbe00" stroke="#ffbe00" stroke-width="0.3"/>
<path d="M565.01,406.93 L545.78,391.80 L549.13,386.12 L568.06,400.96 Z" fill="none" stroke="#111" stroke-width="0.5" stroke-linejoin="round"/>
<polygon points="617.18,445.45 611.60,433.51 615.67,430.97 619.34,438.87" fill="#eeff00" stroke="#eeff00" stroke-width="0.3"/>
<polygon points="611.60,433.51 608.00,425.82 610.33,419.52 615.67,430.97" fill="#ffe900" stroke="#ffe900" stroke-width="0.3"/>
<path d="M617.18,445.45 L608.00,425.82 L610.33,419.52 L619.34,438.87 Z" fill="none" stroke="#111" stroke-width="0.5" stroke-linejoin="round"/>
<polygon points="518.64,378.22 510.87,375.67 510.87,375.67 522.53,374.63 522.53,374.63" fill="#ffbe00" stroke="#ffbe00" stroke-width="0.3"/>
<polygon points="510.87,375.67 510.87,375.67 514.88,372.15 522.53,374.63 522.53,374.63" fill="#ffa800" stroke="#ffa800" stroke-width="0.3"/>
<path d="M518.64,378.22 L510.87,375.67 L514.88,372.15 L522.53,374.63 Z" fill="none" stroke="#111" stroke-width="0.5" stroke-linejoin="round"/>
<polygon points="603.09,421.51 598.20,417.21 600.61,412.91 605.42,417.12" fill="#ffe900" stroke="#ffe900" stroke-width="0.3"/>
<path d="M603.09,421.51 L598.20,417.21 L600.61,412.91 L605.42,417.12 Z" fill="none" stroke="#111" stroke-width="0.5" stroke-linejoin="round"/>
<polygon points="496.18,376.52 486.08,377.62 490.54,374.07 490.54,374.07 496.18,376.52" fill="#ffbe00" stroke="#ffbe00" stroke-width="0.3"/>
<polygon points="496.18,376.52 496.18,376.52 490.54,374.07 490.54,374.07 500.50,372.95" fill="#ffa800" stroke="#ffa800" stroke-width="0.3"/>
<path d="M496.18,376.52 L486.08,377.62 L490.54,374.07 L500.50,372.95 Z" fill="none" stroke="#111" stroke-width="0.5" stroke-linejoin="round"/>
<polygon points="608.00,425.82 603.09,421.51 605.42,417.12 610.33,419.52" fill="#ffe900" stroke="#ffe900" stroke-width="0.3"/>
<path d="M608.00,425.82 L603.09,421.51 L605.42,417.12 L610.33,419.52 Z" fill="none" stroke="#111" stroke-width="0.5" stroke-linejoin="round"/>
<polygon points="467.63,401.63 459.07,404.43 463.74,396.67 468.44,394.00 470.66,395.05" fill="#ffd400" stroke="#ffd400" stroke-width="0.3"/>
<polygon points="468.44,394.00 472.09,391.93 470.66,395.05" fill="#ffbe00" stroke="#ffbe00" stroke-width="0.3"/>
<path d="M467.63,401.63 L459.07,404.43 L463.74,396.67 L472.09,391.93 Z" fill="none" stroke="#111" stroke-width="0.5" stroke-linejoin="round"/>
<polygon points="575.08,413.67 565.01,406.93 568.06,400.96 577.92,409.42" fill="#ffd400" stroke="#ffd400" stroke-width="0.3"/>
<path d="M575.08,413.67 L565.01,406.93 L568.06,400.96 L577.92,409.42 Z" fill="none" stroke="#111" stroke-width="0.5" stroke-linejoin="round"/>
<polygon points="481.81,387.14 472.09,391.93 476.56,384.37 486.08,377.62" fill="#ffbe00" stroke="#ffbe00" stroke-width="0.3"/>
<path d="M481.81,387.14 L472.09,391.93 L476.56,384.37 L486.08,377.62 Z" fill="none" stroke="#111" stroke-width="0.5" stroke-linejoin="round"/>
<polygon points="526.55,384.68 518.64,378.22 522.53,374.63 530.30,380.96" fill="#ffbe00" stroke="#ffbe00" stroke-width="0.3"/>
<polygon points="522.53,374.63 522.53,374.63 522.53,374.63" fill="#ffa800" stroke="#ffa800" stroke-width="0.3"/>
<path d="M526.55,384.68 L518.64,378.22 L522.53,374.63 L530.30,380.96 Z" fill="none" stroke="#111" stroke-width="0.5" stroke-linejoin="round"/>
<polygon points="624.98,473.83 624.64,472.87 625.50,472.02" fill="#77ff00" stroke="#77ff00" stroke-width="0.3"/>
<polygon points="624.64,472.87 620.16,460.38 622.18,455.23 627.03,466.70 625.50,472.02" fill="#aaff00" stroke="#aaff00" stroke-width="0.3"/>
<path d="M624.98,473.83 L620.16,460.38 L622.18,455.23 L627.03,466.70 Z" fill="none" stroke="#111" stroke-width="0.5" stroke-linejoin="round"/>
<polygon points="585.33,416.70 581.21,415.48 585.93,413.25 587.95,414.21" fill="#ffe900" stroke="#ffe900" stroke-width="0.3"/>
<polygon points="581.21,415.48 575.08,413.67 577.92,409.42 585.93,413.25" fill="#ffd400" stroke="#ffd400" stroke-width="0.3"/>
<path d="M585.33,416.70 L575.08,413.67 L577.92,409.42 L587.95,414.21 Z" fill="none" stroke="#111" stroke-width="0.5" stroke-linejoin="round"/>
<polygon points="542.30,395.75 526.55,384.68 530.30,380.96 545.78,391.80" fill="#ffbe00" stroke="#ffbe00" stroke-width="0.3"/>
<path d="M542.30,395.75 L526.55,384.68 L530.30,380.96 L545.78,391.80 Z" fill="none" stroke="#111" stroke-width="0.5" stroke-linejoin="round"/>
<polygon points="506.78,381.29 496.18,376.52 496.18,376.52 510.87,375.67 510.87,375.67" fill="#ffbe00" stroke="#ffbe00" stroke-width="0.3"/>
<polygon points="496.18,376.52 496.18,376.52 500.50,372.95 510.87,375.67 510.87,375.67" fill="#ffa800" stroke="#ffa800" stroke-width="0.3"/>
<path d="M506.78,381.29 L496.18,376.52 L500.50,372.95 L510.87,375.67 Z" fill="none" stroke="#111" stroke-width="0.5" stroke-linejoin="round"/>
<polygon points="620.16,460.38 617.30,454.82 620.39,451.72 622.18,455.23" fill="#aaff00" stroke="#aaff00" stroke-width="0.3"/>
<polygon points="617.30,454.82 615.05,450.43 617.18,445.45 620.39,451.72" fill="#eeff00" stroke="#eeff00" stroke-width="0.3"/>
<path d="M620.16,460.38 L615.05,450.43 L617.18,445.45 L622.18,455.23 Z" fill="none" stroke="#111" stroke-width="0.5" stroke-linejoin="round"/>
<polygon points="561.87,411.20 543.13,396.41 549.33,394.59 565.01,406.93" fill="#ffd400" stroke="#ffd400" stroke-width="0.3"/>
<polygon points="543.13,396.41 542.30,395.75 545.78,391.80 549.33,394.59" fill="#ffbe00" stroke="#ffbe00" stroke-width="0.3"/>
<path d="M561.87,411.20 L542.30,395.75 L545.78,391.80 L565.01,406.93 Z" fill="none" stroke="#111" stroke-width="0.5" stroke-linejoin="round"/>
<polygon points="595.77,419.77 585.33,416.70 587.95,414.21 598.20,417.21" fill="#ffe900" stroke="#ffe900" stroke-width="0.3"/>
<path d="M595.77,419.77 L585.33,416.70 L587.95,414.21 L598.20,417.21 Z" fill="none" stroke="#111" stroke-width="0.5" stroke-linejoin="round"/>
<polygon points="492.10,388.10 481.81,387.14 486.08,377.62 496.18,376.52" fill="#ffbe00" stroke="#ffbe00" stroke-width="0.3"/>
<polygon points="496.18,376.52 496.18,376.52 496.18,376.52" fill="#ffa800" stroke="#ffa800" stroke-width="0.3"/>
<path d="M492.10,388.10 L481.81,387.14 L486.08,377.62 L496.18,376.52 Z" fill="none" stroke="#111" stroke-width="0.5" stroke-linejoin="round"/>
<polygon points="477.53,398.87 467.63,401.63 470.66,395.05 478.14,397.21" fill="#ffd400" stroke="#ffd400" stroke-width="0.3"/>
<polygon points="470.66,395.05 472.09,391.93 481.81,387.14 478.14,397.21" fill="#ffbe00" stroke="#ffbe00" stroke-width="0.3"/>
<path d="M477.53,398.87 L467.63,401.63 L472.09,391.93 L481.81,387.14 Z" fill="none" stroke="#111" stroke-width="0.5" stroke-linejoin="round"/>
<polygon points="463.04,411.60 454.26,412.42 459.07,404.43 467.63,401.63" fill="#ffd400" stroke="#ffd400" stroke-width="0.3"/>
<path d="M463.04,411.60 L454.26,412.42 L459.07,404.43 L467.63,401.63 Z" fill="none" stroke="#111" stroke-width="0.5" stroke-linejoin="round"/>
<polygon points="514.66,383.91 506.78,381.29 510.87,375.67 518.64,378.22" fill="#ffbe00" stroke="#ffbe00" stroke-width="0.3"/>
<polygon points="510.87,375.67 510.87,375.67 510.87,375.67" fill="#ffa800" stroke="#ffa800" stroke-width="0.3"/>
<path d="M514.66,383.91 L506.78,381.29 L510.87,375.67 L518.64,378.22 Z" fill="none" stroke="#111" stroke-width="0.5" stroke-linejoin="round"/>
<polygon points="615.05,450.43 609.08,436.37 611.60,433.51 617.18,445.45" fill="#eeff00" stroke="#eeff00" stroke-width="0.3"/>
<polygon points="609.08,436.37 605.78,428.57 608.00,425.82 611.60,433.51" fill="#ffe900" stroke="#ffe900" stroke-width="0.3"/>
<path d="M615.05,450.43 L605.78,428.57 L608.00,425.82 L617.18,445.45 Z" fill="none" stroke="#111" stroke-width="0.5" stroke-linejoin="round"/>
<polygon points="600.77,424.17 595.77,419.77 598.20,417.21 603.09,421.51" fill="#ffe900" stroke="#ffe900" stroke-width="0.3"/>
<path d="M600.77,424.17 L595.77,419.77 L598.20,417.21 L603.09,421.51 Z" fill="none" stroke="#111" stroke-width="0.5" stroke-linejoin="round"/>
<polygon points="572.08,419.99 568.50,416.91 574.19,415.54" fill="#ffe900" stroke="#ffe900" stroke-width="0.3"/>
<polygon points="568.50,416.91 561.87,411.20 565.01,406.93 575.08,413.67 574.19,415.54" fill="#ffd400" stroke="#ffd400" stroke-width="0.3"/>
<path d="M572.08,419.99 L561.87,411.20 L565.01,406.93 L575.08,413.67 Z" fill="none" stroke="#111" stroke-width="0.5" stroke-linejoin="round"/>
<polygon points="605.78,428.57 600.77,424.17 603.09,421.51 608.00,425.82" fill="#ffe900" stroke="#ffe900" stroke-width="0.3"/>
<path d="M605.78,428.57 L600.77,424.17 L603.09,421.51 L608.00,425.82 Z" fill="none" stroke="#111" stroke-width="0.5" stroke-linejoin="round"/>
<polygon points="522.65,388.54 514.66,383.91 518.64,378.22 526.55,384.68" fill="#ffbe00" stroke="#ffbe00" stroke-width="0.3"/>
<path d="M522.65,388.54 L514.66,383.91 L518.64,378.22 L526.55,384.68 Z" fill="none" stroke="#111" stroke-width="0.5" stroke-linejoin="round"/>
<polygon points="622.98,479.40 621.93,476.48 624.64,472.87 624.98,473.83" fill="#77ff00" stroke="#77ff00" stroke-width="0.3"/>
<polygon points="621.93,476.48 618.05,465.73 620.16,460.38 624.64,472.87" fill="#aaff00" stroke="#aaff00" stroke-width="0.3"/>
<path d="M622.98,479.40 L618.05,465.73 L620.16,460.38 L624.98,473.83 Z" fill="none" stroke="#111" stroke-width="0.5" stroke-linejoin="round"/>
<polygon points="582.49,423.12 572.08,419.99 574.19,415.54 581.21,415.48 585.33,416.70" fill="#ffe900" stroke="#ffe900" stroke-width="0.3"/>
<polygon points="574.19,415.54 575.08,413.67 581.21,415.48" fill="#ffd400" stroke="#ffd400" stroke-width="0.3"/>
<path d="M582.49,423.12 L572.08,419.99 L575.08,413.67 L585.33,416.70 Z" fill="none" stroke="#111" stroke-width="0.5" stroke-linejoin="round"/>
<polygon points="502.63,389.08 492.10,388.10 496.18,376.52 506.78,381.29" fill="#ffbe00" stroke="#ffbe00" stroke-width="0.3"/>
<polygon points="496.18,376.52 496.18,376.52 496.18,376.52" fill="#ffa800" stroke="#ffa800" stroke-width="0.3"/>
<path d="M502.63,389.08 L492.10,388.10 L496.18,376.52 L506.78,381.29 Z" fill="none" stroke="#111" stroke-width="0.5" stroke-linejoin="round"/>
<polygon points="538.70,401.81 534.14,398.03 541.77,396.64" fill="#ffd400" stroke="#ffd400" stroke-width="0.3"/>
<polygon points="534.14,398.03 522.65,388.54 526.55,384.68 542.30,395.75 541.77,396.64" fill="#ffbe00" stroke="#ffbe00" stroke-width="0.3"/>
<path d="M538.70,401.81 L522.65,388.54 L526.55,384.68 L542.30,395.75 Z" fill="none" stroke="#111" stroke-width="0.5" stroke-linejoin="round"/>
<polygon points="487.90,399.97 477.53,398.87 478.14,397.21 488.50,398.29" fill="#ffd400" stroke="#ffd400" stroke-width="0.3"/>
<polygon points="478.14,397.21 481.81,387.14 492.10,388.10 488.50,398.29" fill="#ffbe00" stroke="#ffbe00" stroke-width="0.3"/>
<path d="M487.90,399.97 L477.53,398.87 L481.81,387.14 L492.10,388.10 Z" fill="none" stroke="#111" stroke-width="0.5" stroke-linejoin="round"/>
<polygon points="473.02,408.95 463.04,411.60 467.63,401.63 477.53,398.87" fill="#ffd400" stroke="#ffd400" stroke-width="0.3"/>
<path d="M473.02,408.95 L463.04,411.60 L467.63,401.63 L477.53,398.87 Z" fill="none" stroke="#111" stroke-width="0.5" stroke-linejoin="round"/>
<polygon points="618.05,465.73 614.10,458.04 617.30,454.82 620.16,460.38" fill="#aaff00" stroke="#aaff00" stroke-width="0.3"/>
<polygon points="614.10,458.04 612.84,455.61 615.05,450.43 617.30,454.82" fill="#eeff00" stroke="#eeff00" stroke-width="0.3"/>
<path d="M618.05,465.73 L612.84,455.61 L615.05,450.43 L620.16,460.38 Z" fill="none" stroke="#111" stroke-width="0.5" stroke-linejoin="round"/>
<polygon points="458.16,419.93 449.12,418.76 450.16,417.47 458.82,418.81" fill="#ffe900" stroke="#ffe900" stroke-width="0.3"/>
<polygon points="450.16,417.47 454.26,412.42 463.04,411.60 458.82,418.81" fill="#ffd400" stroke="#ffd400" stroke-width="0.3"/>
<path d="M458.16,419.93 L449.12,418.76 L454.26,412.42 L463.04,411.60 Z" fill="none" stroke="#111" stroke-width="0.5" stroke-linejoin="round"/>
<polygon points="558.59,417.57 538.70,401.81 541.77,396.64 543.13,396.41 561.87,411.20" fill="#ffd400" stroke="#ffd400" stroke-width="0.3"/>
<polygon points="541.77,396.64 542.30,395.75 543.13,396.41" fill="#ffbe00" stroke="#ffbe00" stroke-width="0.3"/>
<path d="M558.59,417.57 L538.70,401.81 L542.30,395.75 L561.87,411.20 Z" fill="none" stroke="#111" stroke-width="0.5" stroke-linejoin="round"/>
<polygon points="510.61,391.79 502.63,389.08 506.78,381.29 514.66,383.91" fill="#ffbe00" stroke="#ffbe00" stroke-width="0.3"/>
<path d="M510.61,391.79 L502.63,389.08 L506.78,381.29 L514.66,383.91 Z" fill="none" stroke="#111" stroke-width="0.5" stroke-linejoin="round"/>
<polygon points="593.10,426.31 582.49,423.12 585.33,416.70 595.77,419.77" fill="#ffe900" stroke="#ffe900" stroke-width="0.3"/>
<path d="M593.10,426.31 L582.49,423.12 L585.33,416.70 L595.77,419.77 Z" fill="none" stroke="#111" stroke-width="0.5" stroke-linejoin="round"/>
<polygon points="612.84,455.61 605.88,439.27 609.08,436.37 615.05,450.43" fill="#eeff00" stroke="#eeff00" stroke-width="0.3"/>
<polygon points="605.88,439.27 603.36,433.36 605.78,428.57 609.08,436.37" fill="#ffe900" stroke="#ffe900" stroke-width="0.3"/>
<path d="M612.84,455.61 L603.36,433.36 L605.78,428.57 L615.05,450.43 Z" fill="none" stroke="#111" stroke-width="0.5" stroke-linejoin="round"/>
<polygon points="518.82,400.48 517.39,398.96 519.37,398.79" fill="#ffd400" stroke="#ffd400" stroke-width="0.3"/>
<polygon points="517.39,398.96 510.61,391.79 514.66,383.91 522.65,388.54 519.37,398.79" fill="#ffbe00" stroke="#ffbe00" stroke-width="0.3"/>
<path d="M518.82,400.48 L510.61,391.79 L514.66,383.91 L522.65,388.54 Z" fill="none" stroke="#111" stroke-width="0.5" stroke-linejoin="round"/>
<polygon points="569.01,424.61 560.67,418.97 568.50,416.91 572.08,419.99" fill="#ffe900" stroke="#ffe900" stroke-width="0.3"/>
<polygon points="560.67,418.97 558.59,417.57 561.87,411.20 568.50,416.91" fill="#ffd400" stroke="#ffd400" stroke-width="0.3"/>
<path d="M569.01,424.61 L558.59,417.57 L561.87,411.20 L572.08,419.99 Z" fill="none" stroke="#111" stroke-width="0.5" stroke-linejoin="round"/>
<polygon points="598.26,428.87 593.10,426.31 595.77,419.77 600.77,424.17" fill="#ffe900" stroke="#ffe900" stroke-width="0.3"/>
<path d="M598.26,428.87 L593.10,426.31 L595.77,419.77 L600.77,424.17 Z" fill="none" stroke="#111" stroke-width="0.5" stroke-linejoin="round"/>
<polygon points="498.53,401.08 487.90,399.97 488.50,398.29 499.11,399.39" fill="#ffd400" stroke="#ffd400" stroke-width="0.3"/>
<polygon points="488.50,398.29 492.10,388.10 502.63,389.08 499.11,399.39" fill="#ffbe00" stroke="#ffbe00" stroke-width="0.3"/>
<path d="M498.53,401.08 L487.90,399.97 L492.10,388.10 L502.63,389.08 Z" fill="none" stroke="#111" stroke-width="0.5" stroke-linejoin="round"/>
<polygon points="603.36,433.36 598.26,428.87 600.77,424.17 605.78,428.57" fill="#ffe900" stroke="#ffe900" stroke-width="0.3"/>
<path d="M603.36,433.36 L598.26,428.87 L600.77,424.17 L605.78,428.57 Z" fill="none" stroke="#111" stroke-width="0.5" stroke-linejoin="round"/>
<polygon points="483.61,412.13 473.02,408.95 477.53,398.87 487.90,399.97" fill="#ffd400" stroke="#ffd400" stroke-width="0.3"/>
<path d="M483.61,412.13 L473.02,408.95 L477.53,398.87 L487.90,399.97 Z" fill="none" stroke="#111" stroke-width="0.5" stroke-linejoin="round"/>
<polygon points="535.00,410.05 518.82,400.48 519.37,398.79 534.14,398.03 538.70,401.81" fill="#ffd400" stroke="#ffd400" stroke-width="0.3"/>
<polygon points="519.37,398.79 522.65,388.54 534.14,398.03" fill="#ffbe00" stroke="#ffbe00" stroke-width="0.3"/>
<path d="M535.00,410.05 L518.82,400.48 L522.65,388.54 L538.70,401.81 Z" fill="none" stroke="#111" stroke-width="0.5" stroke-linejoin="round"/>
<polygon points="468.52,421.28 458.16,419.93 458.82,418.81 468.88,420.28" fill="#ffe900" stroke="#ffe900" stroke-width="0.3"/>
<polygon points="458.82,418.81 463.04,411.60 473.02,408.95 468.88,420.28" fill="#ffd400" stroke="#ffd400" stroke-width="0.3"/>
<path d="M468.52,421.28 L458.16,419.93 L463.04,411.60 L473.02,408.95 Z" fill="none" stroke="#111" stroke-width="0.5" stroke-linejoin="round"/>
<polygon points="579.55,429.78 569.01,424.61 572.08,419.99 582.49,423.12" fill="#ffe900" stroke="#ffe900" stroke-width="0.3"/>
<path d="M579.55,429.78 L569.01,424.61 L572.08,419.99 L582.49,423.12 Z" fill="none" stroke="#111" stroke-width="0.5" stroke-linejoin="round"/>
<polygon points="620.78,487.01 618.64,480.17 621.93,476.48 622.98,479.40" fill="#77ff00" stroke="#77ff00" stroke-width="0.3"/>
<polygon points="618.64,480.17 615.87,471.28 618.05,465.73 621.93,476.48" fill="#aaff00" stroke="#aaff00" stroke-width="0.3"/>
<path d="M620.78,487.01 L615.87,471.28 L618.05,465.73 L622.98,479.40 Z" fill="none" stroke="#111" stroke-width="0.5" stroke-linejoin="round"/>
<polygon points="506.58,403.91 498.53,401.08 499.11,399.39 507.96,399.76" fill="#ffd400" stroke="#ffd400" stroke-width="0.3"/>
<polygon points="499.11,399.39 502.63,389.08 510.61,391.79 507.96,399.76" fill="#ffbe00" stroke="#ffbe00" stroke-width="0.3"/>
<path d="M506.58,403.91 L498.53,401.08 L502.63,389.08 L510.61,391.79 Z" fill="none" stroke="#111" stroke-width="0.5" stroke-linejoin="round"/>
<polygon points="453.29,430.48 443.98,427.26 449.12,418.76 458.16,419.93" fill="#ffe900" stroke="#ffe900" stroke-width="0.3"/>
<path d="M453.29,430.48 L443.98,427.26 L449.12,418.76 L458.16,419.93 Z" fill="none" stroke="#111" stroke-width="0.5" stroke-linejoin="round"/>
<polygon points="615.87,471.28 610.44,462.87 611.41,459.94 614.10,458.04 618.05,465.73" fill="#aaff00" stroke="#aaff00" stroke-width="0.3"/>
<polygon points="611.41,459.94 612.84,455.61 614.10,458.04" fill="#eeff00" stroke="#eeff00" stroke-width="0.3"/>
<path d="M615.87,471.28 L610.44,462.87 L612.84,455.61 L618.05,465.73 Z" fill="none" stroke="#111" stroke-width="0.5" stroke-linejoin="round"/>
<polygon points="555.20,424.18 550.45,420.86 557.59,419.53" fill="#ffe900" stroke="#ffe900" stroke-width="0.3"/>
<polygon points="550.45,420.86 535.00,410.05 538.70,401.81 558.59,417.57 557.59,419.53" fill="#ffd400" stroke="#ffd400" stroke-width="0.3"/>
<path d="M555.20,424.18 L535.00,410.05 L538.70,401.81 L558.59,417.57 Z" fill="none" stroke="#111" stroke-width="0.5" stroke-linejoin="round"/>
<polygon points="514.90,412.72 506.58,403.91 507.96,399.76 517.39,398.96 518.82,400.48" fill="#ffd400" stroke="#ffd400" stroke-width="0.3"/>
<polygon points="507.96,399.76 510.61,391.79 517.39,398.96" fill="#ffbe00" stroke="#ffbe00" stroke-width="0.3"/>
<path d="M514.90,412.72 L506.58,403.91 L510.61,391.79 L518.82,400.48 Z" fill="none" stroke="#111" stroke-width="0.5" stroke-linejoin="round"/>
<polygon points="494.32,413.40 483.61,412.13 487.90,399.97 498.53,401.08" fill="#ffd400" stroke="#ffd400" stroke-width="0.3"/>
<path d="M494.32,413.40 L483.61,412.13 L487.90,399.97 L498.53,401.08 Z" fill="none" stroke="#111" stroke-width="0.5" stroke-linejoin="round"/>
<polygon points="590.39,431.13 579.55,429.78 582.49,423.12 593.10,426.31" fill="#ffe900" stroke="#ffe900" stroke-width="0.3"/>
<path d="M590.39,431.13 L579.55,429.78 L582.49,423.12 L593.10,426.31 Z" fill="none" stroke="#111" stroke-width="0.5" stroke-linejoin="round"/>
<polygon points="479.20,424.61 468.52,421.28 468.88,420.28 480.45,421.09" fill="#ffe900" stroke="#ffe900" stroke-width="0.3"/>
<polygon points="468.88,420.28 473.02,408.95 483.61,412.13 480.45,421.09" fill="#ffd400" stroke="#ffd400" stroke-width="0.3"/>
<path d="M479.20,424.61 L468.52,421.28 L473.02,408.95 L483.61,412.13 Z" fill="none" stroke="#111" stroke-width="0.5" stroke-linejoin="round"/>
<polygon points="610.44,462.87 609.66,461.23 611.41,459.94" fill="#aaff00" stroke="#aaff00" stroke-width="0.3"/>
<polygon points="609.66,461.23 600.67,442.24 600.76,441.94 605.88,439.27 612.84,455.61 611.41,459.94" fill="#eeff00" stroke="#eeff00" stroke-width="0.3"/>
<polygon points="600.76,441.94 603.36,433.36 605.88,439.27" fill="#ffe900" stroke="#ffe900" stroke-width="0.3"/>
<path d="M610.44,462.87 L600.67,442.24 L603.36,433.36 L612.84,455.61 Z" fill="none" stroke="#111" stroke-width="0.5" stroke-linejoin="round"/>
<polygon points="565.79,431.38 555.20,424.18 557.59,419.53 560.67,418.97 569.01,424.61" fill="#ffe900" stroke="#ffe900" stroke-width="0.3"/>
<polygon points="557.59,419.53 558.59,417.57 560.67,418.97" fill="#ffd400" stroke="#ffd400" stroke-width="0.3"/>
<path d="M565.79,431.38 L555.20,424.18 L558.59,417.57 L569.01,424.61 Z" fill="none" stroke="#111" stroke-width="0.5" stroke-linejoin="round"/>
<polygon points="531.18,418.57 514.90,412.72 518.82,400.48 535.00,410.05" fill="#ffd400" stroke="#ffd400" stroke-width="0.3"/>
<path d="M531.18,418.57 L514.90,412.72 L518.82,400.48 L535.00,410.05 Z" fill="none" stroke="#111" stroke-width="0.5" stroke-linejoin="round"/>
<polygon points="595.49,437.65 590.39,431.13 593.10,426.31 598.26,428.87" fill="#ffe900" stroke="#ffe900" stroke-width="0.3"/>
<path d="M595.49,437.65 L590.39,431.13 L593.10,426.31 L598.26,428.87 Z" fill="none" stroke="#111" stroke-width="0.5" stroke-linejoin="round"/>
<polygon points="463.75,431.96 453.29,430.48 458.16,419.93 468.52,421.28" fill="#ffe900" stroke="#ffe900" stroke-width="0.3"/>
<path d="M463.75,431.96 L453.29,430.48 L458.16,419.93 L468.52,421.28 Z" fill="none" stroke="#111" stroke-width="0.5" stroke-linejoin="round"/>
<polygon points="600.67,442.24 600.41,442.01 600.76,441.94" fill="#eeff00" stroke="#eeff00" stroke-width="0.3"/>
<polygon points="600.41,442.01 595.49,437.65 598.26,428.87 603.36,433.36 600.76,441.94" fill="#ffe900" stroke="#ffe900" stroke-width="0.3"/>
<path d="M600.67,442.24 L595.49,437.65 L598.26,428.87 L603.36,433.36 Z" fill="none" stroke="#111" stroke-width="0.5" stroke-linejoin="round"/>
<polygon points="502.54,418.33 494.32,413.40 498.53,401.08 506.58,403.91" fill="#ffd400" stroke="#ffd400" stroke-width="0.3"/>
<path d="M502.54,418.33 L494.32,413.40 L498.53,401.08 L506.58,403.91 Z" fill="none" stroke="#111" stroke-width="0.5" stroke-linejoin="round"/>
<polygon points="618.50,494.91 614.47,483.87 618.64,480.17 620.78,487.01" fill="#77ff00" stroke="#77ff00" stroke-width="0.3"/>
<polygon points="614.47,483.87 613.36,480.84 615.87,471.28 618.64,480.17" fill="#aaff00" stroke="#aaff00" stroke-width="0.3"/>
<path d="M618.50,494.91 L613.36,480.84 L615.87,471.28 L620.78,487.01 Z" fill="none" stroke="#111" stroke-width="0.5" stroke-linejoin="round"/>
<polygon points="576.50,436.69 565.79,431.38 569.01,424.61 579.55,429.78" fill="#ffe900" stroke="#ffe900" stroke-width="0.3"/>
<path d="M576.50,436.69 L565.79,431.38 L569.01,424.61 L579.55,429.78 Z" fill="none" stroke="#111" stroke-width="0.5" stroke-linejoin="round"/>
<polygon points="448.10,439.38 438.68,436.04 443.98,427.26 453.29,430.48" fill="#ffe900" stroke="#ffe900" stroke-width="0.3"/>
<path d="M448.10,439.38 L438.68,436.04 L443.98,427.26 L453.29,430.48 Z" fill="none" stroke="#111" stroke-width="0.5" stroke-linejoin="round"/>
<polygon points="510.80,423.30 509.14,422.30 511.21,422.23" fill="#ffe900" stroke="#ffe900" stroke-width="0.3"/>
<polygon points="509.14,422.30 502.54,418.33 506.58,403.91 514.90,412.72 511.21,422.23" fill="#ffd400" stroke="#ffd400" stroke-width="0.3"/>
<path d="M510.80,423.30 L502.54,418.33 L506.58,403.91 L514.90,412.72 Z" fill="none" stroke="#111" stroke-width="0.5" stroke-linejoin="round"/>
<polygon points="490.11,428.02 479.20,424.61 480.45,421.09 491.81,422.13" fill="#ffe900" stroke="#ffe900" stroke-width="0.3"/>
<polygon points="480.45,421.09 483.61,412.13 494.32,413.40 491.81,422.13" fill="#ffd400" stroke="#ffd400" stroke-width="0.3"/>
<path d="M490.11,428.02 L479.20,424.61 L483.61,412.13 L494.32,413.40 Z" fill="none" stroke="#111" stroke-width="0.5" stroke-linejoin="round"/>
<polygon points="613.36,480.84 607.84,472.31 610.44,462.87 615.87,471.28" fill="#aaff00" stroke="#aaff00" stroke-width="0.3"/>
<path d="M613.36,480.84 L607.84,472.31 L610.44,462.87 L615.87,471.28 Z" fill="none" stroke="#111" stroke-width="0.5" stroke-linejoin="round"/>
<polygon points="474.68,437.42 463.75,431.96 468.52,421.28 479.20,424.61" fill="#ffe900" stroke="#ffe900" stroke-width="0.3"/>
<path d="M474.68,437.42 L463.75,431.96 L468.52,421.28 L479.20,424.61 Z" fill="none" stroke="#111" stroke-width="0.5" stroke-linejoin="round"/>
<polygon points="551.68,427.04 542.04,423.06 550.45,420.86 555.20,424.18" fill="#ffe900" stroke="#ffe900" stroke-width="0.3"/>
<polygon points="542.04,423.06 531.18,418.57 535.00,410.05 550.45,420.86" fill="#ffd400" stroke="#ffd400" stroke-width="0.3"/>
<path d="M551.68,427.04 L531.18,418.57 L535.00,410.05 L555.20,424.18 Z" fill="none" stroke="#111" stroke-width="0.5" stroke-linejoin="round"/>
<polygon points="587.44,440.11 576.50,436.69 579.55,429.78 590.39,431.13" fill="#ffe900" stroke="#ffe900" stroke-width="0.3"/>
<path d="M587.44,440.11 L576.50,436.69 L579.55,429.78 L590.39,431.13 Z" fill="none" stroke="#111" stroke-width="0.5" stroke-linejoin="round"/>
<polygon points="607.84,472.31 604.08,464.41 609.66,461.23 610.44,462.87" fill="#aaff00" stroke="#aaff00" stroke-width="0.3"/>
<polygon points="604.08,464.41 597.89,451.41 600.67,442.24 609.66,461.23" fill="#eeff00" stroke="#eeff00" stroke-width="0.3"/>
<path d="M607.84,472.31 L597.89,451.41 L600.67,442.24 L610.44,462.87 Z" fill="none" stroke="#111" stroke-width="0.5" stroke-linejoin="round"/>
<polygon points="498.31,431.09 490.11,428.02 491.81,422.13 501.20,422.37" fill="#ffe900" stroke="#ffe900" stroke-width="0.3"/>
<polygon points="491.81,422.13 494.32,413.40 502.54,418.33 501.20,422.37" fill="#ffd400" stroke="#ffd400" stroke-width="0.3"/>
<path d="M498.31,431.09 L490.11,428.02 L494.32,413.40 L502.54,418.33 Z" fill="none" stroke="#111" stroke-width="0.5" stroke-linejoin="round"/>
<polygon points="527.23,427.37 510.80,423.30 511.21,422.23 529.09,423.23" fill="#ffe900" stroke="#ffe900" stroke-width="0.3"/>
<polygon points="511.21,422.23 514.90,412.72 531.18,418.57 529.09,423.23" fill="#ffd400" stroke="#ffd400" stroke-width="0.3"/>
<path d="M527.23,427.37 L510.80,423.30 L514.90,412.72 L531.18,418.57 Z" fill="none" stroke="#111" stroke-width="0.5" stroke-linejoin="round"/>
<polygon points="459.00,444.93 458.45,444.65 459.10,444.67" fill="#eeff00" stroke="#eeff00" stroke-width="0.3"/>
<polygon points="458.45,444.65 448.10,439.38 453.29,430.48 463.75,431.96 459.10,444.67" fill="#ffe900" stroke="#ffe900" stroke-width="0.3"/>
<path d="M459.00,444.93 L448.10,439.38 L453.29,430.48 L463.75,431.96 Z" fill="none" stroke="#111" stroke-width="0.5" stroke-linejoin="round"/>
<polygon points="592.70,444.77 592.44,444.54 592.85,444.41" fill="#eeff00" stroke="#eeff00" stroke-width="0.3"/>
<polygon points="592.44,444.54 587.44,440.11 590.39,431.13 595.49,437.65 592.85,444.41" fill="#ffe900" stroke="#ffe900" stroke-width="0.3"/>
<path d="M592.70,444.77 L587.44,440.11 L590.39,431.13 L595.49,437.65 Z" fill="none" stroke="#111" stroke-width="0.5" stroke-linejoin="round"/>
<polygon points="562.42,440.37 551.68,427.04 555.20,424.18 565.79,431.38" fill="#ffe900" stroke="#ffe900" stroke-width="0.3"/>
<path d="M562.42,440.37 L551.68,427.04 L555.20,424.18 L565.79,431.38 Z" fill="none" stroke="#111" stroke-width="0.5" stroke-linejoin="round"/>
<polygon points="597.89,451.41 592.70,444.77 592.85,444.41 600.41,442.01 600.67,442.24" fill="#eeff00" stroke="#eeff00" stroke-width="0.3"/>
<polygon points="592.85,444.41 595.49,437.65 600.41,442.01" fill="#ffe900" stroke="#ffe900" stroke-width="0.3"/>
<path d="M597.89,451.41 L592.70,444.77 L595.49,437.65 L600.67,442.24 Z" fill="none" stroke="#111" stroke-width="0.5" stroke-linejoin="round"/>
<polygon points="485.69,440.98 474.68,437.42 479.20,424.61 490.11,428.02" fill="#ffe900" stroke="#ffe900" stroke-width="0.3"/>
<path d="M485.69,440.98 L474.68,437.42 L479.20,424.61 L490.11,428.02 Z" fill="none" stroke="#111" stroke-width="0.5" stroke-linejoin="round"/>
<polygon points="506.66,436.18 498.31,431.09 501.20,422.37 509.14,422.30 510.80,423.30" fill="#ffe900" stroke="#ffe900" stroke-width="0.3"/>
<polygon points="501.20,422.37 502.54,418.33 509.14,422.30" fill="#ffd400" stroke="#ffd400" stroke-width="0.3"/>
<path d="M506.66,436.18 L498.31,431.09 L502.54,418.33 L510.80,423.30 Z" fill="none" stroke="#111" stroke-width="0.5" stroke-linejoin="round"/>
<polygon points="616.14,503.09 610.67,492.62 612.36,485.22 614.47,483.87 618.50,494.91" fill="#77ff00" stroke="#77ff00" stroke-width="0.3"/>
<polygon points="612.36,485.22 613.36,480.84 614.47,483.87" fill="#aaff00" stroke="#aaff00" stroke-width="0.3"/>
<path d="M616.14,503.09 L610.67,492.62 L613.36,480.84 L618.50,494.91 Z" fill="none" stroke="#111" stroke-width="0.5" stroke-linejoin="round"/>
<polygon points="573.33,443.85 562.42,440.37 565.79,431.38 576.50,436.69" fill="#ffe900" stroke="#ffe900" stroke-width="0.3"/>
<path d="M573.33,443.85 L562.42,440.37 L565.79,431.38 L576.50,436.69 Z" fill="none" stroke="#111" stroke-width="0.5" stroke-linejoin="round"/>
<polygon points="470.04,450.56 459.00,444.93 459.10,444.67 472.00,445.00" fill="#eeff00" stroke="#eeff00" stroke-width="0.3"/>
<polygon points="459.10,444.67 463.75,431.96 474.68,437.42 472.00,445.00" fill="#ffe900" stroke="#ffe900" stroke-width="0.3"/>
<path d="M470.04,450.56 L459.00,444.93 L463.75,431.96 L474.68,437.42 Z" fill="none" stroke="#111" stroke-width="0.5" stroke-linejoin="round"/>
<polygon points="610.67,492.62 608.42,487.44 612.36,485.22" fill="#77ff00" stroke="#77ff00" stroke-width="0.3"/>
<polygon points="608.42,487.44 605.26,480.15 607.84,472.31 613.36,480.84 612.36,485.22" fill="#aaff00" stroke="#aaff00" stroke-width="0.3"/>
<path d="M610.67,492.62 L605.26,480.15 L607.84,472.31 L613.36,480.84 Z" fill="none" stroke="#111" stroke-width="0.5" stroke-linejoin="round"/>
<polygon points="493.97,444.18 485.69,440.98 490.11,428.02 498.31,431.09" fill="#ffe900" stroke="#ffe900" stroke-width="0.3"/>
<path d="M493.97,444.18 L485.69,440.98 L490.11,428.02 L498.31,431.09 Z" fill="none" stroke="#111" stroke-width="0.5" stroke-linejoin="round"/>
<polygon points="548.02,436.12 527.23,427.37 529.09,423.23 542.04,423.06 551.68,427.04" fill="#ffe900" stroke="#ffe900" stroke-width="0.3"/>
<polygon points="529.09,423.23 531.18,418.57 542.04,423.06" fill="#ffd400" stroke="#ffd400" stroke-width="0.3"/>
<path d="M548.02,436.12 L527.23,427.37 L531.18,418.57 L551.68,427.04 Z" fill="none" stroke="#111" stroke-width="0.5" stroke-linejoin="round"/>
<polygon points="523.24,440.50 506.66,436.18 510.80,423.30 527.23,427.37" fill="#ffe900" stroke="#ffe900" stroke-width="0.3"/>
<path d="M523.24,440.50 L506.66,436.18 L510.80,423.30 L527.23,427.37 Z" fill="none" stroke="#111" stroke-width="0.5" stroke-linejoin="round"/>
<polygon points="584.40,449.39 578.29,446.33 585.53,445.95" fill="#eeff00" stroke="#eeff00" stroke-width="0.3"/>
<polygon points="578.29,446.33 573.33,443.85 576.50,436.69 587.44,440.11 585.53,445.95" fill="#ffe900" stroke="#ffe900" stroke-width="0.3"/>
<path d="M584.40,449.39 L573.33,443.85 L576.50,436.69 L587.44,440.11 Z" fill="none" stroke="#111" stroke-width="0.5" stroke-linejoin="round"/>
<polygon points="605.26,480.15 599.39,467.87 604.08,464.41 607.84,472.31" fill="#aaff00" stroke="#aaff00" stroke-width="0.3"/>
<polygon points="599.39,467.87 595.10,458.91 597.89,451.41 604.08,464.41" fill="#eeff00" stroke="#eeff00" stroke-width="0.3"/>
<path d="M605.26,480.15 L595.10,458.91 L597.89,451.41 L607.84,472.31 Z" fill="none" stroke="#111" stroke-width="0.5" stroke-linejoin="round"/>
<polygon points="481.15,454.30 470.04,450.56 472.00,445.00 483.98,446.00" fill="#eeff00" stroke="#eeff00" stroke-width="0.3"/>
<polygon points="472.00,445.00 474.68,437.42 485.69,440.98 483.98,446.00" fill="#ffe900" stroke="#ffe900" stroke-width="0.3"/>
<path d="M481.15,454.30 L470.04,450.56 L474.68,437.42 L485.69,440.98 Z" fill="none" stroke="#111" stroke-width="0.5" stroke-linejoin="round"/>
<polygon points="502.41,449.40 497.75,446.52 503.35,446.46" fill="#eeff00" stroke="#eeff00" stroke-width="0.3"/>
<polygon points="497.75,446.52 493.97,444.18 498.31,431.09 506.66,436.18 503.35,446.46" fill="#ffe900" stroke="#ffe900" stroke-width="0.3"/>
<path d="M502.41,449.40 L493.97,444.18 L498.31,431.09 L506.66,436.18 Z" fill="none" stroke="#111" stroke-width="0.5" stroke-linejoin="round"/>
<polygon points="589.81,452.16 584.40,449.39 585.53,445.95 592.44,444.54 592.70,444.77" fill="#eeff00" stroke="#eeff00" stroke-width="0.3"/>
<polygon points="585.53,445.95 587.44,440.11 592.44,444.54" fill="#ffe900" stroke="#ffe900" stroke-width="0.3"/>
<path d="M589.81,452.16 L584.40,449.39 L587.44,440.11 L592.70,444.77 Z" fill="none" stroke="#111" stroke-width="0.5" stroke-linejoin="round"/>
<polygon points="558.93,451.65 555.66,447.00 560.78,445.69" fill="#eeff00" stroke="#eeff00" stroke-width="0.3"/>
<polygon points="555.66,447.00 548.02,436.12 551.68,427.04 562.42,440.37 560.78,445.69" fill="#ffe900" stroke="#ffe900" stroke-width="0.3"/>
<path d="M558.93,451.65 L548.02,436.12 L551.68,427.04 L562.42,440.37 Z" fill="none" stroke="#111" stroke-width="0.5" stroke-linejoin="round"/>
<polygon points="595.10,458.91 589.81,452.16 592.70,444.77 597.89,451.41" fill="#eeff00" stroke="#eeff00" stroke-width="0.3"/>
<path d="M595.10,458.91 L589.81,452.16 L592.70,444.77 L597.89,451.41 Z" fill="none" stroke="#111" stroke-width="0.5" stroke-linejoin="round"/>
<polygon points="613.34,517.20 609.79,510.45 615.14,508.13" fill="#38ff00" stroke="#38ff00" stroke-width="0.3"/>
<polygon points="609.79,510.45 607.79,506.63 610.67,492.62 616.14,503.09 615.14,508.13" fill="#77ff00" stroke="#77ff00" stroke-width="0.3"/>
<path d="M613.34,517.20 L607.79,506.63 L610.67,492.62 L616.14,503.09 Z" fill="none" stroke="#111" stroke-width="0.5" stroke-linejoin="round"/>
<polygon points="569.98,455.29 558.93,451.65 560.78,445.69 572.59,446.39" fill="#eeff00" stroke="#eeff00" stroke-width="0.3"/>
<polygon points="560.78,445.69 562.42,440.37 573.33,443.85 572.59,446.39" fill="#ffe900" stroke="#ffe900" stroke-width="0.3"/>
<path d="M569.98,455.29 L558.93,451.65 L562.42,440.37 L573.33,443.85 Z" fill="none" stroke="#111" stroke-width="0.5" stroke-linejoin="round"/>
<polygon points="489.51,457.62 481.15,454.30 483.98,446.00 493.17,446.57" fill="#eeff00" stroke="#eeff00" stroke-width="0.3"/>
<polygon points="483.98,446.00 485.69,440.98 493.97,444.18 493.17,446.57" fill="#ffe900" stroke="#ffe900" stroke-width="0.3"/>
<path d="M489.51,457.62 L481.15,454.30 L485.69,440.98 L493.97,444.18 Z" fill="none" stroke="#111" stroke-width="0.5" stroke-linejoin="round"/>
<polygon points="607.79,506.63 602.19,495.99 603.48,489.35 608.42,487.44 610.67,492.62" fill="#77ff00" stroke="#77ff00" stroke-width="0.3"/>
<polygon points="603.48,489.35 605.26,480.15 608.42,487.44" fill="#aaff00" stroke="#aaff00" stroke-width="0.3"/>
<path d="M607.79,506.63 L602.19,495.99 L605.26,480.15 L610.67,492.62 Z" fill="none" stroke="#111" stroke-width="0.5" stroke-linejoin="round"/>
<polygon points="519.21,455.98 502.41,449.40 503.35,446.46 521.30,447.94" fill="#eeff00" stroke="#eeff00" stroke-width="0.3"/>
<polygon points="503.35,446.46 506.66,436.18 523.24,440.50 521.30,447.94" fill="#ffe900" stroke="#ffe900" stroke-width="0.3"/>
<path d="M519.21,455.98 L502.41,449.40 L506.66,436.18 L523.24,440.50 Z" fill="none" stroke="#111" stroke-width="0.5" stroke-linejoin="round"/>
<polygon points="544.25,447.54 523.24,440.50 527.23,427.37 548.02,436.12" fill="#ffe900" stroke="#ffe900" stroke-width="0.3"/>
<path d="M544.25,447.54 L523.24,440.50 L527.23,427.37 L548.02,436.12 Z" fill="none" stroke="#111" stroke-width="0.5" stroke-linejoin="round"/>
<polygon points="498.04,462.98 489.51,457.62 493.17,446.57 497.75,446.52 502.41,449.40" fill="#eeff00" stroke="#eeff00" stroke-width="0.3"/>
<polygon points="493.17,446.57 493.97,444.18 497.75,446.52" fill="#ffe900" stroke="#ffe900" stroke-width="0.3"/>
<path d="M498.04,462.98 L489.51,457.62 L493.97,444.18 L502.41,449.40 Z" fill="none" stroke="#111" stroke-width="0.5" stroke-linejoin="round"/>
<polygon points="581.19,460.98 569.98,455.29 572.59,446.39 578.29,446.33 584.40,449.39" fill="#eeff00" stroke="#eeff00" stroke-width="0.3"/>
<polygon points="572.59,446.39 573.33,443.85 578.29,446.33" fill="#ffe900" stroke="#ffe900" stroke-width="0.3"/>
<path d="M581.19,460.98 L569.98,455.29 L573.33,443.85 L584.40,449.39 Z" fill="none" stroke="#111" stroke-width="0.5" stroke-linejoin="round"/>
<polygon points="602.19,495.99 599.63,490.69 603.48,489.35" fill="#77ff00" stroke="#77ff00" stroke-width="0.3"/>
<polygon points="599.63,490.69 591.89,474.64 592.86,469.89 599.39,467.87 605.26,480.15 603.48,489.35" fill="#aaff00" stroke="#aaff00" stroke-width="0.3"/>
<polygon points="592.86,469.89 595.10,458.91 599.39,467.87" fill="#eeff00" stroke="#eeff00" stroke-width="0.3"/>
<path d="M602.19,495.99 L591.89,474.64 L595.10,458.91 L605.26,480.15 Z" fill="none" stroke="#111" stroke-width="0.5" stroke-linejoin="round"/>
<polygon points="610.47,531.68 604.83,521.03 606.73,511.77 609.79,510.45 613.34,517.20" fill="#38ff00" stroke="#38ff00" stroke-width="0.3"/>
<polygon points="606.73,511.77 607.79,506.63 609.79,510.45" fill="#77ff00" stroke="#77ff00" stroke-width="0.3"/>
<path d="M610.47,531.68 L604.83,521.03 L607.79,506.63 L613.34,517.20 Z" fill="none" stroke="#111" stroke-width="0.5" stroke-linejoin="round"/>
<polygon points="555.33,463.28 545.68,449.56 555.66,447.00 558.93,451.65" fill="#eeff00" stroke="#eeff00" stroke-width="0.3"/>
<polygon points="545.68,449.56 544.25,447.54 548.02,436.12 555.66,447.00" fill="#ffe900" stroke="#ffe900" stroke-width="0.3"/>
<path d="M555.33,463.28 L544.25,447.54 L548.02,436.12 L558.93,451.65 Z" fill="none" stroke="#111" stroke-width="0.5" stroke-linejoin="round"/>
<polygon points="586.61,465.83 581.19,460.98 584.40,449.39 589.81,452.16" fill="#eeff00" stroke="#eeff00" stroke-width="0.3"/>
<path d="M586.61,465.83 L581.19,460.98 L584.40,449.39 L589.81,452.16 Z" fill="none" stroke="#111" stroke-width="0.5" stroke-linejoin="round"/>
<polygon points="591.89,474.64 589.52,470.68 592.86,469.89" fill="#aaff00" stroke="#aaff00" stroke-width="0.3"/>
<polygon points="589.52,470.68 586.61,465.83 589.81,452.16 595.10,458.91 592.86,469.89" fill="#eeff00" stroke="#eeff00" stroke-width="0.3"/>
<path d="M591.89,474.64 L586.61,465.83 L589.81,452.16 L595.10,458.91 Z" fill="none" stroke="#111" stroke-width="0.5" stroke-linejoin="round"/>
<polygon points="604.83,521.03 601.19,514.17 606.73,511.77" fill="#38ff00" stroke="#38ff00" stroke-width="0.3"/>
<polygon points="601.19,514.17 599.14,510.30 602.19,495.99 607.79,506.63 606.73,511.77" fill="#77ff00" stroke="#77ff00" stroke-width="0.3"/>
<path d="M604.83,521.03 L599.14,510.30 L602.19,495.99 L607.79,506.63 Z" fill="none" stroke="#111" stroke-width="0.5" stroke-linejoin="round"/>
<polygon points="566.48,469.07 555.33,463.28 558.93,451.65 569.98,455.29" fill="#eeff00" stroke="#eeff00" stroke-width="0.3"/>
<path d="M566.48,469.07 L555.33,463.28 L558.93,451.65 L569.98,455.29 Z" fill="none" stroke="#111" stroke-width="0.5" stroke-linejoin="round"/>
<polygon points="515.01,469.83 498.04,462.98 502.41,449.40 519.21,455.98" fill="#eeff00" stroke="#eeff00" stroke-width="0.3"/>
<path d="M515.01,469.83 L498.04,462.98 L502.41,449.40 L519.21,455.98 Z" fill="none" stroke="#111" stroke-width="0.5" stroke-linejoin="round"/>
<polygon points="540.39,463.37 519.21,455.98 521.30,447.94 543.67,449.89" fill="#eeff00" stroke="#eeff00" stroke-width="0.3"/>
<polygon points="521.30,447.94 523.24,440.50 544.25,447.54 543.67,449.89" fill="#ffe900" stroke="#ffe900" stroke-width="0.3"/>
<path d="M540.39,463.37 L519.21,455.98 L523.24,440.50 L544.25,447.54 Z" fill="none" stroke="#111" stroke-width="0.5" stroke-linejoin="round"/>
<polygon points="599.14,510.30 590.37,494.02 599.63,490.69 602.19,495.99" fill="#77ff00" stroke="#77ff00" stroke-width="0.3"/>
<polygon points="590.37,494.02 588.61,490.75 591.89,474.64 599.63,490.69" fill="#aaff00" stroke="#aaff00" stroke-width="0.3"/>
<path d="M599.14,510.30 L588.61,490.75 L591.89,474.64 L602.19,495.99 Z" fill="none" stroke="#111" stroke-width="0.5" stroke-linejoin="round"/>
<polygon points="577.82,474.95 573.27,472.59 578.37,472.69" fill="#aaff00" stroke="#aaff00" stroke-width="0.3"/>
<polygon points="573.27,472.59 566.48,469.07 569.98,455.29 581.19,460.98 578.37,472.69" fill="#eeff00" stroke="#eeff00" stroke-width="0.3"/>
<path d="M577.82,474.95 L566.48,469.07 L569.98,455.29 L581.19,460.98 Z" fill="none" stroke="#111" stroke-width="0.5" stroke-linejoin="round"/>
<polygon points="607.51,546.56 601.83,537.92 609.82,534.92" fill="#00ff00" stroke="#00ff00" stroke-width="0.3"/>
<polygon points="601.83,537.92 601.69,537.70 604.83,521.03 610.47,531.68 609.82,534.92" fill="#38ff00" stroke="#38ff00" stroke-width="0.3"/>
<path d="M607.51,546.56 L601.69,537.70 L604.83,521.03 L610.47,531.68 Z" fill="none" stroke="#111" stroke-width="0.5" stroke-linejoin="round"/>
<polygon points="588.61,490.75 583.25,481.87 585.39,471.67 589.52,470.68 591.89,474.64" fill="#aaff00" stroke="#aaff00" stroke-width="0.3"/>
<polygon points="585.39,471.67 586.61,465.83 589.52,470.68" fill="#eeff00" stroke="#eeff00" stroke-width="0.3"/>
<path d="M588.61,490.75 L583.25,481.87 L586.61,465.83 L591.89,474.64 Z" fill="none" stroke="#111" stroke-width="0.5" stroke-linejoin="round"/>
<polygon points="583.25,481.87 577.82,474.95 578.37,472.69 585.39,471.67" fill="#aaff00" stroke="#aaff00" stroke-width="0.3"/>
<polygon points="578.37,472.69 581.19,460.98 586.61,465.83 585.39,471.67" fill="#eeff00" stroke="#eeff00" stroke-width="0.3"/>
<path d="M583.25,481.87 L577.82,474.95 L581.19,460.98 L586.61,465.83 Z" fill="none" stroke="#111" stroke-width="0.5" stroke-linejoin="round"/>
<polygon points="551.62,477.27 548.25,473.10 552.97,472.19" fill="#aaff00" stroke="#aaff00" stroke-width="0.3"/>
<polygon points="548.25,473.10 540.39,463.37 543.67,449.89 545.68,449.56 555.33,463.28 552.97,472.19" fill="#eeff00" stroke="#eeff00" stroke-width="0.3"/>
<polygon points="543.67,449.89 544.25,447.54 545.68,449.56" fill="#ffe900" stroke="#ffe900" stroke-width="0.3"/>
<path d="M551.62,477.27 L540.39,463.37 L544.25,447.54 L555.33,463.28 Z" fill="none" stroke="#111" stroke-width="0.5" stroke-linejoin="round"/>
<polygon points="601.69,537.70 595.93,526.91 598.19,515.24 601.19,514.17 604.83,521.03" fill="#38ff00" stroke="#38ff00" stroke-width="0.3"/>
<polygon points="598.19,515.24 599.14,510.30 601.19,514.17" fill="#77ff00" stroke="#77ff00" stroke-width="0.3"/>
<path d="M601.69,537.70 L595.93,526.91 L599.14,510.30 L604.83,521.03 Z" fill="none" stroke="#111" stroke-width="0.5" stroke-linejoin="round"/>
<polygon points="562.87,485.23 551.62,477.27 552.97,472.19 565.77,472.27" fill="#aaff00" stroke="#aaff00" stroke-width="0.3"/>
<polygon points="552.97,472.19 555.33,463.28 566.48,469.07 565.77,472.27" fill="#eeff00" stroke="#eeff00" stroke-width="0.3"/>
<path d="M562.87,485.23 L551.62,477.27 L555.33,463.28 L566.48,469.07 Z" fill="none" stroke="#111" stroke-width="0.5" stroke-linejoin="round"/>
<polygon points="536.44,479.57 523.51,473.69 537.64,474.67" fill="#aaff00" stroke="#aaff00" stroke-width="0.3"/>
<polygon points="523.51,473.69 515.01,469.83 519.21,455.98 540.39,463.37 537.64,474.67" fill="#eeff00" stroke="#eeff00" stroke-width="0.3"/>
<path d="M536.44,479.57 L515.01,469.83 L519.21,455.98 L540.39,463.37 Z" fill="none" stroke="#111" stroke-width="0.5" stroke-linejoin="round"/>
<polygon points="595.93,526.91 590.96,517.76 598.19,515.24" fill="#38ff00" stroke="#38ff00" stroke-width="0.3"/>
<polygon points="590.96,517.76 585.24,507.23 587.77,494.83 590.37,494.02 599.14,510.30 598.19,515.24" fill="#77ff00" stroke="#77ff00" stroke-width="0.3"/>
<polygon points="587.77,494.83 588.61,490.75 590.37,494.02" fill="#aaff00" stroke="#aaff00" stroke-width="0.3"/>
<path d="M595.93,526.91 L585.24,507.23 L588.61,490.75 L599.14,510.30 Z" fill="none" stroke="#111" stroke-width="0.5" stroke-linejoin="round"/>
<polygon points="574.32,491.29 562.87,485.23 565.77,472.27 573.27,472.59 577.82,474.95" fill="#aaff00" stroke="#aaff00" stroke-width="0.3"/>
<polygon points="565.77,472.27 566.48,469.07 573.27,472.59" fill="#eeff00" stroke="#eeff00" stroke-width="0.3"/>
<path d="M574.32,491.29 L562.87,485.23 L566.48,469.07 L577.82,474.95 Z" fill="none" stroke="#111" stroke-width="0.5" stroke-linejoin="round"/>
<polygon points="585.24,507.23 579.82,498.28 580.11,496.90 587.77,494.83" fill="#77ff00" stroke="#77ff00" stroke-width="0.3"/>
<polygon points="580.11,496.90 583.25,481.87 588.61,490.75 587.77,494.83" fill="#aaff00" stroke="#aaff00" stroke-width="0.3"/>
<path d="M585.24,507.23 L579.82,498.28 L583.25,481.87 L588.61,490.75 Z" fill="none" stroke="#111" stroke-width="0.5" stroke-linejoin="round"/>
<polygon points="604.48,561.85 598.57,552.90 601.63,538.00 601.83,537.92 607.51,546.56" fill="#00ff00" stroke="#00ff00" stroke-width="0.3"/>
<polygon points="601.63,538.00 601.69,537.70 601.83,537.92" fill="#38ff00" stroke="#38ff00" stroke-width="0.3"/>
<path d="M604.48,561.85 L598.57,552.90 L601.69,537.70 L607.51,546.56 Z" fill="none" stroke="#111" stroke-width="0.5" stroke-linejoin="round"/>
<polygon points="579.82,498.28 578.90,497.12 580.11,496.90" fill="#77ff00" stroke="#77ff00" stroke-width="0.3"/>
<polygon points="578.90,497.12 574.32,491.29 577.82,474.95 583.25,481.87 580.11,496.90" fill="#aaff00" stroke="#aaff00" stroke-width="0.3"/>
<path d="M579.82,498.28 L574.32,491.29 L577.82,474.95 L583.25,481.87 Z" fill="none" stroke="#111" stroke-width="0.5" stroke-linejoin="round"/>
<polygon points="547.80,491.65 536.44,479.57 537.64,474.67 548.25,473.10 551.62,477.27" fill="#aaff00" stroke="#aaff00" stroke-width="0.3"/>
<polygon points="537.64,474.67 540.39,463.37 548.25,473.10" fill="#eeff00" stroke="#eeff00" stroke-width="0.3"/>
<path d="M547.80,491.65 L536.44,479.57 L540.39,463.37 L551.62,477.27 Z" fill="none" stroke="#111" stroke-width="0.5" stroke-linejoin="round"/>
<polygon points="598.57,552.90 592.63,543.91 593.13,541.33 601.63,538.00" fill="#00ff00" stroke="#00ff00" stroke-width="0.3"/>
<polygon points="593.13,541.33 595.93,526.91 601.69,537.70 601.63,538.00" fill="#38ff00" stroke="#38ff00" stroke-width="0.3"/>
<path d="M598.57,552.90 L592.63,543.91 L595.93,526.91 L601.69,537.70 Z" fill="none" stroke="#111" stroke-width="0.5" stroke-linejoin="round"/>
<polygon points="559.21,497.80 547.80,491.65 551.62,477.27 562.87,485.23" fill="#aaff00" stroke="#aaff00" stroke-width="0.3"/>
<path d="M559.21,497.80 L547.80,491.65 L551.62,477.27 L562.87,485.23 Z" fill="none" stroke="#111" stroke-width="0.5" stroke-linejoin="round"/>
<polygon points="592.63,543.91 591.41,541.91 593.13,541.33" fill="#00ff00" stroke="#00ff00" stroke-width="0.3"/>
<polygon points="591.41,541.91 581.74,526.05 582.85,520.09 590.96,517.76 595.93,526.91 593.13,541.33" fill="#38ff00" stroke="#38ff00" stroke-width="0.3"/>
<polygon points="582.85,520.09 585.24,507.23 590.96,517.76" fill="#77ff00" stroke="#77ff00" stroke-width="0.3"/>
<path d="M592.63,543.91 L581.74,526.05 L585.24,507.23 L595.93,526.91 Z" fill="none" stroke="#111" stroke-width="0.5" stroke-linejoin="round"/>
<polygon points="581.74,526.05 579.35,521.24 582.85,520.09" fill="#38ff00" stroke="#38ff00" stroke-width="0.3"/>
<polygon points="579.35,521.24 576.30,515.09 579.82,498.28 585.24,507.23 582.85,520.09" fill="#77ff00" stroke="#77ff00" stroke-width="0.3"/>
<path d="M581.74,526.05 L576.30,515.09 L579.82,498.28 L585.24,507.23 Z" fill="none" stroke="#111" stroke-width="0.5" stroke-linejoin="round"/>
<polygon points="570.82,504.04 562.10,499.35 572.14,499.21" fill="#77ff00" stroke="#77ff00" stroke-width="0.3"/>
<polygon points="562.10,499.35 559.21,497.80 562.87,485.23 574.32,491.29 572.14,499.21" fill="#aaff00" stroke="#aaff00" stroke-width="0.3"/>
<path d="M570.82,504.04 L559.21,497.80 L562.87,485.23 L574.32,491.29 Z" fill="none" stroke="#111" stroke-width="0.5" stroke-linejoin="round"/>
<polygon points="576.30,515.09 570.82,504.04 572.14,499.21 578.90,497.12 579.82,498.28" fill="#77ff00" stroke="#77ff00" stroke-width="0.3"/>
<polygon points="572.14,499.21 574.32,491.29 578.90,497.12" fill="#aaff00" stroke="#aaff00" stroke-width="0.3"/>
<path d="M576.30,515.09 L570.82,504.04 L574.32,491.29 L579.82,498.28 Z" fill="none" stroke="#111" stroke-width="0.5" stroke-linejoin="round"/><rect x="752.80" y="478.66" width="15.30" height="9.64" fill="#00ff00"/>
<rect x="752.80" y="469.21" width="15.30" height="9.64" fill="#38ff00"/>
<rect x="752.80" y="459.77" width="15.30" height="9.64" fill="#77ff00"/>
<rect x="752.80" y="450.32" width="15.30" height="9.64" fill="#aaff00"/>
<rect x="752.80" y="440.88" width="15.30" height="9.64" fill="#eeff00"/>
<rect x="752.80" y="431.43" width="15.30" height="9.64" fill="#ffe900"/>
<rect x="752.80" y="421.99" width="15.30" height="9.64" fill="#ffd400"/>
<rect x="752.80" y="412.54" width="15.30" height="9.64" fill="#ffbe00"/>
<rect x="752.80" y="403.10" width="15.30" height="9.64" fill="#ffa800"/>
<text x="0" y="0" font-size="7.3" text-anchor="start" transform="translate(769.10 490.10) rotate(0.0) scale(0.84 1.0)">30.6</text>
<text x="0" y="0" font-size="7.3" text-anchor="start" transform="translate(769.10 480.66) rotate(0.0) scale(0.84 1.0)">39.9</text>
<text x="0" y="0" font-size="7.3" text-anchor="start" transform="translate(769.10 471.21) rotate(0.0) scale(0.84 1.0)">49.2</text>
<text x="0" y="0" font-size="7.3" text-anchor="start" transform="translate(769.10 461.77) rotate(0.0) scale(0.84 1.0)">58.5</text>
<text x="0" y="0" font-size="7.3" text-anchor="start" transform="translate(769.10 452.32) rotate(0.0) scale(0.84 1.0)">67.8</text>
<text x="0" y="0" font-size="7.3" text-anchor="start" transform="translate(769.10 442.88) rotate(0.0) scale(0.84 1.0)">77.1</text>
<text x="0" y="0" font-size="7.3" text-anchor="start" transform="translate(769.10 433.43) rotate(0.0) scale(0.84 1.0)">86.4</text>
<text x="0" y="0" font-size="7.3" text-anchor="start" transform="translate(769.10 423.99) rotate(0.0) scale(0.84 1.0)">95.7</text>
<text x="0" y="0" font-size="7.3" text-anchor="start" transform="translate(771.40 414.54) rotate(0.0) scale(0.84 1.0)">105</text>
<text x="0" y="0" font-size="7.3" text-anchor="start" transform="translate(769.10 405.10) rotate(0.0) scale(0.84 1.0)">114.3</text></svg>
</body></html>
